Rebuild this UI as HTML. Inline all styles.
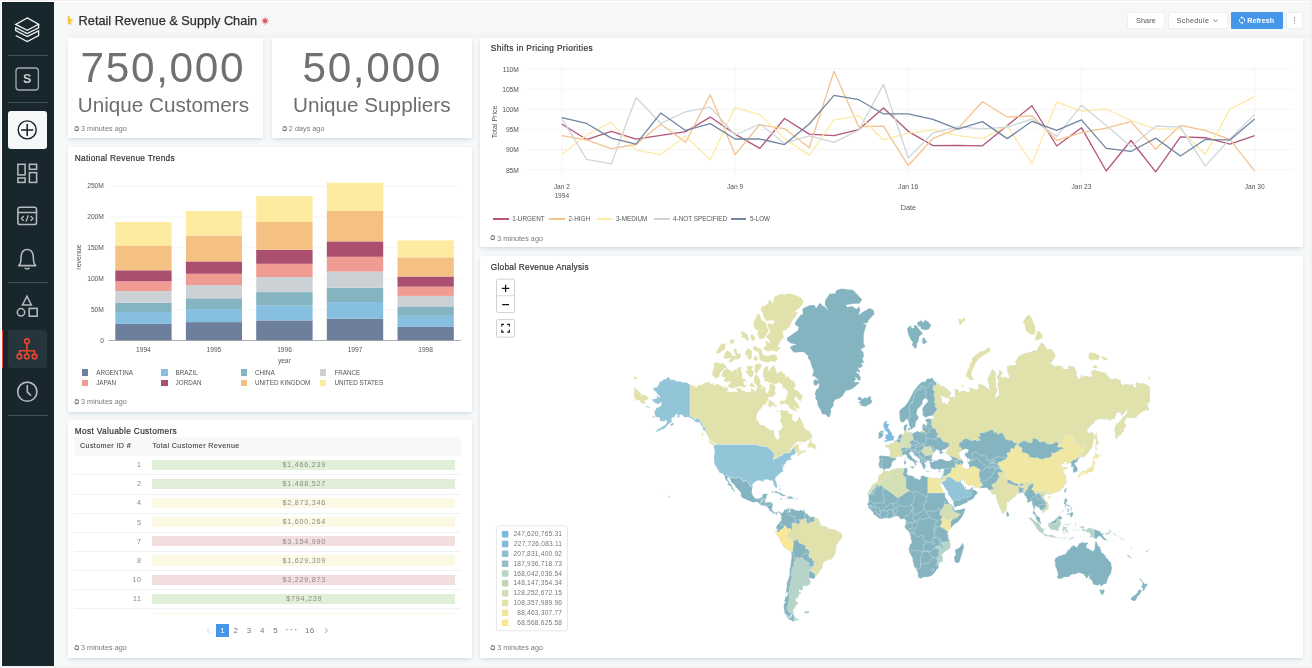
<!DOCTYPE html>
<html><head><meta charset="utf-8"><title>Retail Revenue &amp; Supply Chain</title>
<style>
html,body{margin:0;padding:0}
body{width:1312px;height:668px;overflow:hidden;background:#f2f2f2;font-family:"Liberation Sans",sans-serif;position:relative}
#lb{position:absolute;left:1px;top:1px;width:1309px;height:665px;background:#fff}
#app{position:absolute;left:2px;top:2px;width:1308px;height:664px;background:#f6f8f9;overflow:hidden}
#side{position:absolute;left:2px;top:2px;width:52px;height:664px;background:#18262e}
.t{position:absolute;line-height:20px;height:20px;white-space:nowrap;font-family:"Liberation Sans",sans-serif}
.card{position:absolute;background:#fff;border-radius:1.5px;box-shadow:0 2px 4px -1px rgba(102,136,153,.32),0 0 1px rgba(102,136,153,.05)}
.ri{display:block;width:100%;height:100%}
.div{position:absolute;left:8px;width:39.5px;height:1px;background:#46525a}
svg{position:absolute;left:0;top:0;overflow:visible}
.btn{position:absolute;background:#fff;border-radius:1.2px;box-shadow:0 0 0 .6px #e3e7ea}
.row{position:absolute;left:74.2px;width:386.6px;height:1px;background:#eff1f2}
.bar{position:absolute;left:152.2px;width:302.8px;height:10.2px}
#root{position:absolute;left:0;top:0;width:1312px;height:668px;overflow:hidden;will-change:transform}
</style></head><body><div id="root">
<div id="lb"></div><div id="app"></div><div id="side"></div>

<div class="div" style="top:54.6px"></div><div class="div" style="top:102.2px"></div>
<div class="div" style="top:282.2px"></div><div class="div" style="top:415.2px"></div>
<div style="position:absolute;left:8px;top:110.8px;width:38.8px;height:38.4px;background:#f5f7f8;border-radius:3px"></div>
<div style="position:absolute;left:8px;top:329.6px;width:38.8px;height:38.6px;background:#26343c;border-radius:3px"></div>
<div style="position:absolute;left:2px;top:329.6px;width:1.4px;height:38.6px;background:#e8472d"></div>
<svg width="60" height="668" viewBox="0 0 60 668" fill="none" stroke-linecap="round" stroke-linejoin="round">
 <!-- logo -->
 <g stroke="#f1f3f4" stroke-width="1.3" stroke-linejoin="miter" stroke-linecap="butt">
  <path d="M27.24 17.9 L38.6 24.2 L27.24 30.3 L15.7 24.4 Z"/>
  <path d="M38.6 24.2 V27.9 L27.24 33.6 L15.7 27.7 V30.7 L27.24 36.5 L38.6 30.9 V35.7 L27.24 41.6 L15.7 35.5"/>
 </g>
 <!-- S box -->
 <rect x="16" y="68" width="22.4" height="22" rx="3" stroke="#a3aaae" stroke-width="1.3"/>
 <!-- plus circle -->
 <circle cx="27.2" cy="129.9" r="9" stroke="#151c21" stroke-width="1.4"/>
 <path d="M27.2 124.4V135.4M21.7 129.9H32.7" stroke="#151c21" stroke-width="1.5"/>
 <!-- dashboard -->
 <g stroke="#b4babd" stroke-width="1.55" stroke-linejoin="miter">
  <rect x="17.9" y="164.3" width="7.2" height="10.6"/><rect x="29.4" y="164.3" width="7.2" height="5"/>
  <rect x="17.9" y="178" width="7.2" height="4.4"/><rect x="29.4" y="172.6" width="7.2" height="9.8"/>
 </g>
 <!-- code -->
 <g stroke="#b4babd" stroke-width="1.55">
  <rect x="17.9" y="207.2" width="18.6" height="17.4" rx="2.2"/><path d="M17.9 212.4H36.5"/>
  <path d="M23.4 216.4L21.4 218.4 23.4 220.4M31 216.4L33 218.4 31 220.4M28.2 215.8L26.2 221" stroke-width="1.35"/>
 </g>
 <!-- bell -->
 <g stroke="#b4babd" stroke-width="1.55">
  <path d="M18.6 265.6H35.8C33.9 264 33.4 262 33.4 258.4C33.4 252.6 31 249.4 27.2 249.4C23.4 249.4 21 252.6 21 258.4C21 262 20.5 264 18.6 265.6Z"/>
  <path d="M25.2 268.2C25.8 269.2 28.6 269.2 29.2 268.2"/>
 </g>
 <!-- shapes -->
 <g stroke="#b4babd" stroke-width="1.55" stroke-linejoin="miter">
  <path d="M26.9 296.2L31.3 305H22.5Z"/><circle cx="21" cy="312.3" r="3.7"/><rect x="29.2" y="308.4" width="8" height="7.8"/>
 </g>
 <!-- tree -->
 <g stroke="#e8472d" stroke-width="1.6">
  <circle cx="26.9" cy="341.2" r="2.3"/><path d="M26.9 343.6V354M19.4 354V350.8H34.5V354"/>
  <circle cx="19.4" cy="356.4" r="2.3"/><circle cx="26.9" cy="356.4" r="2.3"/><circle cx="34.5" cy="356.4" r="2.3"/>
 </g>
 <!-- clock -->
 <g stroke="#b4babd" stroke-width="1.6"><circle cx="27.3" cy="391.7" r="9.6"/><path d="M27.3 385.6V391.9L30.6 395.2"/></g>
</svg>

<div class="t" style="left:-272.8px;width:600px;text-align:center;top:69.20px;font-size:12.6px;color:#c9ced1;font-weight:700;letter-spacing:0px;">S</div>
<div style="position:absolute;left:68px;top:2px;width:1242px;height:34.8px;background:linear-gradient(#f6f7f8 0,#f6f7f8 88%,#eef1f3 100%)"></div>
<svg width="300" height="40" viewBox="0 0 300 40"><path d="M67.8 15.6L69.4 15.9 70.3 19 73.4 19.6 71 21.7 71.5 25 69 23.8 67.8 24.3Z" fill="#f6c445"/><g stroke="#e5727f" stroke-width="1"><path d="M265.1 17.2V24.6M261.4 20.9H268.8M262.5 18.3L267.7 23.5M267.7 18.3L262.5 23.5"/></g><circle cx="265.1" cy="20.9" r="2.1" fill="#e25a6a"/></svg>
<div class="t" style="left:78.6px;top:11.30px;font-size:12.75px;color:#2f2f2f;font-weight:400;letter-spacing:0.0px;-webkit-text-stroke:.25px #2f2f2f;">Retail Revenue &amp; Supply Chain</div>
<div class="btn" style="left:1127.6px;top:12.6px;width:36.6px;height:15.8px"></div>
<div class="btn" style="left:1168.6px;top:12.6px;width:58.6px;height:15.8px"></div>
<div class="btn" style="left:1231px;top:11.8px;width:51.9px;height:17.3px;background:#4596e8;box-shadow:none"></div>
<div class="btn" style="left:1286.8px;top:12.6px;width:15.4px;height:15.8px"></div>
<div class="t" style="left:845.9000000000001px;width:600px;text-align:center;top:10.50px;font-size:7.2px;color:#555;font-weight:400;letter-spacing:0.1px;">Share</div>
<div class="t" style="left:1176.6px;top:10.50px;font-size:7.2px;color:#555;font-weight:400;letter-spacing:0.33px;">Schedule</div>
<svg width="1312" height="40" viewBox="0 0 1312 40" fill="none"><path d="M1213.4 19.4L1215.6 21.8 1217.8 19.4" stroke="#666" stroke-width=".8"/><g fill="#7a7a7a"><circle cx="1294.5" cy="18" r=".65"/><circle cx="1294.5" cy="20.4" r=".65"/><circle cx="1294.5" cy="22.8" r=".65"/></g><g stroke="#fff" stroke-width=".95" fill="none"><path d="M1242 17.6A2.6 2.6 0 0 1 1244.3 21.4M1242 23A2.6 2.6 0 0 1 1239.7 19.2"/></g><path d="M1240.9 16.3L1242.6 17.6 1240.9 18.9zM1243.1 24.3L1241.4 23 1243.1 21.7z" fill="#fff"/></svg>
<div class="t" style="left:1247.2px;top:10.50px;font-size:7.2px;color:#fff;font-weight:700;letter-spacing:0.03px;">Refresh</div>
<div class="card" style="left:67.8px;top:37.6px;width:195.6px;height:100.8px"></div>
<div class="card" style="left:271.9px;top:37.6px;width:199.8px;height:100.8px"></div>
<div class="card" style="left:67.8px;top:146.9px;width:403.9px;height:264.9px"></div>
<div class="card" style="left:67.8px;top:420.4px;width:403.9px;height:237.2px"></div>
<div class="card" style="left:480px;top:37.6px;width:823px;height:209.4px"></div>
<div class="card" style="left:480px;top:255.6px;width:823px;height:402px"></div>
<div class="t" style="left:-137.1px;width:600px;text-align:center;top:58.40px;font-size:42.4px;color:#707070;font-weight:400;letter-spacing:1.65px;line-height:50px;height:50px;margin-top:-15px;">750,000</div>
<div class="t" style="left:-136.6px;width:600px;text-align:center;top:94.60px;font-size:20.7px;color:#6e6e6e;font-weight:400;letter-spacing:0px;">Unique Customers</div>
<div style="position:absolute;left:74.1px;top:126.0px;width:5.4px;height:5.4px"><svg class="ri" viewBox="0 0 10 10"><circle cx="5" cy="5" r="3.6" fill="none" stroke="#6a6a6a" stroke-width="1.9" stroke-dasharray="9.4 1.9" stroke-dashoffset="-1"/><path d="M3.2 0.1L5.9 1.5 3.6 3.1zM6.8 9.9L4.1 8.5 6.4 6.9z" fill="#6a6a6a"/></svg></div><div class="t" style="left:81.0px;top:119.10px;font-size:7.2px;color:#767676;font-weight:400;letter-spacing:0.05px;">3 minutes ago</div>
<div class="t" style="left:72.19999999999999px;width:600px;text-align:center;top:58.40px;font-size:42.4px;color:#707070;font-weight:400;letter-spacing:1.65px;line-height:50px;height:50px;margin-top:-15px;">50,000</div>
<div class="t" style="left:71.80000000000001px;width:600px;text-align:center;top:94.60px;font-size:20.7px;color:#6e6e6e;font-weight:400;letter-spacing:0px;">Unique Suppliers</div>
<div style="position:absolute;left:281.90000000000003px;top:126.0px;width:5.4px;height:5.4px"><svg class="ri" viewBox="0 0 10 10"><circle cx="5" cy="5" r="3.6" fill="none" stroke="#6a6a6a" stroke-width="1.9" stroke-dasharray="9.4 1.9" stroke-dashoffset="-1"/><path d="M3.2 0.1L5.9 1.5 3.6 3.1zM6.8 9.9L4.1 8.5 6.4 6.9z" fill="#6a6a6a"/></svg></div><div class="t" style="left:288.8px;top:119.10px;font-size:7.2px;color:#767676;font-weight:400;letter-spacing:0.05px;">2 days ago</div>
<div class="t" style="left:74.8px;top:147.60px;font-size:8.3px;color:#333;font-weight:400;letter-spacing:0.28px;-webkit-text-stroke:.2px #333;">National Revenue Trends</div>
<svg width="1312" height="668" viewBox="0 0 1312 668"><line x1="108.5" x2="461" y1="186.20" y2="186.20" stroke="#f0f1f1" stroke-width="0.7"/>
<line x1="108.5" x2="461" y1="217.04" y2="217.04" stroke="#f0f1f1" stroke-width="0.7"/>
<line x1="108.5" x2="461" y1="247.88" y2="247.88" stroke="#f0f1f1" stroke-width="0.7"/>
<line x1="108.5" x2="461" y1="278.72" y2="278.72" stroke="#f0f1f1" stroke-width="0.7"/>
<line x1="108.5" x2="461" y1="309.56" y2="309.56" stroke="#f0f1f1" stroke-width="0.7"/>
<rect x="115.30" y="323.90" width="56.30" height="16.50" fill="#6e7f9d"/>
<rect x="115.30" y="312.10" width="56.30" height="11.80" fill="#86bfe0"/>
<rect x="115.30" y="302.90" width="56.30" height="9.20" fill="#85b4c1"/>
<rect x="115.30" y="291.10" width="56.30" height="11.80" fill="#cbd1d5"/>
<rect x="115.30" y="281.30" width="56.30" height="9.80" fill="#f09c92"/>
<rect x="115.30" y="270.30" width="56.30" height="11.00" fill="#ab4f71"/>
<rect x="115.30" y="245.50" width="56.30" height="24.80" fill="#f5c182"/>
<rect x="115.30" y="222.00" width="56.30" height="23.50" fill="#fdeb9f"/>
<rect x="185.90" y="322.10" width="56.10" height="18.30" fill="#6e7f9d"/>
<rect x="185.90" y="309.10" width="56.10" height="13.00" fill="#86bfe0"/>
<rect x="185.90" y="298.30" width="56.10" height="10.80" fill="#85b4c1"/>
<rect x="185.90" y="285.10" width="56.10" height="13.20" fill="#cbd1d5"/>
<rect x="185.90" y="273.80" width="56.10" height="11.30" fill="#f09c92"/>
<rect x="185.90" y="261.40" width="56.10" height="12.40" fill="#ab4f71"/>
<rect x="185.90" y="235.50" width="56.10" height="25.90" fill="#f5c182"/>
<rect x="185.90" y="211.00" width="56.10" height="24.50" fill="#fdeb9f"/>
<rect x="256.20" y="320.40" width="56.40" height="20.00" fill="#6e7f9d"/>
<rect x="256.20" y="305.30" width="56.40" height="15.10" fill="#86bfe0"/>
<rect x="256.20" y="292.10" width="56.40" height="13.20" fill="#85b4c1"/>
<rect x="256.20" y="277.00" width="56.40" height="15.10" fill="#cbd1d5"/>
<rect x="256.20" y="263.80" width="56.40" height="13.20" fill="#f09c92"/>
<rect x="256.20" y="249.80" width="56.40" height="14.00" fill="#ab4f71"/>
<rect x="256.20" y="222.00" width="56.40" height="27.80" fill="#f5c182"/>
<rect x="256.20" y="196.20" width="56.40" height="25.80" fill="#fdeb9f"/>
<rect x="326.80" y="318.60" width="56.40" height="21.80" fill="#6e7f9d"/>
<rect x="326.80" y="302.10" width="56.40" height="16.50" fill="#86bfe0"/>
<rect x="326.80" y="287.80" width="56.40" height="14.30" fill="#85b4c1"/>
<rect x="326.80" y="271.60" width="56.40" height="16.20" fill="#cbd1d5"/>
<rect x="326.80" y="256.80" width="56.40" height="14.80" fill="#f09c92"/>
<rect x="326.80" y="241.40" width="56.40" height="15.40" fill="#ab4f71"/>
<rect x="326.80" y="211.00" width="56.40" height="30.40" fill="#f5c182"/>
<rect x="326.80" y="182.70" width="56.40" height="28.30" fill="#fdeb9f"/>
<rect x="397.50" y="326.90" width="56.30" height="13.50" fill="#6e7f9d"/>
<rect x="397.50" y="315.90" width="56.30" height="11.00" fill="#86bfe0"/>
<rect x="397.50" y="306.40" width="56.30" height="9.50" fill="#85b4c1"/>
<rect x="397.50" y="295.90" width="56.30" height="10.50" fill="#cbd1d5"/>
<rect x="397.50" y="286.70" width="56.30" height="9.20" fill="#f09c92"/>
<rect x="397.50" y="276.50" width="56.30" height="10.20" fill="#ab4f71"/>
<rect x="397.50" y="257.40" width="56.30" height="19.10" fill="#f5c182"/>
<rect x="397.50" y="240.40" width="56.30" height="17.00" fill="#fdeb9f"/>
<line x1="108.5" x2="461" y1="340.5" y2="340.5" stroke="#8a8f94" stroke-width="0.7"/></svg>
<div class="t" style="right:1208.1px;top:176.30px;font-size:6.7px;color:#555;font-weight:400;letter-spacing:0px;">250M</div>
<div class="t" style="right:1208.1px;top:207.14px;font-size:6.7px;color:#555;font-weight:400;letter-spacing:0px;">200M</div>
<div class="t" style="right:1208.1px;top:237.98px;font-size:6.7px;color:#555;font-weight:400;letter-spacing:0px;">150M</div>
<div class="t" style="right:1208.1px;top:268.82px;font-size:6.7px;color:#555;font-weight:400;letter-spacing:0px;">100M</div>
<div class="t" style="right:1208.1px;top:299.66px;font-size:6.7px;color:#555;font-weight:400;letter-spacing:0px;">50M</div>
<div class="t" style="right:1208.1px;top:330.50px;font-size:6.7px;color:#555;font-weight:400;letter-spacing:0px;">0</div>
<div class="t" style="left:-156.6px;width:600px;text-align:center;top:340.00px;font-size:6.6px;color:#555;font-weight:400;letter-spacing:0px;">1994</div>
<div class="t" style="left:-86.05000000000001px;width:600px;text-align:center;top:340.00px;font-size:6.6px;color:#555;font-weight:400;letter-spacing:0px;">1995</div>
<div class="t" style="left:-15.5px;width:600px;text-align:center;top:340.00px;font-size:6.6px;color:#555;font-weight:400;letter-spacing:0px;">1996</div>
<div class="t" style="left:55.049999999999955px;width:600px;text-align:center;top:340.00px;font-size:6.6px;color:#555;font-weight:400;letter-spacing:0px;">1997</div>
<div class="t" style="left:125.60000000000002px;width:600px;text-align:center;top:340.00px;font-size:6.6px;color:#555;font-weight:400;letter-spacing:0px;">1998</div>
<div class="t" style="left:-15.699999999999989px;width:600px;text-align:center;top:350.60px;font-size:6.6px;color:#555;font-weight:400;letter-spacing:0px;">year</div>
<div class="t" style="left:-220.6px;width:600px;text-align:center;top:247.20px;font-size:7.0px;color:#555;font-weight:400;letter-spacing:0px;transform:rotate(-90deg);">revenue</div>
<div style="position:absolute;left:81.9px;top:369.2px;width:6.4px;height:6.4px;background:#6e7f9d"></div>
<div class="t" style="left:96.2px;top:362.50px;font-size:6.3px;color:#555;font-weight:400;letter-spacing:0px;">ARGENTINA</div>
<div style="position:absolute;left:161.3px;top:369.2px;width:6.4px;height:6.4px;background:#86bfe0"></div>
<div class="t" style="left:175.60000000000002px;top:362.50px;font-size:6.3px;color:#555;font-weight:400;letter-spacing:0px;">BRAZIL</div>
<div style="position:absolute;left:240.7px;top:369.2px;width:6.4px;height:6.4px;background:#85b4c1"></div>
<div class="t" style="left:255.00000000000003px;top:362.50px;font-size:6.3px;color:#555;font-weight:400;letter-spacing:0px;">CHINA</div>
<div style="position:absolute;left:320.1px;top:369.2px;width:6.4px;height:6.4px;background:#cbd1d5"></div>
<div class="t" style="left:334.40000000000003px;top:362.50px;font-size:6.3px;color:#555;font-weight:400;letter-spacing:0px;">FRANCE</div>
<div style="position:absolute;left:81.9px;top:379.8px;width:6.4px;height:6.4px;background:#f09c92"></div>
<div class="t" style="left:96.2px;top:373.10px;font-size:6.3px;color:#555;font-weight:400;letter-spacing:0px;">JAPAN</div>
<div style="position:absolute;left:161.3px;top:379.8px;width:6.4px;height:6.4px;background:#ab4f71"></div>
<div class="t" style="left:175.60000000000002px;top:373.10px;font-size:6.3px;color:#555;font-weight:400;letter-spacing:0px;">JORDAN</div>
<div style="position:absolute;left:240.7px;top:379.8px;width:6.4px;height:6.4px;background:#f5c182"></div>
<div class="t" style="left:255.00000000000003px;top:373.10px;font-size:6.3px;color:#555;font-weight:400;letter-spacing:0px;">UNITED KINGDOM</div>
<div style="position:absolute;left:320.1px;top:379.8px;width:6.4px;height:6.4px;background:#fdeb9f"></div>
<div class="t" style="left:334.40000000000003px;top:373.10px;font-size:6.3px;color:#555;font-weight:400;letter-spacing:0px;">UNITED STATES</div>
<div style="position:absolute;left:74.1px;top:399.20000000000005px;width:5.4px;height:5.4px"><svg class="ri" viewBox="0 0 10 10"><circle cx="5" cy="5" r="3.6" fill="none" stroke="#6a6a6a" stroke-width="1.9" stroke-dasharray="9.4 1.9" stroke-dashoffset="-1"/><path d="M3.2 0.1L5.9 1.5 3.6 3.1zM6.8 9.9L4.1 8.5 6.4 6.9z" fill="#6a6a6a"/></svg></div><div class="t" style="left:81.0px;top:392.30px;font-size:7.2px;color:#767676;font-weight:400;letter-spacing:0.05px;">3 minutes ago</div>
<div class="t" style="left:490.8px;top:38.20px;font-size:8.3px;color:#333;font-weight:400;letter-spacing:0.37px;-webkit-text-stroke:.2px #333;">Shifts in Pricing Priorities</div>
<svg width="1312" height="668" viewBox="0 0 1312 668"><line x1="524" x2="1293" y1="69.00" y2="69.00" stroke="#f0f1f1" stroke-width="0.7"/>
<line x1="524" x2="1293" y1="89.13" y2="89.13" stroke="#f0f1f1" stroke-width="0.7"/>
<line x1="524" x2="1293" y1="109.26" y2="109.26" stroke="#f0f1f1" stroke-width="0.7"/>
<line x1="524" x2="1293" y1="129.39" y2="129.39" stroke="#f0f1f1" stroke-width="0.7"/>
<line x1="524" x2="1293" y1="149.52" y2="149.52" stroke="#f0f1f1" stroke-width="0.7"/>
<line x1="524" x2="1293" y1="169.65" y2="169.65" stroke="#f0f1f1" stroke-width="0.7"/>
<line x1="561.80" x2="561.80" y1="66" y2="178" stroke="#f0f1f1" stroke-width="0.7"/>
<line x1="735.02" x2="735.02" y1="66" y2="178" stroke="#f0f1f1" stroke-width="0.7"/>
<line x1="908.24" x2="908.24" y1="66" y2="178" stroke="#f0f1f1" stroke-width="0.7"/>
<line x1="1081.47" x2="1081.47" y1="66" y2="178" stroke="#f0f1f1" stroke-width="0.7"/>
<line x1="1254.69" x2="1254.69" y1="66" y2="178" stroke="#f0f1f1" stroke-width="0.7"/>
<polyline points="561.80,124.02 586.55,139.57 611.29,131.34 636.04,139.20 660.78,135.36 685.53,131.70 710.28,117.07 735.02,134.08 759.77,148.35 784.51,118.53 809.26,134.08 834.01,135.54 858.75,129.51 883.50,107.92 908.24,131.34 932.99,145.60 957.74,145.42 982.48,145.79 1007.23,125.48 1031.97,105.73 1056.72,145.97 1081.47,127.68 1106.21,171.03 1130.96,140.48 1155.70,171.94 1180.45,136.82 1205.20,137.74 1229.94,144.14 1254.69,135.54" fill="none" stroke="#b3557a" stroke-width="1.3" stroke-linejoin="round"/>
<polyline points="561.80,135.54 586.55,139.93 611.29,148.71 636.04,144.51 660.78,124.02 685.53,142.31 710.28,94.75 735.02,154.57 759.77,124.75 784.51,128.59 809.26,147.80 834.01,71.34 858.75,126.76 883.50,126.22 908.24,165.54 932.99,138.47 957.74,128.59 982.48,101.70 1007.23,117.07 1031.97,115.79 1056.72,140.48 1081.47,132.62 1106.21,128.04 1130.96,121.64 1155.70,149.08 1180.45,125.48 1205.20,130.42 1229.94,139.57 1254.69,171.03" fill="none" stroke="#f5c28f" stroke-width="1.3" stroke-linejoin="round"/>
<polyline points="561.80,154.20 586.55,135.00 611.29,122.19 636.04,150.18 660.78,154.57 685.53,135.91 710.28,159.69 735.02,107.56 759.77,114.51 784.51,138.65 809.26,155.12 834.01,119.81 858.75,115.79 883.50,139.93 908.24,133.17 932.99,129.87 957.74,135.54 982.48,138.65 1007.23,125.85 1031.97,163.71 1056.72,102.07 1081.47,111.22 1106.21,109.02 1130.96,120.36 1155.70,129.14 1180.45,129.14 1205.20,154.57 1229.94,109.39 1254.69,96.58" fill="none" stroke="#fdeaa6" stroke-width="1.3" stroke-linejoin="round"/>
<polyline points="561.80,118.17 586.55,159.32 611.29,163.90 636.04,97.50 660.78,123.29 685.53,111.77 710.28,107.19 735.02,135.00 759.77,124.02 784.51,143.23 809.26,135.91 834.01,142.31 858.75,130.06 883.50,84.33 908.24,158.04 932.99,132.80 957.74,126.76 982.48,128.78 1007.23,127.13 1031.97,119.08 1056.72,136.46 1081.47,105.18 1106.21,125.48 1130.96,146.52 1155.70,126.22 1180.45,127.13 1205.20,166.09 1229.94,139.02 1254.69,114.51" fill="none" stroke="#cfd6da" stroke-width="1.3" stroke-linejoin="round"/>
<polyline points="561.80,117.62 586.55,123.47 611.29,138.10 636.04,144.14 660.78,113.05 685.53,130.42 710.28,123.65 735.02,139.02 759.77,139.02 784.51,144.51 809.26,124.02 834.01,95.30 858.75,99.69 883.50,113.96 908.24,113.96 932.99,119.45 957.74,129.14 982.48,121.64 1007.23,138.65 1031.97,121.28 1056.72,130.42 1081.47,119.81 1106.21,148.35 1130.96,151.46 1155.70,138.10 1180.45,156.03 1205.20,139.57 1229.94,139.93 1254.69,118.90" fill="none" stroke="#7286a2" stroke-width="1.3" stroke-linejoin="round"/></svg>
<div class="t" style="right:793.1px;top:59.90px;font-size:6.7px;color:#555;font-weight:400;letter-spacing:0px;">110M</div>
<div class="t" style="right:793.1px;top:80.03px;font-size:6.7px;color:#555;font-weight:400;letter-spacing:0px;">105M</div>
<div class="t" style="right:793.1px;top:100.16px;font-size:6.7px;color:#555;font-weight:400;letter-spacing:0px;">100M</div>
<div class="t" style="right:793.1px;top:120.29px;font-size:6.7px;color:#555;font-weight:400;letter-spacing:0px;">95M</div>
<div class="t" style="right:793.1px;top:140.42px;font-size:6.7px;color:#555;font-weight:400;letter-spacing:0px;">90M</div>
<div class="t" style="right:793.1px;top:160.55px;font-size:6.7px;color:#555;font-weight:400;letter-spacing:0px;">85M</div>
<div class="t" style="left:261.79999999999995px;width:600px;text-align:center;top:177.00px;font-size:6.6px;color:#555;font-weight:400;letter-spacing:0px;">Jan 2</div>
<div class="t" style="left:435.02px;width:600px;text-align:center;top:177.00px;font-size:6.6px;color:#555;font-weight:400;letter-spacing:0px;">Jan 9</div>
<div class="t" style="left:608.24px;width:600px;text-align:center;top:177.00px;font-size:6.6px;color:#555;font-weight:400;letter-spacing:0px;">Jan 16</div>
<div class="t" style="left:781.46px;width:600px;text-align:center;top:177.00px;font-size:6.6px;color:#555;font-weight:400;letter-spacing:0px;">Jan 23</div>
<div class="t" style="left:954.6799999999998px;width:600px;text-align:center;top:177.00px;font-size:6.6px;color:#555;font-weight:400;letter-spacing:0px;">Jan 30</div>
<div class="t" style="left:261.79999999999995px;width:600px;text-align:center;top:185.80px;font-size:6.6px;color:#555;font-weight:400;letter-spacing:0px;">1994</div>
<div class="t" style="left:608.4px;width:600px;text-align:center;top:197.90px;font-size:7.2px;color:#555;font-weight:400;letter-spacing:0px;">Date</div>
<div class="t" style="left:195.39999999999998px;width:600px;text-align:center;top:111.60px;font-size:6.9px;color:#555;font-weight:400;letter-spacing:0.05px;transform:rotate(-90deg);">Total Price</div>
<div style="position:absolute;left:493.1px;top:218.2px;width:15.9px;height:1.4px;background:#b3557a"></div>
<div class="t" style="left:512.2px;top:208.90px;font-size:6.35px;color:#555;font-weight:400;letter-spacing:0px;">1-URGENT</div>
<div style="position:absolute;left:549.1px;top:218.2px;width:15.9px;height:1.4px;background:#f5c28f"></div>
<div class="t" style="left:568.6px;top:208.90px;font-size:6.35px;color:#555;font-weight:400;letter-spacing:0px;">2-HIGH</div>
<div style="position:absolute;left:596.6px;top:218.2px;width:15.9px;height:1.4px;background:#fdeaa6"></div>
<div class="t" style="left:616px;top:208.90px;font-size:6.35px;color:#555;font-weight:400;letter-spacing:0px;">3-MEDIUM</div>
<div style="position:absolute;left:653.9px;top:218.2px;width:15.9px;height:1.4px;background:#cfd6da"></div>
<div class="t" style="left:673px;top:208.90px;font-size:6.35px;color:#555;font-weight:400;letter-spacing:0px;">4-NOT SPECIFIED</div>
<div style="position:absolute;left:730.6px;top:218.2px;width:15.9px;height:1.4px;background:#7286a2"></div>
<div class="t" style="left:750px;top:208.90px;font-size:6.35px;color:#555;font-weight:400;letter-spacing:0px;">5-LOW</div>
<div style="position:absolute;left:490.3px;top:235.4px;width:5.4px;height:5.4px"><svg class="ri" viewBox="0 0 10 10"><circle cx="5" cy="5" r="3.6" fill="none" stroke="#6a6a6a" stroke-width="1.9" stroke-dasharray="9.4 1.9" stroke-dashoffset="-1"/><path d="M3.2 0.1L5.9 1.5 3.6 3.1zM6.8 9.9L4.1 8.5 6.4 6.9z" fill="#6a6a6a"/></svg></div><div class="t" style="left:497.2px;top:228.50px;font-size:7.2px;color:#767676;font-weight:400;letter-spacing:0.05px;">3 minutes ago</div>
<div class="t" style="left:74.8px;top:420.80px;font-size:8.3px;color:#333;font-weight:400;letter-spacing:0.34px;-webkit-text-stroke:.2px #333;">Most Valuable Customers</div>
<div style="position:absolute;left:74.2px;top:437.2px;width:386.6px;height:18.4px;background:#f7f8f9"></div>
<div class="t" style="left:80px;top:436.10px;font-size:7.2px;color:#3c3c3c;font-weight:400;letter-spacing:0.36px;-webkit-text-stroke:.1px #3c3c3c;">Customer ID #</div>
<div class="t" style="left:152.4px;top:436.10px;font-size:7.2px;color:#3c3c3c;font-weight:400;letter-spacing:0.37px;-webkit-text-stroke:.1px #3c3c3c;">Total Customer Revenue</div>
<div class="row" style="top:474.4px"></div>
<div class="bar" style="top:459.9px;background:#e1eed8"></div>
<div class="t" style="right:1170.6px;top:455.20px;font-size:7.2px;color:#8a8a8a;font-weight:400;letter-spacing:0.5px;">1</div>
<div class="t" style="left:4.300000000000011px;width:600px;text-align:center;top:455.10px;font-size:7.2px;color:#8a8a8a;font-weight:400;letter-spacing:0.75px;">$1,466,239</div>
<div class="row" style="top:493.5px"></div>
<div class="bar" style="top:479.0px;background:#e1eed8"></div>
<div class="t" style="right:1170.6px;top:474.30px;font-size:7.2px;color:#8a8a8a;font-weight:400;letter-spacing:0.5px;">2</div>
<div class="t" style="left:4.300000000000011px;width:600px;text-align:center;top:474.20px;font-size:7.2px;color:#8a8a8a;font-weight:400;letter-spacing:0.75px;">$1,488,527</div>
<div class="row" style="top:512.6px"></div>
<div class="bar" style="top:498.1px;background:#fbf8e3"></div>
<div class="t" style="right:1170.6px;top:493.40px;font-size:7.2px;color:#8a8a8a;font-weight:400;letter-spacing:0.5px;">4</div>
<div class="t" style="left:4.300000000000011px;width:600px;text-align:center;top:493.30px;font-size:7.2px;color:#8a8a8a;font-weight:400;letter-spacing:0.75px;">$2,873,346</div>
<div class="row" style="top:531.7px"></div>
<div class="bar" style="top:517.2px;background:#fbf8e3"></div>
<div class="t" style="right:1170.6px;top:512.50px;font-size:7.2px;color:#8a8a8a;font-weight:400;letter-spacing:0.5px;">5</div>
<div class="t" style="left:4.300000000000011px;width:600px;text-align:center;top:512.40px;font-size:7.2px;color:#8a8a8a;font-weight:400;letter-spacing:0.75px;">$1,600,264</div>
<div class="row" style="top:550.8px"></div>
<div class="bar" style="top:536.3px;background:#f2dede"></div>
<div class="t" style="right:1170.6px;top:531.60px;font-size:7.2px;color:#8a8a8a;font-weight:400;letter-spacing:0.5px;">7</div>
<div class="t" style="left:4.300000000000011px;width:600px;text-align:center;top:531.50px;font-size:7.2px;color:#8a8a8a;font-weight:400;letter-spacing:0.75px;">$3,154,990</div>
<div class="row" style="top:569.9px"></div>
<div class="bar" style="top:555.4px;background:#fbf8e3"></div>
<div class="t" style="right:1170.6px;top:550.70px;font-size:7.2px;color:#8a8a8a;font-weight:400;letter-spacing:0.5px;">8</div>
<div class="t" style="left:4.300000000000011px;width:600px;text-align:center;top:550.60px;font-size:7.2px;color:#8a8a8a;font-weight:400;letter-spacing:0.75px;">$1,629,309</div>
<div class="row" style="top:589.0px"></div>
<div class="bar" style="top:574.5px;background:#f2dede"></div>
<div class="t" style="right:1170.6px;top:569.80px;font-size:7.2px;color:#8a8a8a;font-weight:400;letter-spacing:0.5px;">10</div>
<div class="t" style="left:4.300000000000011px;width:600px;text-align:center;top:569.70px;font-size:7.2px;color:#8a8a8a;font-weight:400;letter-spacing:0.75px;">$3,229,873</div>
<div class="row" style="top:608.1px"></div>
<div class="bar" style="top:593.6px;background:#e1eed8"></div>
<div class="t" style="right:1170.6px;top:588.90px;font-size:7.2px;color:#8a8a8a;font-weight:400;letter-spacing:0.5px;">11</div>
<div class="t" style="left:4.300000000000011px;width:600px;text-align:center;top:588.80px;font-size:7.2px;color:#8a8a8a;font-weight:400;letter-spacing:0.75px;">$794,239</div>
<div class="bar" style="top:613.3px;height:1px;background:#fbf5dc"></div>
<div style="position:absolute;left:216px;top:623.6px;width:12.8px;height:13px;background:#4596e8"></div>
<div class="t" style="left:-77.6px;width:600px;text-align:center;top:620.60px;font-size:8px;color:#fff;font-weight:400;letter-spacing:0px;">1</div>
<div class="t" style="left:-64.19999999999999px;width:600px;text-align:center;top:620.60px;font-size:8px;color:#777;font-weight:400;letter-spacing:0.3px;">2</div>
<div class="t" style="left:-51px;width:600px;text-align:center;top:620.60px;font-size:8px;color:#777;font-weight:400;letter-spacing:0.3px;">3</div>
<div class="t" style="left:-37.60000000000002px;width:600px;text-align:center;top:620.60px;font-size:8px;color:#777;font-weight:400;letter-spacing:0.3px;">4</div>
<div class="t" style="left:-24.30000000000001px;width:600px;text-align:center;top:620.60px;font-size:8px;color:#777;font-weight:400;letter-spacing:0.3px;">5</div>
<div class="t" style="left:9.800000000000011px;width:600px;text-align:center;top:620.60px;font-size:8px;color:#777;font-weight:400;letter-spacing:0.3px;">16</div>
<div class="t" style="left:-7.800000000000011px;width:600px;text-align:center;top:619.90px;font-size:9px;color:#999;font-weight:700;letter-spacing:1.5px;">&middot;&middot;&middot;</div>
<svg width="400" height="668" viewBox="0 0 400 668" fill="none"><path d="M209.8 628.2L207.2 630.6 209.8 633" stroke="#c8c8c8" stroke-width=".8"/><path d="M324.9 628.2L327.5 630.6 324.9 633" stroke="#888" stroke-width=".8"/></svg>
<div style="position:absolute;left:74.1px;top:645.2px;width:5.4px;height:5.4px"><svg class="ri" viewBox="0 0 10 10"><circle cx="5" cy="5" r="3.6" fill="none" stroke="#6a6a6a" stroke-width="1.9" stroke-dasharray="9.4 1.9" stroke-dashoffset="-1"/><path d="M3.2 0.1L5.9 1.5 3.6 3.1zM6.8 9.9L4.1 8.5 6.4 6.9z" fill="#6a6a6a"/></svg></div><div class="t" style="left:81.0px;top:638.30px;font-size:7.2px;color:#767676;font-weight:400;letter-spacing:0.05px;">3 minutes ago</div>
<div class="t" style="left:490.8px;top:256.60px;font-size:8.3px;color:#333;font-weight:400;letter-spacing:0.25px;-webkit-text-stroke:.2px #333;">Global Revenue Analysis</div>
<svg width="1312" height="668" viewBox="0 0 1312 668"><defs><clipPath id="mc"><rect x="633.5" y="286" width="520" height="366"/></clipPath></defs><g clip-path="url(#mc)" stroke="#ffffff" stroke-opacity=".5" stroke-width=".5" stroke-linejoin="round">
<path d="M690.0 384.6L692.9 385.0L696.4 387.4L699.5 384.6L701.6 385.0L706.0 382.1L708.1 382.9L708.5 380.8L711.8 385.0L713.8 382.1L713.9 385.4L715.6 384.6L717.9 383.7L720.2 385.4L723.5 387.0L725.5 387.8L727.0 387.4L728.8 389.4L726.8 391.3L729.4 392.0L733.3 391.7L734.6 390.9L736.0 393.2L737.6 391.3L736.1 389.8L737.0 388.2L738.9 388.2L739.9 387.8L741.1 388.6L742.6 390.9L744.2 390.5L746.6 392.4L748.9 391.7L751.0 391.7L750.7 389.4L752.0 388.6L754.3 390.1L754.3 393.5L755.2 390.5L756.3 390.5L757.0 386.6L755.5 384.2L753.8 382.5L753.9 377.7L755.6 374.6L757.5 375.0L758.9 377.3L760.9 382.1L759.6 384.2L762.3 385.0L762.2 389.0L764.2 385.8L765.9 388.6L765.5 391.3L766.8 393.9L768.4 391.3L769.4 387.8L769.5 383.3L771.5 383.7L773.7 384.2L775.5 386.2L775.7 388.2L774.5 390.5L775.5 392.4L775.4 394.3L772.7 396.8L770.7 397.2L769.1 396.1L768.6 397.9L767.4 401.0L766.9 402.4L765.2 404.7L763.2 405.0L762.1 406.3L761.9 408.2L760.3 408.9L758.5 411.3L757.0 414.6L756.5 417.0L756.3 420.4L758.5 420.6L759.1 423.4L759.8 425.2L761.8 424.7L764.5 425.7L765.9 426.8L766.9 428.1L768.6 428.8L770.2 429.9L772.5 430.1L774.1 430.4L774.0 432.3L774.4 434.8L775.4 437.4L777.5 439.7L778.7 439.0L779.4 436.4L778.7 432.8L777.7 431.4L780.0 430.4L781.5 428.6L782.4 426.8L782.3 425.0L781.3 422.5L779.5 420.6L781.3 417.5L780.5 414.9L780.1 410.4L781.1 409.5L783.5 410.4L785.0 410.7L786.3 410.1L787.6 411.0L789.3 412.9L789.7 414.0L792.3 414.0L792.3 416.7L792.7 420.1L794.0 420.6L795.2 422.3L797.2 420.6L798.6 417.5L799.5 416.4L800.6 419.0L802.5 422.3L804.0 425.5L803.5 427.3L805.3 428.6L806.6 430.1L808.9 430.9L809.9 431.6L810.5 433.6L811.5 434.0L812.1 434.8L812.2 437.6L810.2 439.2L807.8 439.9L806.0 441.9L803.6 442.2L800.5 441.7L798.3 441.7L796.9 441.9L795.7 443.5L793.9 444.4L791.7 447.4L790.1 449.3L791.3 448.9L793.6 446.1L796.6 444.4L798.7 444.2L800.0 445.3L798.7 446.5L799.2 448.9L799.6 450.6L801.5 451.6L803.9 451.2L805.3 448.9L805.5 450.3L806.3 451.2L804.6 452.4L801.3 453.6L800.0 454.4L798.3 456.0L797.3 455.8L797.2 454.0L799.7 452.4L797.4 452.4L795.9 452.8L794.9 451.6L794.9 448.7L794.3 448.0L793.3 448.5L792.9 448.0L791.7 449.5L791.3 451.2L790.7 452.0L790.1 452.4L789.7 453.0L787.0 453.0L784.7 453.0L782.5 454.8L782.0 455.8L778.5 456.0L778.8 456.4L779.0 457.2L777.1 458.2L775.5 458.5L774.0 459.5L773.1 459.3L772.9 458.7L774.0 457.0L774.4 455.8L773.7 452.4L772.2 451.4L772.4 451.0L771.5 450.3L771.5 449.9L770.5 449.7L768.1 447.6L765.4 446.1L764.1 446.8L761.9 446.1L760.8 446.5L759.3 445.7L757.9 445.5L756.9 445.3L756.5 445.0L756.2 443.7L755.6 443.7L755.6 444.6L734.4 444.6L716.1 444.6L715.5 443.9L713.1 442.4L712.1 441.5L709.5 440.6L708.6 438.5L708.8 437.1L707.0 436.0L706.8 434.0L705.0 432.3L705.0 431.1L705.8 429.9L705.8 428.3L703.3 426.5L701.9 423.6L700.9 421.7L699.6 420.4L698.7 419.2L697.9 417.8L696.4 418.7L695.0 420.4L693.9 418.4L692.9 417.3L691.4 416.4L690.0 416.4Z" fill="#e0e1ab"/>
<path d="M715.1 445.7L714.4 445.9L711.9 445.0L710.2 443.5L708.8 442.4L708.1 440.6L709.6 441.0L711.5 441.7L712.3 442.4L713.1 443.5L714.5 444.4ZM703.2 437.4L701.9 435.5L701.3 433.1L703.3 432.8L702.9 435.5ZM812.3 439.5L811.6 440.8L810.6 442.8L811.6 441.9L812.5 442.6L812.1 443.3L813.3 443.9L813.9 443.3L815.4 444.2L814.9 445.7L815.9 445.3L816.1 446.3L816.6 447.8L815.9 449.5L815.4 449.7L814.3 449.3L814.7 447.6L814.3 447.2L812.6 449.1L811.8 449.1L812.8 448.0L811.3 447.6L809.9 447.6L807.0 447.6L806.9 447.0L807.8 446.1L807.2 445.7L808.3 444.4L809.8 440.8L810.8 439.5L811.9 438.8ZM800.3 449.5L801.7 450.1L803.2 450.1L802.5 451.0L800.7 450.6L799.7 449.5ZM799.6 442.6L801.7 443.1L803.5 444.4L800.9 443.7ZM803.3 395.0L800.5 401.7L798.7 400.3L796.4 396.8L794.6 397.2L794.4 399.3L795.9 401.4L797.9 403.0L798.4 403.7L799.3 407.0L798.9 409.2L797.0 408.6L793.4 406.0L795.4 408.6L797.0 410.4L797.2 411.6L793.3 410.4L790.3 408.6L788.6 407.0L789.0 406.0L786.8 404.4L784.8 402.7L784.8 403.7L780.7 404.4L779.4 403.0L780.4 400.7L783.1 400.7L786.0 400.0L785.6 398.9L786.1 397.2L787.8 393.5L787.6 392.0L787.0 390.5L784.8 388.6L781.8 387.4L782.8 386.6L781.3 383.7L780.0 383.7L778.8 382.1L778.1 383.3L775.5 384.2L770.4 382.9L767.2 381.6L764.9 381.2L763.8 379.5L765.2 377.7L763.2 377.7L762.8 373.2L763.9 368.8L765.4 366.8L769.1 365.3L767.9 368.3L769.1 371.7L770.4 367.9L774.1 365.3L776.5 370.8L776.4 373.6L779.1 372.2L780.5 370.8L783.7 373.2L785.7 375.0L785.8 377.3L788.6 375.9L790.0 379.1L793.4 380.8L794.7 382.5L796.0 386.2L793.4 388.2L796.9 390.5L799.0 391.7L801.2 395.0L803.3 395.0ZM769.9 399.3L770.3 401.0L770.9 400.3L771.8 401.4L773.4 402.4L775.1 403.4L775.1 405.1L776.2 404.7L777.2 406.0L776.0 407.0L773.8 406.0L772.9 404.7L771.5 406.3L769.5 407.9L768.9 406.3L767.1 406.6L768.2 405.0L768.5 402.4L768.9 399.3ZM773.1 410.7L774.7 408.6L774.7 409.2L772.9 410.7L771.9 410.7ZM777.7 410.1L778.4 410.7L777.8 412.6L776.8 411.3ZM740.9 369.3L742.3 367.4L738.9 366.8L736.8 368.8L737.6 375.5L736.7 368.8L733.6 370.3L731.7 371.7L727.0 367.9L723.1 370.8L721.2 375.9L723.4 377.3L725.7 377.3L723.4 380.8L727.0 382.1L731.0 381.2L728.1 385.8L725.7 386.2L724.0 383.1L724.8 386.2L727.0 385.8L728.8 387.0L732.3 388.6L733.3 388.6L734.6 387.2L735.8 387.8L738.6 386.6L740.1 386.2L742.0 387.0L745.3 387.8L747.2 384.6L744.9 385.0L745.7 386.6L743.1 382.5L744.6 380.8L747.3 382.9L747.2 384.6L747.3 382.9L745.9 379.5L742.3 378.6L742.3 374.1L741.0 370.8ZM727.0 367.9L724.7 368.3L721.2 371.7L719.4 375.0L719.4 376.8L715.6 379.1L714.9 377.3L711.6 374.6L712.2 372.7L713.2 369.3L714.5 365.8L713.1 362.7L717.9 362.2L719.9 363.2L723.5 363.2L725.0 364.8L726.5 366.8ZM748.2 365.3L749.9 366.3L752.5 365.3L752.9 366.8L751.5 369.3L753.8 371.3L753.5 375.5L751.0 377.3L749.7 376.8L748.7 375.5L745.2 371.7L745.2 370.3L748.2 370.8L746.6 367.4L748.2 365.3ZM758.5 370.3L756.9 374.1L755.3 373.6L754.5 369.8L754.5 367.4L755.2 364.3L756.6 363.8L759.6 363.8L762.3 364.8L760.2 369.3L758.5 370.3ZM752.5 386.6L751.0 387.0L749.0 385.4L750.3 384.2L751.3 382.5L752.7 383.3L753.6 384.2L754.0 385.0L755.0 386.6L754.0 387.8L752.2 386.6ZM741.1 356.1L739.7 358.9L734.8 359.5L731.3 362.2L729.1 362.2L728.8 360.6L731.8 357.8L725.4 358.9L723.4 357.8L725.4 352.0L726.7 350.2L730.7 352.6L733.3 356.1L735.7 356.1L733.7 350.8L735.0 348.3L736.6 349.0L737.0 352.0L737.6 354.4L738.9 353.2L740.3 353.4ZM752.0 351.4L752.0 355.0L751.3 358.9L749.0 359.5L747.4 358.4L747.4 355.5L745.2 355.5L745.0 351.4L748.5 348.3L750.2 349.6L752.0 351.4ZM756.3 346.4L757.9 348.3L760.8 348.3L762.1 350.8L761.6 352.6L763.3 354.4L764.2 355.5L766.2 355.5L768.2 356.1L770.5 355.0L773.4 354.4L775.8 355.0L777.2 357.2L777.7 359.5L776.7 360.6L774.7 362.2L772.8 361.1L768.6 362.2L765.6 362.2L763.3 361.6L759.6 360.0L759.1 356.7L758.9 353.8L757.5 351.4L754.5 350.8L752.9 348.3L753.5 345.8ZM757.9 358.9L757.0 361.1L755.0 360.6L753.3 359.5L754.0 356.7L756.0 355.5L757.4 357.2ZM725.5 343.2L725.4 347.7L724.2 350.2L722.9 350.2L720.2 352.6L717.9 353.8L715.9 352.6L718.4 347.7L721.4 343.8L723.5 343.8ZM734.1 342.5L731.4 344.5L729.4 342.5L730.5 339.7L732.5 339.0L734.6 340.4ZM748.6 338.3L749.2 341.1L746.9 340.4L744.6 338.3L741.3 337.6L742.7 335.5L741.0 334.0L740.9 331.0L743.7 331.7L747.6 334.7ZM754.8 339.7L752.6 341.1L751.5 339.7L750.7 336.9L750.7 334.0L752.6 334.7L753.3 334.7L755.0 337.6ZM767.4 327.8L769.1 331.0L767.1 333.2L764.5 338.3L761.9 339.0L758.9 338.3L757.4 334.7L757.5 332.5L758.6 330.2L755.9 330.2L754.3 327.8L753.5 323.7L754.5 320.3L755.5 317.6L756.9 316.7L756.3 314.8L759.6 313.9L761.5 319.4L763.8 321.2L766.2 322.9L767.4 327.8ZM793.9 294.8L797.7 296.0L800.7 297.2L803.3 300.6L803.3 302.8L799.9 308.0L796.3 310.0L795.0 312.0L798.2 312.0L794.9 317.6L792.4 320.3L790.0 327.0L787.1 328.6L786.1 330.2L781.8 331.0L783.8 331.7L782.8 333.2L784.0 336.9L782.7 339.0L780.4 341.1L779.7 343.8L777.7 345.8L778.0 347.1L780.4 347.1L780.4 348.3L776.5 352.0L772.8 350.2L768.6 351.4L766.5 350.8L763.8 350.2L763.6 347.1L766.2 345.8L765.5 341.1L766.4 340.4L770.2 343.8L768.4 339.0L765.9 337.6L767.1 334.7L769.7 333.2L770.1 331.0L768.1 327.8L767.5 322.9L771.4 323.7L772.5 324.6L774.8 321.2L771.5 320.3L766.5 321.2L763.9 317.6L762.8 313.9L761.1 311.0L760.8 308.0L762.9 306.0L764.6 306.0L767.4 303.8L769.5 299.5L771.2 300.6L772.8 303.8L774.0 297.2L775.8 296.0L778.4 294.8L782.7 293.6L783.5 294.8L787.7 293.6L790.7 293.6L793.9 294.8Z" fill="#e0e1ab"/>
<path d="M690.0 384.6L686.3 382.3L683.3 382.5L680.0 381.2L676.1 381.2L674.0 379.5L670.9 379.9L669.8 378.2L667.7 376.8L665.5 379.5L664.2 379.1L661.5 381.2L659.9 381.6L658.2 385.4L656.5 387.4L653.9 387.4L653.0 389.4L655.0 390.9L656.5 392.4L657.5 394.3L659.2 395.7L660.3 397.9L657.5 396.1L656.3 396.1L657.3 397.9L653.6 399.3L651.2 399.3L653.2 401.4L656.3 403.7L658.8 404.0L660.8 402.4L661.6 402.4L661.3 404.4L660.6 406.6L659.5 406.6L657.8 407.6L656.2 407.9L655.8 409.5L654.6 411.0L654.0 412.9L655.2 414.0L654.8 416.4L656.0 416.4L657.3 417.8L659.2 417.3L659.9 418.4L659.8 421.2L662.2 420.9L664.2 421.7L664.9 420.6L667.1 420.4L666.1 423.9L664.9 425.0L662.6 426.5L660.8 427.6L658.8 428.6L657.1 430.1L655.7 431.0L655.9 432.1L657.6 431.6L659.1 430.7L660.5 429.9L661.9 429.4L663.1 429.2L665.1 428.1L668.1 424.4L669.5 423.6L671.1 422.5L672.4 420.4L671.1 419.8L671.7 418.4L673.4 417.0L674.7 419.5L674.4 418.1L675.1 415.2L676.7 414.3L676.2 413.5L677.5 414.3L677.1 417.5L680.0 417.3L679.1 415.5L681.3 414.6L682.8 415.2L683.0 415.9L684.4 417.3L685.8 417.3L687.7 417.0L688.7 417.3L690.3 418.1L691.6 418.7L692.9 419.2L694.6 421.5L696.3 422.3L698.6 422.3L699.9 422.5L700.7 425.0L702.5 427.1L702.9 429.4L705.0 431.1L705.8 429.9L705.8 428.3L703.3 426.5L701.9 423.6L700.9 421.7L699.6 420.4L698.7 419.2L697.9 417.8L696.4 418.7L695.0 420.4L693.9 418.4L692.9 417.3L691.4 416.4L690.0 416.4ZM672.8 425.2L671.4 426.3L670.7 425.5L670.4 424.2L671.7 423.4L672.5 422.9L673.4 423.1L674.1 423.9ZM646.0 405.7L646.9 406.3L647.7 406.0L648.9 407.0L650.3 407.3L650.2 407.6L649.2 408.2L648.0 407.6L647.5 407.0L646.2 407.3L645.9 407.0ZM654.8 417.3L653.5 417.7L652.0 416.7L653.5 416.1L654.6 416.4Z" fill="#93c5d9"/>
<path d="M669.2 497.5L668.7 497.5L668.4 496.6L668.7 495.8L669.7 496.1L670.2 496.9ZM668.4 495.2L667.7 494.9L667.5 494.7L668.1 494.7ZM666.1 494.1L665.5 494.1L665.2 493.6L665.8 493.5ZM663.6 493.2L663.1 492.9L663.4 492.7L663.8 492.9Z" fill="#93c5d9"/>
<path d="M716.1 444.6L713.4 446.1L714.2 449.1L714.4 450.6L714.5 452.0L714.2 455.6L713.8 457.4L714.1 458.9L714.1 460.7L713.8 462.2L714.5 463.1L714.8 464.7L715.8 466.2L716.5 466.8L716.5 467.2L717.4 468.9L717.6 469.7L719.1 471.4L719.2 472.5L719.5 472.7L721.4 473.3L722.2 473.5L723.1 474.2L724.0 475.2L724.2 476.1L727.7 475.7L727.5 476.1L733.0 478.1L737.0 478.1L737.0 477.3L739.4 477.3L740.0 477.9L741.6 479.3L742.3 480.9L744.3 481.9L745.2 480.6L746.3 480.6L747.4 481.3L748.6 483.4L749.5 484.4L749.7 485.5L750.2 486.1L752.3 487.1L752.9 486.9L752.5 484.5L753.0 483.5L753.6 483.1L755.5 481.9L756.3 481.1L757.6 480.8L758.5 480.6L760.8 480.8L762.8 481.7L763.9 481.6L763.9 481.1L763.6 479.9L765.4 479.6L766.6 479.8L768.2 479.6L769.1 479.9L770.1 480.9L771.5 480.1L772.1 480.4L773.2 481.7L773.5 483.5L773.2 483.7L774.2 485.6L775.0 486.9L775.7 488.0L776.8 488.0L777.2 486.4L777.2 485.3L776.7 483.5L776.7 482.7L775.5 480.3L775.2 479.1L775.5 477.9L777.0 476.1L778.5 474.9L779.4 473.7L781.1 472.6L782.5 472.1L783.5 470.7L782.5 470.0L783.1 468.4L783.3 467.9L782.7 466.2L782.7 464.4L783.2 466.6L784.3 466.4L784.4 465.0L784.1 463.7L784.7 464.2L785.7 463.3L786.0 462.0L786.1 461.6L788.6 460.7L789.0 461.0L787.0 461.0L787.6 460.5L790.1 459.9L790.9 459.9L791.6 459.3L791.4 458.7L790.6 458.4L790.6 457.2L791.6 455.6L793.0 455.1L794.6 454.4L795.9 452.8L794.9 451.6L794.9 448.7L794.3 448.0L793.3 448.5L792.9 448.0L791.7 449.5L791.3 451.2L790.7 452.0L790.1 452.4L789.7 453.0L787.0 453.0L784.7 453.0L782.5 454.8L782.0 455.8L778.5 456.0L778.8 456.4L779.0 457.2L777.1 458.2L775.5 458.5L774.0 459.5L773.1 459.3L772.9 458.7L774.0 457.0L774.4 455.8L773.7 452.4L772.2 451.4L772.4 451.0L771.5 450.3L771.5 449.9L770.5 449.7L768.1 447.6L765.4 446.1L764.1 446.8L761.9 446.1L760.8 446.5L759.3 445.7L757.9 445.5L756.9 445.3L756.5 445.0L756.2 443.7L755.6 443.7L755.6 444.6L734.4 444.6Z" fill="#93c5d9"/>
<path d="M724.2 476.1L727.7 475.7L727.5 476.1L733.0 478.1L737.0 478.1L737.0 477.3L739.4 477.3L740.0 477.9L741.6 479.3L742.3 480.9L744.3 481.9L745.2 480.6L746.3 480.6L747.4 481.3L748.6 483.4L749.5 484.4L749.7 485.5L750.2 486.1L752.3 487.1L752.9 486.9L752.3 488.3L752.0 489.4L751.9 491.6L751.7 492.4L752.0 493.2L752.5 494.0L752.7 495.2L753.8 496.3L754.0 497.2L754.6 497.9L756.2 498.2L756.8 499.0L758.0 498.5L759.1 498.4L760.2 498.1L761.1 497.8L761.9 497.2L762.3 496.3L762.3 495.0L762.6 494.6L763.6 494.1L765.2 493.8L766.4 493.8L767.2 493.8L767.6 494.1L767.6 494.9L766.8 495.6L766.5 496.7L766.8 496.9L766.2 498.7L765.8 498.4L765.5 498.4L765.2 498.4L764.8 499.3L764.5 499.1L764.2 499.4L761.6 499.4L761.6 500.2L761.1 500.2L761.5 500.8L762.1 501.1L762.5 501.5L762.5 502.0L760.6 502.0L759.9 503.2L760.1 503.5L759.9 503.9L759.9 504.4L758.2 502.7L757.5 502.3L756.3 501.8L755.5 502.0L754.3 502.4L753.6 502.6L752.6 502.3L751.6 502.0L750.3 501.2L749.2 501.1L747.6 500.3L746.3 499.7L746.0 499.3L745.2 499.1L743.7 498.7L743.1 498.1L741.6 497.2L740.9 496.3L740.6 495.5L741.0 495.3L740.9 494.9L741.1 494.4L741.1 494.0L740.7 493.2L740.6 492.6L740.1 491.8L738.9 490.2L737.4 489.1L736.7 488.0L735.4 487.4L735.3 487.1L735.4 486.1L734.7 485.6L733.8 484.8L733.6 483.7L732.7 483.7L731.8 482.7L731.3 481.9L731.1 481.4L730.4 480.3L729.8 478.9L730.0 478.3L728.8 477.6L728.4 477.8L727.5 477.3L727.4 477.9L727.5 478.8L727.7 479.9L728.3 480.6L729.3 481.7L729.5 482.2L729.7 482.2L730.0 482.9L730.1 482.9L730.4 483.9L730.8 484.4L731.3 484.8L732.1 485.6L732.5 487.2L733.0 487.9L733.4 488.7L733.4 489.4L734.1 489.4L734.7 490.2L735.3 490.9L735.3 491.2L734.6 491.8L734.4 491.8L734.0 490.9L733.0 489.9L731.3 488.8L731.4 487.6L731.1 486.8L730.4 486.3L729.4 485.5L729.3 485.8L729.0 485.3L728.0 485.0L727.1 484.0L727.2 483.9L727.8 484.0L728.4 483.4L728.4 482.6L727.4 481.4L726.5 480.9L726.0 479.9L725.4 478.9L724.8 477.6L724.2 476.1Z" fill="#85b4c1"/>
<path d="M759.9 504.4L759.9 503.9L760.1 503.5L759.9 503.2L760.6 502.0L762.5 502.0L762.5 501.5L762.1 501.1L761.5 500.8L761.1 500.2L761.6 500.2L761.6 499.4L764.2 499.4L764.5 499.1L764.8 499.3L765.2 498.4L765.5 498.4L765.8 498.7L765.8 499.7L765.5 500.5L765.6 501.4L764.6 502.3L765.1 502.6L765.6 502.6L766.1 502.3L767.5 502.4L768.8 502.1L769.7 502.3L770.3 502.1L771.1 502.4L771.9 503.0L772.5 503.2L772.9 503.6L772.8 504.7L772.4 505.7L772.4 506.7L772.4 507.4L772.1 508.2L772.1 508.6L771.8 508.9L772.1 509.6L772.5 510.4L773.8 511.5L774.2 512.1L775.0 512.4L775.4 512.7L776.1 512.6L776.7 512.3L777.5 512.0L778.0 511.5L778.8 511.5L779.5 511.8L780.3 512.1L781.1 512.8L781.4 514.0L781.1 514.4L780.7 514.3L780.4 515.0L780.0 514.6L779.7 513.7L780.0 513.4L779.7 513.3L779.4 512.8L778.7 512.4L778.0 512.6L777.7 513.0L777.1 513.4L776.8 513.4L776.7 513.7L777.4 514.6L777.0 514.7L776.1 515.0L775.8 514.1L775.0 513.7L774.4 513.6L774.0 513.4L773.4 513.4L773.2 513.7L773.1 513.6L772.4 513.3L772.1 512.8L772.2 512.7L772.2 512.3L771.2 511.7L770.7 511.5L770.7 511.1L770.2 510.8L770.4 511.2L770.1 511.5L769.8 511.2L769.2 511.1L769.1 510.8L769.1 510.4L769.2 509.8L768.9 509.6L769.2 509.4L768.1 508.3L767.8 507.9L767.1 507.3L766.4 506.7L766.5 506.4L766.8 506.7L766.9 506.6L766.6 506.1L766.2 506.0L766.1 506.4L765.2 506.3L764.8 506.1L764.1 505.8L763.3 505.8L762.9 505.5L762.2 505.2L761.3 505.2L760.6 504.9L759.9 504.4Z" fill="#85b4c1"/>
<path d="M774.1 491.2L775.4 491.3L776.5 491.3L777.8 491.8L778.4 492.4L779.8 492.3L780.3 492.6L781.5 493.5L782.4 494.3L782.8 494.3L783.7 494.6L783.5 495.0L784.7 495.0L785.7 495.6L785.6 495.9L784.6 496.3L783.7 496.3L782.7 496.1L780.5 496.3L781.5 495.5L781.0 495.0L780.1 495.0L779.5 494.6L779.3 493.6L778.4 493.6L777.1 493.3L776.7 493.0L774.8 492.7L774.2 492.4L774.8 492.1L773.4 491.9L772.4 492.7L771.8 492.7L771.5 493.2L770.9 493.3L770.3 493.2L771.1 492.7L771.4 492.1L771.9 491.8L772.7 491.5L773.8 491.3L774.1 491.2ZM787.1 496.3L788.0 496.3L789.3 496.6L789.4 496.3L790.6 496.3L791.4 496.7L791.8 496.6L792.0 497.2L792.9 497.2L792.8 497.6L793.4 497.6L794.2 498.2L793.6 498.8L792.9 498.5L792.3 498.5L791.8 498.5L791.6 498.8L791.0 498.8L790.7 498.5L790.3 498.7L789.7 499.7L789.3 499.4L789.3 499.1L788.3 498.8L787.7 499.0L786.7 498.8L786.1 499.1L785.3 498.7L785.4 498.1L786.8 498.4L787.8 498.5L788.4 498.1L787.7 497.5L787.7 496.9L786.8 496.7L787.1 496.3ZM780.8 498.4L781.8 498.5L782.5 498.8L782.8 499.3L781.8 499.3L781.4 499.6L780.5 499.3L779.8 498.8L780.0 498.4L780.5 498.4ZM797.0 498.4L797.7 498.5L798.0 498.8L797.7 499.2L796.6 499.2L795.7 499.2L795.7 498.5L795.9 498.4ZM781.0 490.2L780.5 490.4L780.3 489.4L779.7 489.0L780.0 488.0L780.4 488.0L781.0 489.4ZM780.5 485.8L779.0 486.1L778.8 485.5L779.5 485.3L780.5 485.5ZM781.7 485.8L781.4 486.9L781.1 486.8L781.3 486.0L780.5 485.3L780.5 485.2L781.7 485.8ZM803.6 509.8L804.5 509.6L804.8 509.6L804.8 510.8L803.5 511.0L803.2 510.8L803.6 510.4Z" fill="#85b4c1"/>
<path d="M825.0 300.6L829.8 293.6L834.8 293.6L836.7 289.9L841.7 288.6L853.2 289.9L862.2 299.5L859.5 303.8L854.0 303.8L846.3 304.9L847.0 307.0L852.0 306.0L856.5 309.0L859.2 306.0L860.3 310.0L858.8 314.8L862.5 312.0L869.4 308.0L873.7 310.0L874.5 313.9L868.6 320.3L867.8 322.9L863.3 323.7L866.6 324.6L864.9 330.2L863.8 334.7L863.8 343.2L865.5 347.1L863.3 347.7L860.9 349.6L863.6 352.6L863.9 357.8L862.3 357.8L864.2 362.7L861.1 363.2L862.8 365.3L862.2 366.8L860.2 367.9L858.2 367.9L860.0 371.3L860.0 373.2L857.2 371.3L856.5 372.7L858.5 373.6L860.3 376.4L860.8 379.9L858.3 380.8L857.2 379.1L855.5 376.8L855.9 379.5L854.2 382.1L858.0 382.1L860.0 382.5L856.2 385.8L852.3 389.0L848.0 390.5L846.4 390.5L845.0 392.0L843.0 395.7L839.8 398.3L839.0 398.6L837.0 399.3L835.0 400.0L833.7 402.4L833.7 404.7L833.0 406.6L830.7 409.2L831.3 411.6L830.5 414.0L829.8 417.0L827.8 417.3L825.7 414.6L822.8 414.6L821.5 413.2L820.5 410.1L818.1 406.3L817.4 404.0L817.1 401.0L815.1 397.9L815.6 395.4L814.7 393.9L816.1 389.4L818.2 388.2L818.8 386.6L819.1 383.3L817.5 384.6L816.6 385.4L815.4 385.8L813.6 384.6L813.5 381.6L814.1 379.5L815.5 379.5L818.4 380.4L815.9 377.7L814.6 376.4L813.2 376.8L812.1 375.5L813.6 371.3L812.8 369.3L811.6 366.3L809.9 360.6L808.0 358.4L808.0 356.1L804.2 352.6L801.2 352.0L797.3 352.6L793.9 352.6L792.1 350.8L789.7 347.1L793.4 345.1L796.3 344.5L790.3 343.2L787.0 340.4L787.1 337.6L792.6 334.0L797.9 330.2L798.4 327.0L794.6 324.6L795.7 321.2L800.7 314.8L802.9 313.9L802.2 309.0L805.6 307.0L810.1 304.9L814.5 304.9L816.1 308.0L819.8 302.8L823.2 306.0L825.2 307.0L828.2 310.0L824.8 304.9L825.0 300.6Z" fill="#85b4c1"/>
<path d="M871.2 396.5L870.9 398.9L872.5 401.4L870.7 403.7L866.5 406.0L865.2 406.6L863.3 406.3L859.3 405.0L860.8 403.7L857.6 402.0L860.2 401.4L860.2 400.3L857.2 399.6L858.0 397.2L860.3 396.8L862.5 399.3L864.6 397.2L866.5 398.2L868.8 396.5L871.2 396.5Z" fill="#85b4c1"/>
<path d="M781.1 512.8L782.0 513.0L783.0 512.0L783.5 511.8L783.8 510.1L784.7 509.4L785.6 509.4L786.8 509.2L788.0 508.5L788.6 508.0L789.1 507.4L789.7 507.4L790.1 507.9L789.9 508.3L789.7 508.8L789.0 508.9L789.4 509.5L789.4 510.4L788.7 511.1L789.3 512.3L789.9 512.3L790.3 511.1L789.7 510.7L789.7 509.5L791.4 508.9L791.3 508.3L791.9 507.7L792.3 508.8L793.3 508.9L794.3 509.6L794.3 510.1L795.6 510.2L797.2 510.1L797.9 510.7L799.0 510.8L799.9 510.4L799.9 510.1L803.3 509.9L802.2 510.4L802.6 511.1L803.7 511.1L804.9 511.8L805.0 513.0L805.8 513.0L806.3 513.3L807.3 513.9L808.2 514.9L808.2 515.6L808.8 515.6L809.6 516.3L810.2 516.8L811.9 517.0L813.2 516.7L814.7 517.0L816.2 517.6L817.8 518.8L817.9 519.3L818.5 519.3L818.8 520.0L819.7 522.6L820.4 522.9L820.4 523.8L819.4 525.1L819.8 525.5L822.4 525.6L822.4 527.1L823.5 526.2L825.2 526.6L827.7 527.6L828.4 528.4L828.1 529.2L829.8 528.8L832.5 529.5L834.7 529.5L836.8 530.7L838.7 532.2L839.7 532.7L841.0 532.7L841.6 533.2L842.0 535.0L842.3 535.8L841.7 538.3L841.0 539.2L839.0 541.2L838.0 543.0L837.0 544.1L836.6 544.3L836.2 545.3L836.3 548.1L835.8 550.4L835.3 552.0L835.0 554.0L833.5 556.0L833.4 557.5L832.1 558.3L831.8 559.2L830.3 559.2L828.1 559.8L827.0 560.5L825.4 560.9L823.8 562.2L822.5 563.8L822.4 564.9L822.5 565.9L822.2 567.5L821.9 568.3L820.9 569.1L819.4 572.1L818.1 573.4L817.1 574.1L816.5 575.8L815.5 576.9L814.9 577.9L813.3 578.9L812.2 578.6L811.5 578.8L810.2 577.9L809.2 578.1L808.3 577.0L808.2 577.9L810.1 579.5L809.8 580.7L810.8 581.4L810.6 582.3L809.3 584.7L807.2 585.6L804.3 585.9L802.7 585.8L803.0 586.9L802.7 588.3L803.0 589.3L802.2 589.9L800.6 590.2L799.3 589.5L798.7 590.0L798.9 592.0L799.9 592.5L800.6 591.8L801.0 592.9L799.7 593.5L798.6 594.7L798.4 596.7L798.0 597.7L796.7 597.7L795.6 598.9L795.2 600.4L796.6 601.8L798.0 602.2L797.5 604.2L795.7 605.5L794.9 608.1L793.6 609.0L793.0 609.9L793.4 612.4L794.4 613.6L793.7 613.6L792.4 613.6L791.9 614.0L790.6 615.0L790.3 617.1L789.7 617.4L788.0 616.4L786.4 614.7L784.7 613.6L784.1 611.9L784.6 610.6L783.8 609.2L783.7 605.5L784.3 603.3L785.8 601.6L783.7 601.0L785.0 599.3L785.4 595.9L787.1 596.7L787.8 592.5L786.8 592.0L786.4 594.5L785.6 594.1L786.0 591.4L786.4 587.8L787.1 586.7L786.7 584.8L786.6 582.8L787.1 582.7L788.0 579.8L789.0 577.0L789.7 574.5L789.3 571.9L789.7 570.6L789.6 568.6L790.4 566.5L790.7 563.5L791.1 560.2L791.6 556.8L791.4 554.3L791.1 552.0L789.7 551.3L789.6 550.7L786.8 549.2L784.3 547.5L783.1 546.5L782.5 545.3L782.7 544.9L781.5 543.0L780.1 540.3L778.8 537.4L778.2 536.7L777.7 535.7L776.7 534.7L775.7 534.1L776.1 533.5L775.4 532.1L775.8 531.1L777.0 530.2L777.7 529.2L777.4 528.5L776.8 529.2L776.0 528.5L776.2 528.2L776.1 526.9L776.5 526.6L776.8 525.8L777.4 524.8L777.2 524.2L778.1 523.9L779.0 523.3L778.8 522.9L779.4 522.8L779.3 522.1L779.7 521.6L780.4 521.5L781.0 520.6L781.5 519.9L781.0 519.5L781.3 518.6L781.0 517.3L781.3 517.0L781.0 515.7L780.4 515.0L780.7 514.3L781.1 514.4L781.4 514.0L781.1 512.8ZM793.7 614.3L792.4 614.0L791.3 615.0L790.9 616.7L791.3 617.9L790.3 617.9L788.3 616.9L787.0 617.5L785.0 614.7L786.3 615.3L788.3 616.9L790.1 617.8L790.9 616.7L791.3 615.0L792.7 614.0ZM793.7 614.3L794.2 615.5L794.9 617.3L796.7 618.7L798.7 619.3L798.2 620.6L796.7 620.7L796.1 619.8L795.2 619.8L794.4 621.6L793.7 621.6L792.9 621.4L791.8 620.6L790.3 620.2L788.4 618.9L787.0 617.5L785.0 614.7L786.3 615.3L788.3 616.9L790.1 617.8L790.9 616.7L791.3 615.0L792.7 614.0ZM804.3 612.5L806.0 611.1L807.3 611.7L808.1 610.8L809.3 611.8L808.8 612.6L806.9 613.3L806.3 612.5L805.0 613.6L804.3 612.5ZM786.1 591.6L786.7 592.2L786.6 594.3L785.4 594.3L785.7 592.7Z" fill="#85b4c1"/>
<path d="M817.9 519.3L818.5 519.3L818.8 520.0L819.7 522.6L820.4 522.9L820.4 523.8L819.4 525.1L819.8 525.5L822.4 525.6L822.4 527.1L823.5 526.2L825.2 526.6L827.7 527.6L828.4 528.4L828.1 529.2L829.8 528.8L832.5 529.5L834.7 529.5L836.8 530.7L838.7 532.2L839.7 532.7L841.0 532.7L841.6 533.2L842.0 535.0L842.3 535.8L841.7 538.3L841.0 539.2L839.0 541.2L838.0 543.0L837.0 544.1L836.6 544.3L836.2 545.3L836.3 548.1L835.8 550.4L835.3 552.0L835.0 554.0L833.5 556.0L833.4 557.5L832.1 558.3L831.8 559.2L830.3 559.2L828.1 559.8L827.0 560.5L825.4 560.9L823.8 562.2L822.5 563.8L822.4 564.9L822.5 565.9L822.2 567.5L821.9 568.3L820.9 569.1L819.4 572.1L818.1 573.4L817.1 574.1L816.5 575.8L815.5 576.9L815.1 575.8L815.8 575.0L814.9 573.8L813.8 572.9L812.3 571.9L811.8 571.9L810.4 570.6L809.5 570.8L811.3 568.6L812.9 567.0L813.9 566.4L815.2 565.4L815.2 564.1L814.5 563.2L813.8 563.5L814.1 562.7L814.2 561.7L814.2 560.8L813.6 560.5L813.2 560.8L812.6 560.7L812.5 560.2L812.3 558.8L812.1 558.3L811.1 557.8L810.5 558.1L809.0 557.8L809.0 555.7L808.6 554.9L809.0 554.6L809.3 553.0L809.6 551.9L809.3 551.0L808.5 550.5L808.3 549.9L808.6 549.0L805.8 549.0L805.3 547.2L805.6 547.2L805.6 546.5L805.3 546.2L805.3 545.3L804.5 544.9L803.6 544.9L803.0 544.4L802.0 544.1L801.5 543.6L799.9 543.4L798.3 542.1L798.4 541.1L798.3 540.5L798.4 539.5L796.6 539.6L795.7 540.2L794.6 540.8L794.2 541.2L793.4 541.2L792.4 541.1L791.6 541.4L791.0 541.2L791.0 539.0L789.9 539.9L788.6 539.9L788.0 539.0L787.1 539.0L787.4 538.3L786.6 537.4L786.0 536.1L786.4 535.8L786.4 535.3L787.3 534.8L787.1 534.1L787.5 533.5L787.6 533.0L789.3 532.0L790.3 531.7L790.6 531.4L791.9 531.5L792.6 527.6L792.6 526.9L792.3 526.1L791.7 525.6L791.7 524.6L792.4 524.4L792.7 524.5L792.9 523.9L792.0 523.8L792.0 522.9L794.7 522.9L795.3 522.5L795.6 522.9L795.9 523.8L796.2 523.5L797.0 524.4L798.2 524.2L798.3 523.8L799.5 523.5L800.0 523.2L800.2 522.6L801.2 522.2L801.2 521.9L799.9 521.8L799.7 520.9L799.7 519.9L799.2 519.5L799.5 519.5L800.5 519.6L801.6 519.9L802.0 519.6L803.0 519.3L804.7 518.9L805.2 518.3L805.0 517.9L805.8 517.9L806.1 518.2L805.9 518.8L806.3 519.0L806.8 519.7L806.3 520.2L806.1 521.3L806.5 522.2L806.6 522.8L807.5 523.5L808.2 523.5L808.3 523.2L808.8 523.2L809.3 522.9L809.9 522.6L810.6 522.6L811.1 522.6L811.8 522.8L811.9 522.5L811.6 522.2L811.8 521.8L812.3 521.9L813.1 521.8L813.9 522.1L814.5 522.3L814.9 521.9L815.2 522.1L816.2 522.3L816.6 521.8L817.2 520.8L817.9 519.3Z" fill="#e0e1ab"/>
<path d="M791.1 552.0L789.7 551.3L789.6 550.7L786.8 549.2L784.3 547.5L783.1 546.5L782.5 545.3L782.7 544.9L781.5 543.0L780.1 540.3L778.8 537.4L778.2 536.7L777.7 535.7L776.7 534.7L775.7 534.1L776.1 533.5L775.4 532.1L775.8 531.1L777.0 530.2L777.1 530.8L776.7 531.2L776.8 531.7L777.4 531.5L778.0 531.8L778.5 532.5L779.4 531.8L779.5 530.9L780.5 529.7L782.3 529.1L783.8 527.6L784.3 526.6L784.0 525.6L784.4 525.5L785.4 526.1L785.8 526.8L786.4 527.2L787.3 528.6L788.4 528.8L789.1 528.5L789.7 528.6L790.6 528.6L791.7 529.2L790.7 530.7L791.1 530.8L791.9 531.5L790.6 531.4L790.3 531.7L789.3 532.0L787.6 533.0L787.5 533.5L787.1 534.1L787.3 534.8L786.4 535.3L786.4 535.8L786.0 536.1L786.6 537.4L787.4 538.3L787.1 539.0L788.0 539.0L788.6 539.9L789.9 539.9L791.0 539.0L791.0 541.2L791.6 541.4L792.4 541.1L793.6 543.6L793.3 544.0L793.3 545.0L793.2 546.4L792.7 547.0L792.9 547.5L792.6 548.1L793.2 549.3L792.3 551.0L791.9 551.7L791.1 552.0Z" fill="#fbe896"/>
<path d="M808.3 577.0L808.2 577.9L810.1 579.5L809.8 580.7L810.8 581.4L810.6 582.3L809.3 584.7L807.2 585.6L804.3 585.9L802.7 585.8L803.0 586.9L802.7 588.3L803.0 589.3L802.2 589.9L800.6 590.2L799.3 589.5L798.7 590.0L798.9 592.0L799.9 592.5L800.6 591.8L801.0 592.9L799.7 593.5L798.6 594.7L798.4 596.7L798.0 597.7L796.7 597.7L795.6 598.9L795.2 600.4L796.6 601.8L798.0 602.2L797.5 604.2L795.7 605.5L794.9 608.1L793.6 609.0L793.0 609.9L793.4 612.4L794.4 613.6L793.7 613.6L792.4 613.1L789.0 612.9L788.4 611.5L788.4 609.9L787.4 609.9L787.0 609.2L786.8 606.8L788.0 605.9L788.4 604.4L788.3 603.3L789.0 601.6L789.4 598.9L789.3 597.6L790.0 597.3L789.9 596.5L789.1 596.1L789.6 595.3L789.0 594.5L788.7 592.4L789.3 592.0L789.0 589.5L789.3 587.6L789.7 585.9L790.6 585.4L790.1 583.6L790.1 581.9L791.1 580.7L791.1 579.3L792.0 577.5L792.0 576.0L791.6 575.7L791.0 572.8L791.9 570.9L791.7 569.5L792.1 568.0L793.1 566.4L794.2 565.4L793.7 564.7L794.0 564.3L794.0 561.6L795.6 560.8L795.9 559.2L794.9 559.1L795.9 558.8L797.0 557.4L798.9 557.8L799.7 558.9L800.3 557.7L802.0 557.7L802.2 558.0L804.9 560.6L806.0 560.8L807.8 562.0L809.2 562.7L809.5 563.3L808.0 565.7L809.5 566.2L811.1 566.4L812.2 566.2L813.5 564.9L813.8 563.5L814.5 563.2L815.2 564.1L815.2 565.4L813.9 566.4L812.9 567.0L811.3 568.6L809.5 570.8L809.0 572.1L808.8 573.8L808.8 575.5L808.5 576.0L808.3 577.0ZM793.7 614.3L794.2 615.5L794.9 617.3L796.7 618.7L798.7 619.3L798.2 620.6L796.7 620.7L796.1 619.8L795.2 619.8L793.7 619.8Z" fill="#b5d3c6"/>
<path d="M814.7 517.0L816.2 517.6L817.8 518.8L817.9 519.3L817.2 520.8L816.6 521.8L816.2 522.3L815.2 522.1L814.9 521.9L814.5 522.3L813.9 522.1L814.2 521.5L814.3 520.8L814.6 520.2L814.1 519.3L813.9 518.3L814.7 517.0Z" fill="#e0e1ab"/>
<path d="M789.9 508.3L788.8 508.6L788.6 509.4L788.0 509.8L787.6 510.2L787.4 511.4L787.0 512.1L787.7 512.3L787.8 513.0L788.3 513.3L788.3 513.9L788.1 514.4L788.3 514.7L788.6 514.9L788.9 515.3L790.7 515.2L791.6 515.4L792.6 516.6L793.2 516.5L794.2 516.5L795.0 516.3L795.6 516.6L795.3 517.3L795.0 517.9L794.9 518.9L795.2 519.9L795.6 520.3L795.6 520.6L794.9 521.3L795.4 521.6L795.7 522.1L796.2 523.5" fill="none" stroke="#ffffff" stroke-opacity=".5" stroke-width=".55"/>
<path d="M805.0 517.9L804.0 516.8L804.5 516.5L804.3 515.7L805.3 515.4L805.6 515.3L805.2 514.7L805.2 514.1L806.3 513.3" fill="none" stroke="#ffffff" stroke-opacity=".5" stroke-width=".55"/>
<path d="M811.1 522.6L810.3 521.8L810.1 521.3L809.9 520.6L809.5 520.6L808.9 519.5L809.0 518.8L809.0 518.5L809.9 518.0L810.2 516.8" fill="none" stroke="#ffffff" stroke-opacity=".5" stroke-width=".55"/>
<path d="M784.0 525.6L783.4 525.2L782.7 524.8L782.3 524.9L781.1 524.8L780.7 524.2L780.4 524.2L779.0 523.3" fill="none" stroke="#ffffff" stroke-opacity=".5" stroke-width=".55"/>
<path d="M794.9 559.1L794.3 556.9L793.4 555.2L794.0 553.7L793.2 553.1L793.0 552.0L792.3 551.0" fill="none" stroke="#ffffff" stroke-opacity=".5" stroke-width=".55"/>
<path d="M808.6 554.9L808.6 554.5L807.3 553.7L806.0 553.5L803.5 554.0L802.7 555.4L802.7 556.3L802.2 558.0" fill="none" stroke="#ffffff" stroke-opacity=".5" stroke-width=".55"/>
<path d="M792.3 551.0L791.9 551.7L791.1 552.0" fill="none" stroke="#ffffff" stroke-opacity=".5" stroke-width=".55"/>
<path d="M809.5 570.8L810.4 570.6L811.8 571.9L812.3 571.9L813.8 572.9L814.9 573.8L815.8 575.0L815.1 575.8L815.5 576.9" fill="none" stroke="#ffffff" stroke-opacity=".5" stroke-width=".55"/>
<path d="M936.3 384.6L936.6 381.6L935.0 382.1L932.4 377.7L929.8 378.7L927.1 378.6L924.9 382.1L922.7 381.6L919.5 383.7L915.5 388.6L913.2 391.7L909.8 398.6L907.0 403.4L904.2 406.6L900.4 409.5L899.2 411.4L899.6 418.1L900.2 421.2L902.0 422.5L904.0 422.0L906.9 418.7L907.8 420.4L908.5 421.7L908.9 424.4L910.0 427.3L910.5 429.6L912.2 429.6L913.1 427.6L914.8 427.8L915.5 425.5L916.1 420.9L917.6 420.2L918.9 417.0L917.5 415.5L916.5 413.5L917.5 409.2L920.4 406.3L922.7 403.7L922.4 401.7L923.8 399.3L926.2 398.2L928.2 401.4L927.4 402.0L924.1 405.7L922.8 407.6L922.2 409.5L922.8 412.3L922.5 415.2L923.9 416.1L924.8 417.8L929.7 416.1L932.3 415.8L933.7 417.3L935.0 417.5L932.1 418.7L930.5 419.0L929.1 418.4L927.2 418.7L925.4 419.5L925.5 421.2L926.5 422.0L927.0 421.7L926.8 423.4L926.5 425.5L925.4 425.5L924.2 423.4L922.9 424.4L922.2 426.0L922.2 428.1L922.5 430.1L920.5 430.9L920.2 432.1L918.8 432.1L918.6 431.4L917.2 430.9L915.5 431.9L913.2 433.0L912.2 433.6L911.5 432.8L909.9 431.9L909.1 432.6L907.6 433.1L907.6 432.1L906.2 430.7L906.3 429.4L906.9 426.5L907.6 426.8L907.3 425.0L907.2 423.6L906.0 424.4L904.2 425.2L903.6 426.8L903.9 428.6L903.6 429.4L904.2 430.7L904.3 432.1L904.6 433.1L903.6 434.3L902.2 433.8L901.9 434.3L900.7 434.3L898.7 435.2L897.7 439.5L896.7 439.5L895.6 439.9L894.3 440.4L893.9 442.2L890.6 443.9L889.3 442.8L889.7 445.5L887.3 444.8L885.4 445.3L885.5 446.9L887.8 447.6L888.8 448.7L890.3 451.0L890.0 455.0L889.3 456.2L887.0 456.0L885.8 456.2L884.3 455.8L880.6 455.6L878.5 457.0L879.4 459.1L879.4 460.5L879.1 462.4L878.5 463.8L878.4 465.1L878.7 465.7L879.4 465.9L879.2 468.2L880.7 468.6L881.3 468.0L882.7 468.4L883.1 469.3L883.5 470.0L884.3 470.2L885.7 468.8L889.0 468.8L890.0 467.5L891.0 467.1L891.3 465.9L892.1 465.1L891.6 464.0L892.1 462.5L893.0 461.4L893.1 460.8L895.0 460.5L896.3 459.1L896.4 456.8L898.6 456.2L901.3 456.8L902.6 455.6L903.2 455.4L904.7 454.2L906.6 455.2L907.0 457.2L909.3 459.5L910.5 460.4L911.5 460.5L912.2 461.2L913.1 461.6L914.1 462.6L914.5 463.7L915.1 464.7L914.5 466.1L914.8 466.6L915.1 466.4L915.8 465.0L916.4 464.8L916.6 463.8L915.5 463.1L916.2 462.0L917.4 462.2L918.4 463.1L918.5 462.4L917.1 461.0L916.1 460.5L914.8 459.9L915.2 459.5L913.6 459.0L912.1 457.4L911.3 455.8L910.0 454.8L909.6 453.8L909.8 452.2L910.8 451.6L911.9 451.8L911.6 452.8L911.9 453.4L912.5 452.6L913.3 452.8L913.8 454.6L914.9 456.0L916.2 456.6L917.1 457.3L918.5 458.2L919.5 459.0L919.9 459.5L919.8 460.1L919.6 461.4L919.8 462.3L920.6 462.9L920.9 463.5L921.7 464.6L922.2 465.9L922.5 467.1L923.1 468.6L924.2 469.3L925.2 469.3L924.7 467.7L925.5 467.5L925.1 466.6L926.4 467.0L926.4 466.1L925.7 465.5L924.9 464.6L925.4 464.2L924.7 463.3L924.4 462.2L924.7 461.8L925.4 462.8L926.2 462.8L927.0 462.5L925.9 461.4L927.7 461.0L928.4 461.1L929.3 461.2L929.8 462.4L929.5 463.7L930.4 464.6L929.7 466.1L930.7 467.1L931.5 468.8L933.1 468.8L934.5 469.8L935.5 469.5L935.8 468.8L937.4 468.9L938.6 469.8L940.7 469.7L941.7 468.6L942.9 468.9L943.9 468.9L943.8 470.4L943.4 471.1L943.5 472.5L942.9 473.7L942.3 475.1L942.1 475.6L941.8 476.8L941.4 477.6L941.1 478.3L942.0 481.1L942.1 481.3L941.9 482.0L941.6 483.4L942.3 483.4L943.0 484.5L943.9 485.8L944.4 487.1L944.9 487.4L945.3 488.5L945.7 489.4L946.4 489.8L947.2 490.4L947.9 492.1L948.0 494.1L949.0 495.6L950.6 496.9L951.0 498.1L951.8 499.4L952.6 500.5L953.1 500.9L953.3 502.3L953.2 502.6L953.3 503.2L953.0 503.3L953.5 503.9L953.7 505.0L954.0 505.4L953.9 506.3L954.3 507.2L955.3 507.2L955.7 507.0L956.6 506.6L957.3 506.1L958.9 506.0L959.9 505.7L961.0 505.2L963.1 504.1L965.3 503.3L966.8 502.7L968.1 501.2L969.6 500.6L971.2 500.3L971.2 499.7L972.7 499.3L972.9 499.0L973.1 498.2L973.9 497.8L974.7 497.8L974.8 497.5L974.7 495.8L975.1 495.3L975.8 495.5L976.4 494.4L976.9 494.0L977.7 492.6L977.7 492.3L976.8 491.5L976.1 490.5L975.2 490.4L974.2 490.1L973.4 489.6L972.8 488.5L972.6 487.2L972.8 486.1L972.3 486.7L971.4 487.7L970.4 488.7L969.4 489.8L967.4 489.6L966.2 489.9L965.9 489.6L965.9 489.0L965.9 488.0L965.9 487.1L965.5 486.6L964.6 487.6L964.8 488.7L964.5 487.9L963.9 487.4L963.8 485.6L962.9 485.0L961.9 484.0L961.3 482.6L960.9 481.4L960.7 480.3L961.6 480.4L963.1 480.3L963.8 480.0L964.8 482.2L965.8 483.7L967.2 484.2L968.6 485.5L970.4 486.0L971.8 485.2L972.9 485.0L973.6 485.2L974.2 487.2L975.8 487.4L977.4 487.7L980.1 488.2L982.1 488.0L984.4 488.0L987.1 487.7L988.1 488.8L988.6 490.1L989.7 490.4L991.3 491.8L991.7 492.3L991.1 492.9L993.0 494.7L994.0 494.9L996.0 494.0L996.3 495.5L996.3 497.3L996.7 499.3L997.3 502.1L998.6 504.2L998.9 505.1L999.3 507.0L1000.4 509.1L1001.0 510.5L1001.7 512.6L1003.0 513.9L1003.6 513.5L1004.2 512.6L1005.5 512.1L1005.0 511.6L1005.6 510.5L1006.5 510.4L1006.4 507.9L1007.0 506.6L1006.6 503.5L1007.0 502.3L1009.0 501.7L1009.8 501.2L1009.8 500.6L1011.2 499.6L1012.2 498.7L1013.9 496.9L1015.9 495.9L1016.6 493.8L1018.4 493.5L1019.4 493.5L1019.5 492.9L1020.1 493.1L1020.5 493.2L1021.4 493.3L1021.8 492.4L1022.9 491.8L1023.5 492.7L1023.8 493.5L1023.9 494.3L1024.4 495.0L1025.4 496.3L1026.2 496.6L1025.9 497.0L1027.1 498.8L1027.4 500.2L1026.9 502.1L1027.4 502.4L1027.8 502.4L1028.7 502.6L1030.2 501.5L1031.2 500.8L1031.8 502.0L1032.1 503.9L1032.5 505.7L1033.1 506.4L1033.0 508.0L1033.5 508.9L1033.3 511.1L1032.7 512.4L1032.8 513.3L1032.8 514.1L1033.8 514.0L1034.5 514.9L1035.4 516.0L1035.7 516.7L1035.5 517.8L1036.1 518.5L1036.3 519.8L1037.1 520.6L1037.3 521.3L1039.0 522.5L1040.3 523.6L1041.3 523.5L1041.3 523.1L1040.8 521.8L1040.1 520.5L1040.1 519.3L1040.0 518.3L1039.5 517.5L1038.7 516.6L1038.3 516.5L1037.5 515.7L1036.7 515.5L1036.0 514.7L1035.7 513.4L1035.1 512.1L1034.1 512.1L1034.1 511.0L1034.5 509.7L1034.7 508.2L1035.3 507.6L1035.4 506.0L1036.7 506.0L1036.4 507.2L1037.7 507.2L1039.0 507.7L1039.7 509.3L1040.3 510.1L1041.4 510.2L1042.6 511.1L1042.1 512.1L1042.5 513.0L1044.4 511.7L1045.6 510.4L1047.3 509.5L1048.4 508.5L1048.6 506.0L1048.0 503.2L1047.1 502.0L1045.9 501.1L1044.4 499.1L1043.4 497.5L1043.7 496.5L1044.9 495.0L1046.8 493.7L1047.4 493.5L1049.4 494.0L1049.0 494.6L1049.4 495.6L1050.2 495.6L1050.7 494.0L1052.2 493.7L1054.2 493.0L1055.0 492.2L1055.5 492.7L1056.4 492.0L1058.0 491.8L1060.0 490.5L1062.0 489.1L1063.3 487.2L1063.3 486.4L1064.5 485.1L1065.5 483.4L1066.3 483.2L1066.6 481.9L1065.8 479.1L1066.6 478.7L1066.6 477.4L1065.6 476.1L1064.8 474.5L1064.2 472.9L1062.7 471.9L1063.4 470.7L1064.8 469.8L1065.5 468.9L1067.5 468.4L1067.3 467.4L1066.3 467.3L1065.1 466.7L1063.5 467.9L1062.3 467.4L1062.3 466.6L1061.1 466.3L1060.3 465.1L1061.1 464.2L1062.5 464.1L1063.3 462.9L1065.0 461.6L1066.2 461.0L1067.0 462.0L1065.9 463.2L1066.2 463.8L1065.4 464.8L1066.9 464.3L1068.0 463.4L1070.0 462.9L1070.6 463.3L1071.5 463.6L1071.2 464.9L1071.1 465.4L1070.6 466.2L1071.4 466.7L1072.8 466.9L1073.7 468.4L1072.6 468.8L1073.2 470.5L1073.0 471.9L1073.2 472.8L1074.5 472.6L1075.7 471.9L1076.9 471.6L1077.5 470.7L1077.5 468.6L1077.1 467.5L1075.9 465.3L1075.1 464.5L1074.5 464.2L1074.7 463.2L1075.3 462.7L1076.2 462.4L1077.1 461.5L1077.8 461.0L1077.8 459.7L1078.2 459.1L1078.8 458.4L1079.4 458.5L1079.5 457.9L1081.5 456.4L1083.2 457.4L1086.1 455.0L1090.0 450.3L1092.6 445.8L1093.3 442.3L1093.4 439.7L1094.6 437.4L1094.5 435.3L1092.4 432.6L1090.8 432.5L1089.9 433.7L1088.5 433.1L1087.8 431.6L1085.5 431.3L1091.1 425.2L1093.3 423.4L1095.7 420.0L1100.4 419.1L1104.7 419.6L1106.6 418.2L1108.7 420.7L1108.7 418.7L1110.9 420.4L1112.9 417.9L1114.1 419.7L1116.5 413.2L1120.2 412.0L1121.4 415.7L1125.0 412.4L1125.9 409.9L1127.7 409.6L1126.5 413.9L1123.9 416.3L1121.4 419.2L1118.9 422.7L1116.6 423.3L1116.6 424.5L1115.4 426.1L1114.6 429.6L1115.3 435.0L1116.1 438.5L1116.6 440.1L1118.6 435.6L1121.2 435.0L1121.8 432.3L1124.2 431.0L1123.6 429.9L1124.2 427.8L1125.6 427.7L1125.8 423.9L1124.1 423.3L1124.1 422.2L1125.8 419.5L1126.2 417.6L1128.2 418.1L1130.2 417.9L1136.0 417.6L1136.5 416.4L1138.6 414.5L1140.8 412.4L1142.1 412.0L1146.1 409.8L1148.7 410.4L1149.1 409.6L1148.3 407.4L1147.4 404.8L1146.1 403.0L1148.0 403.4L1149.9 401.8L1149.9 387.2L1147.9 385.4L1143.7 383.4L1140.7 383.7L1136.3 382.5L1135.5 384.4L1136.7 387.0L1135.0 388.2L1132.4 384.6L1129.7 385.1L1127.0 384.3L1124.5 384.4L1122.6 385.2L1120.8 384.1L1120.9 381.0L1118.3 379.2L1115.5 378.6L1111.1 379.3L1107.4 375.9L1106.2 373.2L1093.2 370.1L1091.3 372.2L1092.4 376.4L1089.0 377.1L1086.2 375.7L1083.8 376.9L1081.5 374.8L1080.1 379.5L1077.8 377.8L1076.0 374.2L1076.9 372.2L1073.9 366.5L1071.6 366.5L1068.6 365.6L1068.5 369.5L1062.5 368.7L1062.2 366.4L1057.6 365.6L1055.3 366.4L1054.6 367.7L1053.9 364.4L1052.6 365.4L1049.8 361.8L1048.7 363.3L1050.5 364.1L1053.6 358.8L1055.2 357.1L1055.1 354.1L1051.0 349.0L1046.7 349.0L1043.9 344.5L1041.6 342.5L1036.4 350.8L1033.7 350.8L1029.4 352.6L1025.5 352.9L1019.8 355.5L1015.2 361.6L1016.9 364.3L1016.3 364.8L1014.9 365.3L1007.3 366.1L1007.5 371.3L1009.8 378.2L1003.9 377.3L1001.4 378.0L1000.7 374.7L1003.2 372.8L999.7 370.1L999.0 370.2L999.3 373.6L996.7 376.8L998.6 380.4L997.4 384.6L997.8 386.7L999.4 391.3L998.7 396.1L996.0 397.5L994.1 397.2L995.7 395.0L996.3 392.8L997.6 389.4L996.0 387.0L995.9 378.2L994.9 376.8L996.3 373.2L992.1 369.1L990.1 374.4L987.6 378.5L990.1 390.5L985.0 386.2L978.8 383.5L978.0 389.8L974.1 389.0L968.9 387.6L970.1 390.5L968.6 392.8L963.9 390.9L959.0 392.0L958.3 389.9L954.2 388.7L955.3 391.1L954.6 393.4L955.7 395.5L955.0 398.0L953.6 396.8L949.3 397.2L949.7 400.3L947.0 405.0L944.3 402.4L942.0 403.7L941.9 398.6L939.6 396.1L940.6 395.5L947.0 398.2L949.3 397.3L950.9 393.0L949.7 391.2L944.3 386.8L940.4 385.8L938.0 383.3L936.3 384.6Z" fill="#85b4c1"/>
<path d="M883.5 470.4L884.5 470.4L885.4 471.2L886.8 471.1L888.3 471.4L888.8 471.4L890.3 470.5L891.9 470.2L892.7 469.5L894.1 468.9L896.6 468.6L898.9 468.4L899.6 468.8L901.0 468.0L902.5 468.0L903.0 468.4L904.0 468.4L905.6 467.7L906.6 467.9L906.6 468.8L907.8 468.0L907.9 468.4L907.2 469.3L907.2 470.2L907.6 470.5L907.5 472.1L906.5 473.0L906.8 473.9L907.6 473.9L907.9 474.7L908.5 475.1L910.2 475.6L910.8 475.4L911.9 475.7L913.8 476.4L914.5 477.9L915.8 478.3L917.8 478.9L919.4 479.8L920.1 479.4L920.8 478.6L920.4 477.3L920.8 476.6L921.9 475.7L922.8 475.6L924.8 475.9L925.2 476.6L925.8 476.6L926.2 476.9L927.7 477.1L928.1 477.6L930.0 477.6L931.4 478.1L932.8 478.6L933.4 478.8L934.5 478.3L935.1 477.8L936.4 477.6L937.4 477.9L937.8 478.8L938.1 478.1L939.3 478.6L940.4 478.7L941.1 478.3L942.0 481.1L941.6 481.7L941.3 483.1L941.0 483.9L940.6 484.2L940.1 483.5L939.4 482.9L938.4 480.4L938.3 480.6L938.8 482.4L939.7 484.0L940.8 486.6L941.4 487.4L941.9 488.3L943.1 490.1L942.9 490.2L942.9 491.3L944.6 492.7L944.9 493.0L945.3 494.6L945.0 494.9L945.1 496.4L945.7 498.2L947.0 499.1L947.9 500.9L948.3 502.3L949.3 503.6L951.0 504.4L952.6 506.1L953.0 506.6L953.7 507.0L954.0 507.4L954.0 508.1L953.2 508.5L953.7 508.8L954.3 509.1L955.2 510.4L955.9 510.4L957.3 509.9L958.8 509.8L960.0 509.4L960.8 509.2L961.3 508.9L962.1 508.9L962.6 508.9L964.1 508.5L964.6 508.0L965.2 508.0L965.2 508.5L965.1 510.1L964.8 510.5L964.5 512.1L963.8 513.7L962.9 515.6L961.6 517.8L960.3 519.3L958.8 521.2L957.3 522.5L955.2 523.8L953.7 524.9L952.2 526.6L951.9 527.4L951.6 527.8L950.6 528.4L950.2 528.9L949.7 529.1L949.4 530.1L949.0 530.7L948.7 531.5L948.2 532.1L947.4 533.8L947.6 534.7L948.4 535.1L948.6 535.6L948.2 536.4L948.3 536.9L948.2 537.6L948.6 538.4L949.2 539.9L949.7 540.2L950.0 540.9L949.9 542.4L950.2 543.6L950.2 545.9L950.4 546.6L950.0 547.7L949.4 548.7L948.6 549.6L947.2 550.2L945.6 551.0L944.0 552.6L943.4 552.8L942.4 554.0L941.9 554.3L941.7 555.4L942.4 556.6L942.7 557.4L942.7 557.8L943.0 557.8L942.9 559.4L942.7 560.0L943.0 560.3L942.9 560.9L942.1 561.6L941.0 562.0L939.3 563.0L938.7 563.5L938.8 564.1L939.1 564.3L939.0 565.1L938.7 566.4L938.6 567.7L938.1 568.5L937.1 569.3L936.8 569.5L936.3 570.3L935.8 571.1L935.1 572.3L933.4 574.1L932.4 575.1L931.4 575.8L929.8 576.5L929.1 576.7L929.0 577.0L928.1 576.9L927.4 577.2L925.8 576.9L924.9 577.0L924.4 577.0L922.8 577.7L921.7 577.9L920.8 578.6L920.1 578.6L919.5 578.1L919.1 577.9L918.4 577.2L918.4 577.4L918.1 577.0L918.2 576.0L917.6 574.8L918.1 574.5L918.1 573.3L917.2 571.6L916.5 570.3L916.5 569.3L915.3 568.1L914.3 566.8L913.8 565.7L913.5 564.1L913.1 563.0L912.6 560.6L912.6 558.8L912.5 557.8L911.9 557.2L911.2 556.0L910.3 554.1L909.5 552.9L908.8 550.5L908.6 549.6L908.9 548.3L909.3 546.9L909.5 546.2L909.9 544.9L910.2 544.3L911.1 543.4L911.5 542.7L911.6 541.6L911.6 540.8L911.2 540.3L910.8 539.5L910.5 538.6L910.5 538.2L910.9 537.7L910.5 536.3L910.2 535.3L909.5 534.4L909.6 534.1L909.5 533.7L909.0 532.5L907.9 531.1L906.5 529.6L905.5 528.4L904.6 526.9L904.6 526.5L904.9 526.1L905.3 524.9L905.6 523.9L905.3 523.6L905.7 522.1L906.0 520.9L905.5 520.0L904.7 519.8L904.5 519.0L904.2 518.9L904.2 518.5L902.7 519.0L902.2 518.9L901.6 519.3L900.4 519.2L899.7 518.3L899.2 517.3L898.2 516.3L897.2 516.3L895.9 516.3L894.7 516.6L893.5 516.9L891.3 517.8L890.4 518.2L889.2 518.6L887.8 518.2L887.3 518.2L886.3 517.9L885.4 517.9L883.7 518.2L881.3 519.2L881.0 519.0L880.6 519.0L879.1 518.5L877.8 517.3L876.5 516.6L875.7 515.6L875.2 515.4L874.2 514.9L873.5 514.1L873.2 513.6L873.1 512.6L872.4 511.7L871.8 511.1L871.5 511.0L871.1 510.7L870.9 509.9L870.8 509.6L870.4 509.5L869.5 508.8L868.9 508.8L868.6 508.3L868.6 508.1L868.2 507.7L868.1 507.4L867.9 506.3L868.1 505.7L867.5 504.5L866.8 504.1L867.4 503.8L868.1 502.7L868.4 502.0L868.4 501.1L868.6 500.3L868.9 499.0L868.6 497.5L868.5 496.7L868.6 495.9L868.4 495.2L867.5 494.6L867.6 494.0L867.6 493.2L868.2 492.7L868.6 491.9L868.6 491.5L869.1 490.4L869.9 489.3L870.4 489.1L870.8 488.2L870.8 487.4L871.4 486.3L872.2 485.8L873.2 484.2L873.9 483.5L875.2 483.4L876.4 482.2L877.1 481.7L878.2 480.4L878.0 478.3L878.5 476.9L878.7 475.9L879.5 474.9L881.0 474.0L882.1 473.3L883.1 471.6L883.5 470.4ZM962.9 543.4L963.3 544.0L963.7 545.0L963.9 546.8L964.3 547.4L964.2 548.1L963.9 548.6L963.5 547.7L963.2 548.1L963.5 549.3L963.3 549.9L962.9 550.2L962.8 551.6L962.2 553.2L961.5 555.4L960.6 558.3L960.0 560.5L959.5 562.2L958.3 562.7L957.0 563.3L956.2 562.8L955.0 562.4L954.7 561.6L954.6 560.2L954.0 558.9L954.0 557.8L954.2 556.6L954.9 556.4L954.9 555.8L955.6 554.8L955.7 553.7L955.3 553.1L955.0 552.0L955.0 550.7L955.5 549.9L955.6 548.9L956.3 548.9L957.2 548.5L957.8 548.3L958.3 548.3L959.2 547.4L960.3 546.5L960.8 545.8L960.6 545.2L961.2 545.3L961.9 544.3L962.1 543.4L962.5 542.7L962.9 543.4Z" fill="#85b4c1"/>
<path d="M867.5 494.6L867.6 494.0L867.6 493.2L868.2 492.7L868.6 491.9L868.6 491.5L869.1 490.4L869.9 489.3L870.4 489.1L870.8 488.2L870.8 487.4L871.4 486.3L872.2 485.8L873.2 484.2L873.9 483.5L875.2 483.4L876.4 482.2L877.1 481.7L878.2 480.4L878.0 478.3L878.5 476.9L878.7 475.9L879.5 474.9L881.0 474.0L882.1 473.3L883.1 471.6L883.5 470.4L884.5 470.4L885.4 471.2L886.8 471.1L888.3 471.4L888.8 471.4L889.4 472.6L889.6 473.7L890.0 475.4L890.4 475.7L890.1 476.4L888.3 476.8L887.6 477.4L886.8 477.6L886.7 478.8L885.0 479.4L884.5 480.3L883.3 480.8L881.8 480.9L879.5 482.2L879.5 484.0L879.5 484.5L879.5 486.9L874.8 486.9L874.9 490.9L873.5 491.0L873.2 491.8L873.5 494.1L867.7 494.1L867.5 494.6Z" fill="#dbe0ad"/>
<path d="M888.8 471.4L890.3 470.5L891.9 470.2L892.7 469.5L894.1 468.9L896.6 468.6L898.9 468.4L899.6 468.8L901.0 468.0L902.5 468.0L903.0 468.4L904.0 468.4L903.7 469.3L904.0 470.9L903.6 472.3L902.7 473.3L902.9 474.7L904.0 475.7L904.0 476.1L905.0 476.8L905.6 479.8L906.0 481.3L906.2 482.0L905.9 483.4L906.0 484.0L905.7 485.0L905.9 486.0L905.3 486.6L906.2 487.7L906.3 488.5L906.8 489.3L907.5 489.0L908.6 489.8L909.2 490.7L904.3 493.7L900.1 496.7L898.1 497.4L896.5 497.5L896.5 496.6L895.8 496.3L894.9 495.9L894.6 495.2L889.8 491.8L884.9 488.4L879.6 484.5L879.5 484.5L879.5 484.0L879.5 482.2L881.8 480.9L883.3 480.8L884.5 480.3L885.0 479.4L886.7 478.8L886.8 477.6L887.6 477.4L888.3 476.8L890.1 476.4L890.4 475.7L890.0 475.4L889.6 473.7L889.4 472.6L888.8 471.4Z" fill="#d4dfb4"/>
<path d="M928.1 477.6L930.0 477.6L931.4 478.1L932.8 478.6L933.4 478.8L934.5 478.3L935.1 477.8L936.4 477.6L937.4 477.9L937.8 478.8L938.1 478.1L939.3 478.6L940.4 478.7L941.1 478.3L942.0 481.1L941.6 481.7L941.3 483.1L941.0 483.9L940.6 484.2L940.1 483.5L939.4 482.9L938.4 480.4L938.3 480.6L938.8 482.4L939.7 484.0L940.8 486.6L941.4 487.4L941.9 488.3L943.1 490.1L942.9 490.2L942.9 491.3L944.6 492.7L944.9 493.0L939.1 493.0L933.5 493.0L927.8 493.0L927.8 487.2L927.8 481.6L927.4 480.3L927.8 479.1L928.1 477.6Z" fill="#efe7a2"/>
<path d="M944.2 504.5L945.9 504.8L946.3 503.6L947.2 504.4L948.0 504.1L948.3 504.4L949.3 504.4L950.6 504.9L951.0 505.4L951.6 505.8L952.2 506.7L952.7 507.3L952.2 507.9L951.7 508.6L951.8 509.0L951.8 509.4L952.6 509.5L953.0 509.4L953.3 509.6L953.0 510.1L953.5 510.9L954.0 511.6L954.6 512.1L959.3 513.9L960.5 513.9L956.4 518.2L954.5 518.2L953.3 519.3L952.4 519.3L952.0 519.7L951.0 519.7L950.4 519.2L949.1 519.8L948.7 520.5L947.7 520.3L947.4 520.2L947.1 520.2L946.6 520.2L944.8 519.0L943.8 519.0L943.3 518.5L943.3 517.7L942.6 517.5L941.7 515.9L941.1 515.5L940.8 515.0L940.1 514.3L939.2 514.2L939.7 513.3L940.5 513.3L940.7 512.9L940.6 511.6L941.1 510.0L941.8 509.6L941.9 509.0L942.5 507.9L943.4 507.2L944.0 505.7L944.2 504.5Z" fill="#d4dfb4"/>
<path d="M951.6 527.8L950.6 528.4L950.2 528.9L949.7 529.1L949.4 530.1L949.0 530.7L948.7 531.5L948.2 532.1L946.1 530.6L946.0 529.8L940.8 526.9L940.6 526.7L940.5 525.2L941.0 524.6L941.7 523.7L942.2 522.6L941.6 521.0L941.4 520.3L940.7 519.3L941.6 518.4L942.6 517.5L943.3 517.7L943.3 518.5L943.8 519.0L944.8 519.0L946.6 520.2L947.1 520.2L947.4 520.2L947.7 520.3L948.7 520.5L949.1 519.8L950.4 519.2L951.0 519.7L952.0 519.7L950.7 521.4L950.7 526.6L951.6 527.8Z" fill="#efe7a2"/>
<path d="M949.7 540.2L950.0 540.9L949.9 542.4L950.2 543.6L950.2 545.9L950.4 546.6L950.0 547.7L949.4 548.7L948.6 549.6L947.2 550.2L945.6 551.0L944.0 552.6L943.4 552.8L942.4 554.0L941.9 554.3L941.7 555.4L942.4 556.6L942.7 557.4L942.7 557.8L943.0 557.8L942.9 559.4L942.7 560.0L943.0 560.3L942.9 560.9L942.1 561.6L941.0 562.0L939.3 563.0L938.7 563.5L938.8 564.1L939.1 564.3L939.0 565.1L937.9 565.1L937.7 563.7L937.5 563.1L937.7 561.4L937.4 560.3L936.7 558.1L938.2 556.3L938.6 555.2L938.8 555.1L938.9 554.2L938.7 553.7L938.8 552.6L939.1 551.5L939.1 549.6L938.3 549.2L937.6 549.1L937.3 548.7L936.7 548.4L935.5 548.4L935.4 547.8L935.2 546.8L939.6 545.6L940.4 546.3L940.8 546.1L941.4 546.5L941.4 547.1L941.1 547.8L941.2 548.8L942.2 549.8L942.6 548.7L943.2 548.4L943.1 546.5L942.5 545.5L942.0 545.0L941.5 545.0L941.1 543.1L941.5 542.0L942.6 541.9L944.3 542.3L944.7 542.1L945.7 542.0L946.2 541.6L947.1 541.6L948.6 541.1Z" fill="#b5d3c6"/>
<path d="M879.6 484.1L879.6 484.5L879.5 486.9L874.8 486.9L874.9 490.9L873.6 491.0L873.2 491.8L873.5 494.1L867.9 494.1L867.6 494.6L867.6 493.9L870.9 493.8L871.0 493.2L871.6 492.6L872.1 490.4L874.1 488.7L874.8 486.7L875.2 486.6L875.7 485.3L876.9 485.2L877.4 485.4L878.0 485.4L878.5 485.0L879.4 485.0L879.4 484.1Z" fill="#85b4c1"/>
<path d="M936.3 384.6L935.0 385.4L933.0 386.8L932.8 389.5L934.9 392.0L933.6 394.9L935.3 398.9L934.3 401.9L935.6 404.4L935.0 406.5L937.1 408.6L936.6 410.2L935.3 412.0L932.3 415.8L933.7 417.3L935.0 417.5L932.1 418.7L931.3 420.9L931.7 423.4L931.9 424.2L931.1 424.2L931.8 424.9L931.9 426.1L932.4 427.6L933.9 428.3L934.1 428.9L934.8 428.6L936.2 429.2L936.4 430.4L936.1 431.1L937.0 432.7L937.5 433.2L937.5 433.6L938.4 434.0L938.8 434.7L938.3 435.2L937.1 435.1L936.8 435.3L937.2 436.1L937.5 437.6L938.1 437.7L938.4 437.2L938.9 437.3L940.3 437.0L941.3 438.4L940.9 438.8L941.0 439.5L942.2 439.7L942.7 440.7L942.7 441.1L944.5 441.9L945.6 441.5L946.4 442.6L947.3 442.6L949.4 443.3L949.4 443.9L948.8 445.1L949.2 446.3L948.9 447.0L947.5 447.1L946.8 447.7L946.8 448.7L948.1 448.8L946.0 449.6L946.8 450.5L945.6 452.2L944.5 452.5L945.8 453.7L947.4 454.5L949.2 456.1L949.4 455.9L950.6 456.2L952.7 456.6L954.7 457.5L954.9 457.9L955.8 457.6L957.1 458.0L957.6 458.8L958.5 459.2L958.9 459.3L959.9 460.4L960.5 460.6L960.7 460.1L961.6 459.3L960.0 457.0L960.2 455.7L958.9 453.8L960.3 451.7L961.7 451.4L962.3 450.1L961.6 449.8L961.7 448.7L960.8 447.3L959.8 447.4L958.6 445.9L959.4 444.3L959.0 443.8L960.1 441.4L961.6 442.7L961.8 441.0L964.7 438.6L967.0 438.5L970.1 440.1L971.8 441.0L973.3 440.1L975.6 440.0L977.4 441.2L977.9 440.5L979.9 440.6L980.2 439.5L977.9 437.9L979.3 436.8L979.0 436.2L980.4 435.5L979.4 433.9L980.0 433.1L985.4 432.2L986.1 431.6L989.7 430.7L990.9 429.6L993.5 430.2L994.0 432.8L995.5 432.1L997.3 433.0L997.2 434.3L998.6 434.2L1002.1 431.9L1001.6 432.6L1003.5 434.5L1006.7 440.5L1007.4 439.3L1009.4 440.6L1011.4 440.0L1012.2 440.4L1012.9 441.7L1013.9 442.1L1014.5 443.1L1016.4 442.8L1017.1 444.1L1017.7 443.9L1019.2 443.6L1021.9 441.7L1024.1 440.6L1025.4 441.3L1026.9 441.3L1027.8 442.4L1029.3 442.4L1031.3 443.0L1032.7 441.5L1032.1 440.1L1033.6 437.7L1035.2 438.7L1036.5 439.0L1038.2 439.5L1038.5 441.3L1040.5 442.2L1041.9 441.8L1043.7 441.5L1045.1 441.8L1046.5 442.9L1047.4 444.0L1048.7 444.0L1050.5 444.3L1051.8 443.8L1053.7 443.4L1055.8 441.8L1056.7 442.1L1057.4 442.8L1059.2 442.6L1060.9 443.5L1062.9 442.1L1062.9 441.1L1064.2 438.7L1065.0 437.9L1065.0 436.6L1064.2 436.1L1065.3 434.9L1067.1 434.5L1069.0 434.4L1071.2 435.1L1072.4 436.0L1073.3 438.4L1073.9 439.3L1074.4 440.7L1074.9 442.9L1077.4 443.6L1079.1 445.2L1079.7 447.2L1081.8 447.2L1083.1 446.4L1085.4 445.7L1084.7 447.7L1084.1 448.4L1083.6 450.7L1082.7 452.7L1080.9 452.4L1079.7 453.1L1080.1 454.8L1079.9 457.1L1079.1 457.2L1079.2 458.2L1079.4 458.5L1079.5 457.9L1081.5 456.4L1083.2 457.4L1086.1 455.0L1090.0 450.3L1092.6 445.8L1093.3 442.3L1093.4 439.7L1094.6 437.4L1094.5 435.3L1092.4 432.6L1090.8 432.5L1089.9 433.7L1088.5 433.1L1087.8 431.6L1085.5 431.3L1091.1 425.2L1093.3 423.4L1095.7 420.0L1100.4 419.1L1104.7 419.6L1106.6 418.2L1108.7 420.7L1108.7 418.7L1110.9 420.4L1112.9 417.9L1114.1 419.7L1116.5 413.2L1120.2 412.0L1121.4 415.7L1125.0 412.4L1125.9 409.9L1127.7 409.6L1126.5 413.9L1123.9 416.3L1121.4 419.2L1118.9 422.7L1116.6 423.3L1116.6 424.5L1115.4 426.1L1114.6 429.6L1115.3 435.0L1116.1 438.5L1116.6 440.1L1118.6 435.6L1121.2 435.0L1121.8 432.3L1124.2 431.0L1123.6 429.9L1124.2 427.8L1125.6 427.7L1125.8 423.9L1124.1 423.3L1124.1 422.2L1125.8 419.5L1126.2 417.6L1128.2 418.1L1130.2 417.9L1136.0 417.6L1136.5 416.4L1138.6 414.5L1140.8 412.4L1142.1 412.0L1146.1 409.8L1148.7 410.4L1149.1 409.6L1148.3 407.4L1147.4 404.8L1146.1 403.0L1148.0 403.4L1149.9 401.8L1149.9 387.2L1147.9 385.4L1143.7 383.4L1140.7 383.7L1136.3 382.5L1135.5 384.4L1136.7 387.0L1135.0 388.2L1132.4 384.6L1129.7 385.1L1127.0 384.3L1124.5 384.4L1122.6 385.2L1120.8 384.1L1120.9 381.0L1118.3 379.2L1115.5 378.6L1111.1 379.3L1107.4 375.9L1106.2 373.2L1093.2 370.1L1091.3 372.2L1092.4 376.4L1089.0 377.1L1086.2 375.7L1083.8 376.9L1081.5 374.8L1080.1 379.5L1077.8 377.8L1076.0 374.2L1076.9 372.2L1073.9 366.5L1071.6 366.5L1068.6 365.6L1068.5 369.5L1062.5 368.7L1062.2 366.4L1057.6 365.6L1055.3 366.4L1054.6 367.7L1053.9 364.4L1052.6 365.4L1049.8 361.8L1048.7 363.3L1050.5 364.1L1053.6 358.8L1055.2 357.1L1055.1 354.1L1051.0 349.0L1046.7 349.0L1043.9 344.5L1041.6 342.5L1036.4 350.8L1033.7 350.8L1029.4 352.6L1025.5 352.9L1019.8 355.5L1015.2 361.6L1016.9 364.3L1016.3 364.8L1014.9 365.3L1007.3 366.1L1007.5 371.3L1009.8 378.2L1003.9 377.3L1001.4 378.0L1000.7 374.7L1003.2 372.8L999.7 370.1L999.0 370.2L999.3 373.6L996.7 376.8L998.6 380.4L997.4 384.6L997.8 386.7L999.4 391.3L998.7 396.1L996.0 397.5L994.1 397.2L995.7 395.0L996.3 392.8L997.6 389.4L996.0 387.0L995.9 378.2L994.9 376.8L996.3 373.2L992.1 369.1L990.1 374.4L987.6 378.5L990.1 390.5L985.0 386.2L978.8 383.5L978.0 389.8L974.1 389.0L968.9 387.6L970.1 390.5L968.6 392.8L963.9 390.9L959.0 392.0L958.3 389.9L954.2 388.7L955.3 391.1L954.6 393.4L955.7 395.5L955.0 398.0L953.6 396.8L949.3 397.2L949.7 400.3L947.0 405.0L944.3 402.4L942.0 403.7L941.9 398.6L939.6 396.1L940.6 395.5L947.0 398.2L949.3 397.3L950.9 393.0L949.7 391.2L944.3 386.8L940.4 385.8L938.0 383.3L936.3 384.6ZM922.5 430.1L920.5 430.9L920.2 432.1L921.9 432.3L924.6 432.3L924.4 431.7L924.6 431.0L924.0 430.6ZM1097.8 440.7L1099.2 444.6L1097.1 443.9L1096.2 447.1L1097.6 449.2L1097.6 450.7L1096.5 449.4L1095.6 451.0L1095.3 449.3L1095.5 447.2L1095.3 444.9L1095.6 443.2L1095.7 440.3L1094.8 438.0L1095.0 434.8L1096.3 433.7L1095.7 432.5L1096.4 432.2L1096.7 433.8L1097.2 436.1L1097.2 438.4L1097.8 440.7ZM965.7 374.1L967.2 373.0L967.1 370.5L970.0 366.2L968.7 365.6L972.1 360.9L971.7 358.5L974.9 355.5L979.6 351.7L984.4 350.6L986.8 348.3L989.6 347.4L990.6 349.9L989.7 351.8L984.6 354.7L980.2 357.5L975.8 362.7L973.6 367.7L971.4 372.4L971.7 376.2L974.4 379.8L973.6 380.2L968.9 379.7L968.5 377.7L965.9 376.5L965.7 374.1ZM1035.2 334.1L1032.0 335.0L1028.1 332.9L1025.7 330.0L1024.6 324.2L1022.6 322.5L1026.3 316.5L1029.4 314.4L1032.2 319.0L1035.5 327.2L1035.2 334.1ZM1042.5 338.3L1034.5 341.0L1037.1 331.5L1038.3 330.6L1039.3 331.1L1042.9 335.4L1042.5 338.3ZM1090.9 352.4L1094.7 352.7L1099.9 355.8L1098.7 359.9L1093.4 359.8L1091.1 361.1L1088.2 357.5L1089.0 353.5L1090.9 352.4ZM1101.7 356.1L1104.3 357.0L1107.9 358.5L1106.3 360.6L1104.0 360.1L1101.3 358.0L1101.7 356.1ZM1095.5 365.0L1097.5 366.9L1097.7 368.3L1095.6 368.3L1092.6 367.8L1092.4 367.5L1093.7 365.5L1095.5 365.0ZM1149.9 379.4L1148.3 379.6L1148.0 378.2L1149.9 376.3ZM634.1 376.3L637.6 377.4L637.5 378.0L636.0 379.1L634.1 379.4ZM634.1 387.2L637.6 390.1L641.4 393.9L641.3 396.2L642.2 397.0L641.9 394.4L645.8 395.0L648.6 398.3L647.2 399.9L644.8 400.2L644.8 403.5L644.2 404.2L642.9 404.1L641.8 402.9L639.9 402.0L639.6 400.5L638.1 399.9L636.5 400.4L635.7 399.2L636.0 397.9L634.3 398.7L634.9 400.3L634.1 401.8ZM958.6 323.3L959.4 320.6L956.2 320.4L959.0 318.8L961.2 318.7L961.5 321.1L962.3 319.0L963.7 317.4L965.8 319.4L965.3 320.7L963.3 321.8L962.0 322.5L961.8 323.9L960.2 325.3L958.6 323.3ZM961.2 386.2L962.6 387.8L963.9 386.2L962.5 385.0Z" fill="#e0e1ab"/>
<path d="M1046.8 493.7L1047.4 493.5L1049.4 494.0L1049.0 494.6L1049.4 495.6L1050.2 495.6L1050.7 494.0L1052.2 493.7L1054.2 493.0L1055.0 492.2L1055.5 492.7L1056.4 492.0L1058.0 491.8L1060.0 490.5L1062.0 489.1L1063.3 487.2L1063.3 486.4L1064.5 485.1L1065.5 483.4L1066.3 483.2L1066.6 481.9L1065.8 479.1L1066.6 478.7L1066.6 477.4L1065.6 476.1L1064.8 474.5L1064.2 472.9L1062.7 471.9L1063.4 470.7L1064.8 469.8L1065.5 468.9L1067.5 468.4L1067.3 467.4L1066.3 467.3L1065.1 466.7L1063.5 467.9L1062.3 467.4L1062.3 466.6L1061.1 466.3L1060.3 465.1L1061.1 464.2L1062.5 464.1L1063.3 462.9L1065.0 461.6L1066.2 461.0L1067.0 462.0L1065.9 463.2L1066.2 463.8L1065.4 464.8L1066.9 464.3L1068.0 463.4L1070.0 462.9L1071.2 461.7L1072.8 460.6L1073.8 459.3L1074.4 459.9L1075.7 460.0L1075.4 459.0L1077.7 458.1L1078.2 457.0L1079.2 458.2L1079.1 457.2L1079.9 457.1L1080.1 454.8L1079.7 453.1L1080.9 452.4L1082.7 452.7L1083.6 450.7L1084.1 448.4L1084.7 447.7L1085.4 445.7L1083.1 446.4L1081.8 447.2L1079.7 447.2L1079.1 445.2L1077.4 443.6L1074.9 442.9L1074.4 440.7L1073.9 439.3L1073.3 438.4L1072.4 436.0L1071.2 435.1L1069.0 434.4L1067.1 434.5L1065.3 434.9L1064.2 436.1L1065.0 436.6L1065.0 437.9L1064.2 438.7L1062.9 441.1L1062.9 442.1L1060.9 443.5L1059.2 442.6L1057.4 446.5L1057.8 447.3L1058.6 447.1L1060.0 447.4L1061.1 446.6L1062.3 447.3L1063.6 448.8L1063.4 449.5L1062.3 449.3L1060.2 449.6L1059.2 450.2L1058.2 451.5L1056.0 452.3L1054.5 453.4L1053.1 453.0L1052.3 452.8L1051.5 454.1L1052.0 454.9L1052.2 455.5L1051.2 456.2L1050.2 457.2L1048.5 457.9L1046.3 458.0L1044.0 458.7L1042.4 459.7L1041.7 459.1L1040.0 459.1L1037.9 457.9L1036.5 457.7L1034.6 457.9L1031.6 457.5L1030.0 457.5L1029.2 456.4L1028.5 454.5L1027.6 454.3L1025.9 453.0L1024.0 452.8L1022.3 452.4L1021.8 451.5L1022.3 449.1L1021.3 447.4L1019.3 446.6L1018.1 445.5L1017.7 443.9L1017.1 444.1L1016.1 445.6L1014.9 445.8L1014.8 447.9L1014.0 448.9L1011.2 448.2L1010.1 451.9L1009.4 452.4L1006.6 453.2L1007.9 456.6L1006.9 457.1L1007.0 458.3L1006.8 458.7L1004.5 459.7L1004.0 460.5L1002.2 460.7L1001.6 461.9L1000.1 461.7L999.1 462.0L997.8 462.9L998.0 463.4L997.6 463.8L997.9 465.5L998.4 465.3L999.2 465.7L999.2 466.4L999.4 467.5L999.7 468.0L1000.7 468.8L1001.1 470.2L1003.5 470.9L1005.0 473.0L1004.9 474.4L1005.5 475.2L1005.4 476.1L1004.4 475.9L1004.8 477.7L1006.2 478.8L1008.2 480.0L1008.8 479.6L1009.9 480.1L1011.4 481.2L1012.2 481.4L1012.7 482.2L1013.8 482.5L1014.9 483.2L1016.6 483.6L1018.2 483.7L1019.1 483.4L1019.2 484.7L1020.2 483.5L1021.0 483.1L1022.0 483.4L1022.7 483.5L1023.4 483.9L1024.5 483.7L1025.8 482.5L1027.5 481.5L1028.7 481.9L1029.7 481.2L1030.4 482.2L1029.9 482.9L1031.4 483.1L1032.3 483.0L1032.7 483.9L1033.4 484.3L1033.4 485.6L1033.4 486.9L1032.0 488.2L1031.8 490.1L1033.3 489.8L1033.7 491.3L1034.6 491.6L1034.2 492.8L1035.2 493.4L1035.9 493.7L1036.9 493.3L1036.9 493.9L1037.1 494.3L1037.8 494.3L1037.6 492.5L1038.4 492.3L1039.1 491.9L1040.3 491.9L1041.7 491.8L1042.9 490.9L1043.6 491.5L1044.9 491.8L1044.7 492.7L1045.3 493.3L1046.8 493.7ZM1050.1 498.1L1048.8 498.8L1047.7 498.4L1047.6 497.1L1048.3 496.4L1049.9 495.9L1050.7 496.0L1051.0 496.6L1050.4 497.2L1050.1 498.1Z" fill="#efe7a2"/>
<path d="M989.7 490.4L991.3 491.8L991.7 492.3L991.1 492.9L993.0 494.7L994.0 494.9L996.0 494.0L996.3 495.5L996.3 497.3L996.7 499.3L997.3 502.1L998.6 504.2L998.9 505.1L999.3 507.0L1000.4 509.1L1001.0 510.5L1001.7 512.6L1003.0 513.9L1003.6 513.5L1004.2 512.6L1005.5 512.1L1005.0 511.6L1005.6 510.5L1006.5 510.4L1006.4 507.9L1007.0 506.6L1006.6 503.5L1007.0 502.3L1009.0 501.7L1009.8 501.2L1009.8 500.6L1011.2 499.6L1012.2 498.7L1013.9 496.9L1015.9 495.9L1016.6 493.8L1018.4 493.5L1019.4 493.5L1019.5 492.9L1019.3 491.7L1018.8 490.5L1019.1 489.6L1018.2 489.1L1018.5 488.6L1019.4 488.0L1018.4 487.1L1018.9 486.0L1020.0 486.7L1020.7 486.8L1020.8 487.9L1022.2 488.1L1023.5 488.1L1024.3 488.4L1023.7 489.7L1023.0 489.8L1022.6 490.7L1023.4 491.5L1023.6 490.5L1024.0 490.5L1024.8 493.0L1025.5 492.6L1025.3 491.9L1025.6 491.4L1025.7 489.8L1026.8 490.2L1027.4 488.9L1027.5 488.1L1028.3 486.8L1028.3 485.8L1030.1 484.7L1031.1 485.0L1031.0 484.0L1031.5 483.7L1031.4 483.1L1029.9 482.9L1030.4 482.2L1029.7 481.2L1028.7 481.9L1027.5 481.5L1025.8 482.5L1024.5 483.7L1023.4 483.9L1023.9 484.4L1023.8 485.4L1022.7 485.5L1021.5 485.3L1020.6 485.6L1019.3 485.0L1019.2 484.7L1019.1 483.4L1018.2 483.7L1018.1 484.4L1018.3 485.5L1018.2 486.1L1017.0 486.1L1015.2 485.8L1014.1 485.6L1013.3 484.8L1011.3 484.6L1009.5 483.7L1008.1 482.9L1006.7 482.3L1007.3 480.7L1008.2 480.0L1006.2 478.8L1004.8 477.7L1004.4 475.9L1005.4 476.1L1005.5 475.2L1004.9 474.4L1005.0 473.0L1003.5 470.9L1002.1 472.4L1000.5 472.6L998.4 472.2L997.7 473.0L998.2 474.5L998.7 475.6L999.8 476.5L998.6 477.4L998.6 478.6L997.2 480.3L996.3 482.0L994.8 483.7L993.2 483.6L991.6 485.3L992.5 486.0L992.7 487.2L993.5 488.0L993.8 489.4L990.6 489.4L989.7 490.4Z" fill="#e0e1ab"/>
<path d="M961.6 480.4L963.1 480.3L963.8 480.0L964.8 482.2L965.8 483.7L967.2 484.2L968.6 485.5L970.4 486.0L971.8 485.2L972.9 485.0L973.6 485.2L974.2 487.2L975.8 487.4L977.4 487.7L980.1 488.2L980.6 486.4L982.7 485.5L982.6 484.8L981.9 484.5L981.9 483.1L980.5 482.4L979.9 481.4L979.2 480.5L980.5 479.0L980.4 478.0L979.3 477.7L979.2 476.6L978.7 475.3L979.3 474.3L978.7 474.1L979.1 472.8L979.7 470.6L979.6 469.1L978.5 469.1L976.8 467.5L975.7 467.3L974.1 466.4L973.1 466.2L972.5 466.5L971.5 466.5L970.5 467.5L969.2 467.9L969.1 468.3L966.9 468.8L964.8 468.5L963.8 467.6L962.5 467.2L962.0 465.8L960.8 465.0L961.3 464.1L960.8 463.5L960.3 463.6L958.6 465.0L958.1 465.1L957.1 464.8L956.4 464.0L956.2 463.3L955.2 463.8L955.6 465.9L955.4 466.5L956.1 467.9L957.1 470.0L958.0 470.6L958.1 471.6L957.4 472.2L957.1 473.6L958.1 475.2L959.8 476.1L960.5 477.4L960.3 478.6L960.8 478.6L960.8 479.5L961.6 480.4Z" fill="#efe7a2"/>
<path d="M961.6 480.4L960.8 479.5L960.8 478.6L960.3 478.6L960.5 477.4L959.8 476.1L958.1 475.2L957.1 473.6L957.4 472.2L958.1 471.6L958.0 470.6L957.1 470.0L956.1 467.9L955.4 468.2L954.9 467.8L953.3 467.5L952.7 467.8L951.9 468.9L951.1 469.4L951.3 470.7L950.7 472.8L947.6 474.6L948.2 476.7L949.9 477.1L952.0 478.3L956.0 481.6L958.7 481.7L960.0 481.9L960.3 480.1L960.7 480.3L961.6 480.4Z" fill="#efe7a2"/>
<path d="M942.1 481.3L941.9 482.0L941.6 483.4L942.3 483.4L943.0 484.5L943.9 485.8L944.4 487.1L944.9 487.4L945.3 488.5L945.7 489.4L946.4 489.8L947.2 490.4L947.9 492.1L948.0 494.1L949.0 495.6L950.6 496.9L951.0 498.1L951.8 499.4L952.6 500.5L953.1 500.9L953.3 501.6L953.9 501.1L953.8 500.5L954.1 499.8L954.7 500.2L955.1 500.0L956.8 500.0L957.0 500.1L958.4 500.3L959.0 500.2L959.3 500.7L960.0 500.5L961.0 498.9L962.4 498.2L966.5 497.6L970.8 496.1L971.7 493.0L971.1 491.9L970.8 492.3L966.5 491.5L965.9 489.9L965.9 489.6L965.6 488.9L964.8 488.7L964.5 487.9L963.9 487.4L963.8 485.6L962.9 485.0L961.9 484.0L961.3 482.6L960.3 482.7L960.0 481.9L958.7 481.7L956.0 481.6L952.0 478.3L949.9 477.1L948.2 476.7L947.9 476.9L945.0 477.7L946.4 479.4L946.0 479.7L945.7 480.3L944.6 480.5L944.3 481.1L943.7 481.6L942.1 481.3Z" fill="#93c5d9"/>
<path d="M942.0 481.1L942.7 478.4L942.7 477.8L942.9 477.3L942.9 476.3L943.2 475.7L944.8 476.4L947.6 474.6L948.2 476.7L947.9 476.9L945.0 477.7L946.4 479.4L946.0 479.7L945.7 480.3L944.6 480.5L944.3 481.1L943.7 481.6L942.1 481.3Z" fill="#efe7a2"/>
<path d="M895.6 439.9L894.3 440.4L893.9 442.2L890.6 443.9L889.3 442.8L889.7 445.5L887.3 444.8L885.4 445.3L885.5 446.9L887.8 447.6L888.8 448.7L890.3 451.0L890.0 455.0L889.3 456.2L889.8 456.9L892.5 457.8L893.0 457.4L894.6 458.3L896.3 458.0L896.4 456.8L898.6 456.2L901.3 456.8L902.6 455.6L902.8 454.8L902.0 454.5L901.7 452.9L902.2 452.3L901.7 451.6L901.8 451.0L901.3 450.1L900.6 450.4L900.6 449.4L901.7 448.3L901.7 447.7L902.3 447.9L902.7 447.6L902.9 446.1L903.6 444.6L901.5 444.2L900.9 443.6L900.4 443.6L900.1 443.4L898.9 442.4L898.1 442.6L897.1 441.5L896.5 440.6L895.8 440.6L895.6 439.9ZM904.5 457.7L905.4 457.0L905.7 458.6L905.2 460.1L904.6 459.7L904.2 458.4Z" fill="#e0e1ab"/>
<path d="M912.2 433.6L911.5 432.8L909.9 431.9L909.1 432.6L907.6 433.1L907.6 432.1L906.2 430.7L905.3 431.0L904.2 430.7L904.3 432.1L904.6 433.1L903.6 434.3L902.2 433.8L901.9 434.3L902.2 435.2L901.8 437.3L901.4 438.2L900.6 438.2L900.8 440.6L900.6 442.1L900.9 442.6L900.9 443.6L901.5 444.2L903.6 444.6L902.9 446.1L902.7 447.6L903.9 447.6L904.2 447.1L905.7 447.8L906.2 447.7L906.9 448.3L907.1 447.7L908.4 447.8L909.4 447.4L910.1 447.5L910.5 447.9L910.7 447.5L910.4 446.1L911.0 445.9L911.5 444.9L910.7 443.9L909.9 443.4L909.8 442.5L909.5 441.8L910.6 441.3L911.1 440.8L912.1 440.3L912.5 439.9L912.9 440.1L913.2 440.4L913.5 439.9L912.9 438.4L913.0 437.6L912.7 436.4L912.2 435.5L912.6 434.9L912.2 433.6Z" fill="#d4dfb4"/>
<path d="M924.5 447.0L925.1 446.5L926.0 446.8L927.0 446.8L927.6 447.3L928.1 447.0L929.2 446.8L929.5 446.3L930.1 446.3L930.6 446.5L931.0 447.1L931.5 448.0L932.3 449.3L932.3 450.2L932.2 451.1L932.4 452.0L933.1 452.4L933.8 452.1L934.4 452.4L934.4 452.9L933.7 453.4L933.3 453.2L932.9 455.6L932.1 455.4L931.0 454.7L929.3 455.1L928.6 455.6L926.5 455.5L925.4 455.2L924.9 455.4L924.5 454.6L924.2 454.2L924.5 453.9L924.2 453.6L923.7 454.1L922.9 453.5L922.8 452.6L921.9 452.2L921.7 451.5L921.0 450.7L922.1 450.3L923.0 448.9L923.7 447.5L924.5 447.0Z" fill="#d4dfb4"/>
<path d="M1041.4 510.2L1042.6 511.1L1042.1 512.1L1042.5 513.0L1044.4 511.7L1045.6 510.4L1047.3 509.5L1048.4 508.5L1048.6 506.0L1048.0 503.2L1047.1 502.0L1045.9 501.1L1044.4 499.1L1043.4 497.5L1043.7 496.5L1044.9 495.0L1046.8 493.7L1045.3 493.3L1044.7 492.7L1044.9 491.8L1043.6 491.5L1042.9 490.9L1041.7 491.8L1040.3 491.9L1039.1 491.9L1038.4 492.3L1039.2 493.5L1039.8 494.9L1041.6 494.9L1042.2 496.3L1041.2 496.7L1040.8 497.2L1042.5 498.1L1043.8 499.9L1044.7 501.2L1045.7 502.3L1046.1 503.3L1045.8 504.8L1046.2 505.8L1046.0 507.5L1043.6 508.7L1044.2 509.6L1042.7 509.7L1041.4 510.2Z" fill="#d4dfb4"/>
<path d="M887.7 421.1L886.2 424.0L887.6 423.7L889.2 423.7L888.8 425.8L887.5 428.2L889.0 428.3L890.4 431.6L891.4 432.0L892.3 434.7L892.7 435.7L894.4 436.1L894.2 437.6L893.5 438.3L894.1 439.5L892.8 440.7L890.9 440.7L888.4 441.3L887.8 440.8L886.8 441.9L885.5 441.6L884.5 442.5L883.7 442.0L885.8 439.7L887.1 439.2L884.9 438.8L884.4 437.9L886.0 437.1L885.2 435.9L885.4 434.3L887.6 434.5L887.8 433.1L886.8 431.6L885.1 431.1L884.7 430.5L885.2 429.3L884.8 428.6L884.0 429.8L883.9 427.4L883.2 426.0L883.7 423.3L884.8 421.1L886.0 421.3L887.7 421.1ZM883.9 431.7L883.1 433.4L882.0 432.9L881.2 432.9L881.4 431.6L881.2 430.3L882.4 430.2L883.9 431.7Z" fill="#7db9df"/>
<path d="M883.1 433.4L883.4 435.1L882.3 437.2L879.7 438.6L877.7 438.3L878.9 435.8L878.1 433.4L880.1 431.5L881.2 430.3L881.4 431.6L881.2 432.9L882.0 432.9L883.1 433.4ZM914.2 466.0L913.7 467.4L913.9 468.0L913.6 468.9L912.5 468.2L911.8 468.0L909.8 467.1L910.0 466.2L911.7 466.4L913.1 466.2L914.2 466.0ZM905.2 460.4L906.1 461.8L905.8 464.3L905.2 464.1L904.6 464.8L904.1 464.3L904.0 462.0L903.7 460.9L904.5 461.0L905.2 460.4ZM925.9 470.5L926.7 471.1L927.9 471.0L928.9 471.2L928.9 471.5L929.7 471.2L929.5 471.8L927.4 471.9L927.4 471.6L925.7 471.3L925.9 470.5ZM938.9 471.5L939.2 471.1L940.2 471.1L941.5 470.6L940.6 471.3L940.7 471.7L940.7 471.8L939.2 472.5L938.5 472.3L938.2 471.6L938.9 471.5ZM910.2 429.1L909.3 431.1L907.8 429.7L907.6 428.6L909.7 427.8L910.2 429.1ZM1009.2 514.5L1009.0 516.1L1008.4 516.5L1007.1 516.8L1006.4 515.6L1006.2 513.6L1006.8 511.2L1007.8 512.0L1008.5 513.0L1009.2 514.5ZM1066.5 489.3L1065.6 491.8L1065.0 493.1L1064.2 491.8L1064.1 490.6L1064.9 489.1L1066.1 487.9L1066.7 488.3L1066.5 489.3ZM913.7 328.1L914.2 325.2L916.3 325.0L918.1 327.8L922.9 333.5L919.3 336.5L918.5 341.6L917.2 342.9L916.5 348.3L914.8 348.5L911.7 344.6L913.0 342.2L910.9 340.3L908.1 334.2L907.0 328.2L910.9 325.3L911.7 328.1L913.7 328.1ZM931.3 324.9L929.1 329.3L925.0 330.2L920.8 328.9L920.5 326.7L918.4 326.5L916.9 322.7L921.3 320.3L923.4 322.4L924.8 319.8L928.5 321.9L931.3 324.9ZM927.4 341.5L924.2 344.2L921.7 342.6L922.7 340.9L921.8 338.7L924.8 337.3L925.3 339.9L927.4 341.5Z" fill="#85b4c1"/>
<path d="M1093.0 460.5L1094.6 460.1L1095.3 462.7L1095.3 464.2L1093.9 466.1L1094.0 468.0L1093.4 469.4L1093.7 470.3L1092.9 471.5L1091.1 472.3L1088.6 472.4L1088.1 473.0L1086.5 474.4L1085.6 473.8L1085.5 472.5L1083.0 472.8L1081.3 473.7L1079.7 473.7L1079.5 473.1L1080.9 472.2L1082.0 471.0L1084.8 470.5L1086.4 470.8L1087.9 467.7L1088.8 468.5L1090.9 466.7L1091.7 466.0L1092.6 463.8L1092.4 461.7L1093.0 460.5ZM1079.7 473.7L1081.0 474.7L1081.1 475.0L1080.1 477.8L1079.2 478.6L1078.5 477.9L1078.9 476.4L1078.0 475.9L1077.4 474.7L1078.7 474.2L1079.7 473.7ZM1083.8 472.9L1084.9 473.2L1085.1 473.8L1084.3 474.9L1083.7 474.3L1082.9 474.7L1082.5 475.7L1081.6 475.2L1081.6 474.4L1082.4 473.4L1083.2 473.6L1083.8 472.9ZM1098.2 454.7L1099.2 455.1L1100.2 454.3L1100.5 456.5L1098.4 457.0L1097.1 458.9L1094.9 457.6L1094.1 459.7L1092.5 459.8L1092.3 457.9L1093.0 456.3L1094.5 456.2L1095.0 453.5L1095.4 451.9L1097.1 454.0L1098.2 454.7Z" fill="#efe7a2"/>
<path d="M933.5 460.5L936.6 460.7L938.3 459.4L940.0 458.9L942.4 458.9L944.9 460.2L946.9 460.9L948.6 460.7L949.8 460.8L951.5 459.8L951.7 459.0L951.4 457.7L950.6 457.0L949.8 456.7L949.2 456.1L947.4 454.5L945.8 453.7L944.5 452.5L945.6 452.2L946.8 450.5L946.0 449.6L948.1 448.8L948.0 448.3L946.8 448.7L945.6 448.8L944.7 449.5L943.3 449.6L942.1 450.4L942.2 451.7L942.9 452.2L944.3 452.1L944.0 452.8L942.5 453.1L940.5 454.3L939.7 453.9L940.1 452.9L938.5 452.3L938.7 452.0L940.1 451.3L939.7 450.8L937.5 450.3L937.4 449.5L936.0 449.8L935.5 450.9L934.4 452.4L934.4 452.9L933.7 453.4L933.3 453.2L932.9 455.6L932.2 456.4L931.6 457.8L932.1 458.9L932.3 459.7L933.5 460.3L933.5 460.5ZM961.6 459.3L960.0 457.0L960.2 455.7L958.9 453.8L960.3 451.7L961.7 451.4L962.3 450.1L963.7 449.7L965.3 448.8L966.5 449.3L968.0 449.2L968.2 450.5L968.0 452.5L966.7 452.2L965.5 452.5L965.5 454.0L964.1 453.8L964.1 454.5L964.9 455.0L965.5 456.7L967.2 457.4L967.5 458.1L967.1 458.9L967.2 459.4L967.7 460.6L967.8 461.1L969.2 461.5L970.4 460.9L969.4 459.8L969.0 458.7L967.8 459.2L967.7 460.6L967.5 462.7L968.4 462.8L968.1 464.1L969.2 464.7L969.0 466.6L969.2 467.9L969.1 468.3L966.9 468.8L964.8 468.5L963.8 467.6L962.5 467.2L962.0 465.8L962.0 464.9L962.5 464.5L962.8 463.8L963.0 462.4L964.2 462.2L963.7 461.7L963.1 461.7L962.4 460.3L961.6 459.3ZM930.7 461.9L931.5 460.9L933.4 460.8L934.0 461.3L933.4 462.0L931.8 461.9Z" fill="#ffffff"/>
<path d="M1097.7 545.3L1098.2 546.4L1099.1 545.9L1100.3 547.1L1100.1 547.7L1100.4 549.0L1101.4 551.2L1101.2 552.0L1103.3 553.8L1105.2 555.2L1105.1 555.6L1105.9 556.5L1106.4 558.2L1107.0 557.9L1107.6 558.5L1107.9 558.3L1108.2 559.9L1109.9 561.5L1111.0 562.8L1111.4 564.1L1111.4 565.0L1111.3 566.0L1112.0 567.3L1111.9 568.8L1111.3 571.0L1111.3 572.0L1111.0 573.2L1110.4 574.7L1109.3 575.6L1108.8 576.9L1108.3 577.7L1107.9 579.2L1107.4 580.1L1107.0 581.4L1106.8 582.7L1106.9 583.3L1106.1 583.9L1104.5 583.9L1103.1 584.7L1102.5 585.4L1101.6 586.2L1100.4 585.4L1099.6 585.1L1099.8 584.1L1099.0 584.5L1097.7 585.8L1096.5 585.3L1095.7 585.0L1094.9 584.9L1093.5 584.3L1092.5 583.2L1092.3 581.8L1091.9 580.2L1091.2 580.2L1089.9 580.0L1090.3 579.2L1090.0 577.9L1089.3 579.1L1088.0 579.4L1088.8 578.4L1089.0 577.4L1089.5 576.6L1089.4 575.3L1088.3 576.8L1087.4 577.4L1086.8 578.7L1085.7 578.0L1085.7 577.1L1084.8 575.9L1084.1 575.2L1084.4 574.8L1082.5 573.8L1081.5 573.8L1080.1 572.9L1077.6 573.1L1075.7 574.2L1074.1 574.3L1072.7 574.2L1071.2 575.0L1070.0 575.4L1069.7 576.3L1069.2 577.0L1067.9 577.0L1067.0 577.2L1065.8 576.9L1064.7 577.1L1063.8 577.2L1062.9 578.1L1062.5 578.0L1061.8 578.5L1061.1 579.0L1060.0 579.0L1059.1 579.0L1057.5 577.9L1056.8 577.5L1056.8 576.5L1057.5 576.3L1057.8 575.9L1057.7 575.3L1057.9 574.1L1057.7 573.1L1057.0 571.4L1056.7 570.5L1056.8 569.6L1056.2 568.5L1056.2 568.0L1055.6 567.4L1055.4 566.1L1054.6 564.8L1054.4 564.1L1055.0 564.8L1054.5 563.3L1055.2 563.8L1055.6 564.4L1055.6 563.6L1054.9 562.4L1054.8 561.9L1054.4 561.4L1054.6 560.5L1054.9 560.1L1055.1 559.3L1054.9 558.4L1055.5 557.3L1055.6 558.5L1056.2 557.4L1057.4 556.9L1058.1 556.2L1059.2 555.7L1059.9 555.6L1060.2 555.8L1061.4 555.2L1062.2 555.0L1062.5 554.7L1062.8 554.5L1063.6 554.6L1065.1 554.1L1065.9 553.5L1066.3 552.6L1067.1 551.9L1067.2 551.3L1067.2 550.4L1068.2 549.2L1068.8 550.5L1069.4 550.2L1068.9 549.5L1069.4 548.7L1070.0 549.1L1070.2 547.9L1071.0 547.2L1071.3 546.6L1072.0 546.4L1072.1 546.0L1072.7 546.1L1072.7 545.8L1073.3 545.5L1074.0 545.3L1075.1 546.0L1075.9 546.9L1076.8 546.9L1077.7 547.0L1077.4 546.2L1078.1 545.1L1078.7 544.7L1078.5 544.3L1079.1 543.5L1080.0 542.9L1080.7 543.1L1081.9 542.8L1081.9 542.1L1080.8 541.6L1081.6 541.4L1082.6 541.8L1083.3 542.4L1084.5 542.7L1084.9 542.6L1085.8 543.0L1086.7 542.6L1087.2 542.7L1087.5 542.5L1088.2 543.2L1087.8 544.0L1087.3 544.6L1086.8 544.6L1086.9 545.2L1086.5 545.9L1086.0 546.7L1086.1 547.1L1087.3 547.9L1088.4 548.4L1089.1 548.9L1090.1 549.8L1090.5 549.8L1091.3 550.2L1091.5 550.6L1092.9 551.1L1093.8 550.6L1094.1 549.8L1094.4 549.2L1094.6 548.3L1095.0 547.2L1094.8 546.4L1094.9 546.0L1094.7 545.2L1094.9 544.1L1095.2 543.8L1095.0 543.3L1095.3 542.5L1095.6 541.7L1095.6 541.3L1096.2 540.7L1096.6 541.4L1096.7 542.4L1097.0 542.5L1097.1 543.2L1097.6 543.9L1097.7 544.7L1097.7 545.3ZM1100.3 589.5L1101.7 590.1L1102.5 589.9L1103.6 589.5L1104.4 589.6L1104.5 591.9L1104.1 592.6L1103.9 594.1L1103.4 593.6L1102.4 595.0L1102.1 594.9L1101.2 594.8L1100.3 593.1L1100.2 591.8L1099.3 590.2L1099.4 589.3L1100.3 589.5Z" fill="#85b4c1"/>
<path d="M1145.4 588.1L1144.9 589.1L1144.1 590.4L1143.0 591.2L1142.8 590.7L1142.2 590.4L1143.0 588.8L1142.6 587.8L1141.0 587.1L1141.1 586.4L1142.1 585.8L1142.3 584.3L1142.3 583.2L1141.7 582.0L1141.7 581.6L1141.0 580.9L1139.9 579.4L1139.3 578.1L1139.9 578.0L1140.6 579.0L1141.7 579.4L1142.1 581.0L1143.2 582.9L1143.2 581.6L1143.9 582.1L1144.1 583.5L1145.2 584.1L1146.2 584.2L1147.0 583.5L1147.7 583.7L1147.4 585.3L1147.0 586.4L1145.9 586.4L1145.5 587.0L1145.6 587.8L1145.4 588.1ZM1135.1 594.8L1136.3 593.8L1137.2 592.8L1137.8 591.3L1138.3 590.8L1138.5 589.8L1139.5 588.9L1139.9 589.7L1140.2 590.5L1141.2 589.7L1141.6 590.5L1141.6 591.3L1141.1 592.2L1140.2 593.7L1139.4 594.4L1140.0 595.4L1138.8 595.4L1137.6 596.2L1137.2 597.5L1136.4 599.6L1135.3 600.5L1134.6 601.1L1133.3 601.0L1132.3 600.3L1130.8 600.2L1130.5 599.4L1131.3 597.9L1133.1 595.9L1134.0 595.6L1135.1 594.8Z" fill="#85b4c1"/>
<path d="M1094.0 529.1L1096.5 530.1L1099.1 530.9L1100.1 531.6L1100.9 532.4L1101.1 533.2L1103.5 534.1L1103.9 534.8L1102.5 535.0L1102.9 536.0L1104.1 536.9L1105.1 538.4L1105.9 538.4L1105.8 539.0L1106.9 539.3L1106.5 539.6L1108.0 540.2L1107.9 540.6L1106.9 540.7L1106.6 540.3L1105.3 540.2L1103.9 539.9L1102.8 539.0L1102.0 538.2L1101.2 537.0L1099.4 536.3L1098.1 536.7L1097.3 537.2L1097.4 538.3L1096.3 538.8L1095.5 538.5L1094.0 538.5L1094.0 533.8L1094.0 529.1ZM1109.7 533.2L1109.0 533.3L1108.7 533.7L1108.0 534.1L1107.2 534.4L1106.5 534.4L1105.3 534.0L1104.5 533.6L1104.6 533.2L1105.9 533.4L1106.7 533.3L1106.9 532.6L1107.1 532.5L1107.2 533.3L1108.0 533.2L1108.4 532.7L1109.3 532.2L1109.1 531.3L1110.0 531.3L1110.2 531.5L1110.2 532.3L1109.7 533.2ZM1111.4 531.8L1110.9 532.2L1110.7 531.3L1110.3 530.8L1109.7 530.3L1108.9 529.7L1107.8 529.3L1108.2 528.9L1109.0 529.3L1109.5 529.7L1110.1 530.0L1110.7 530.6L1111.2 531.1L1111.4 531.8ZM1115.3 535.1L1114.9 535.3L1114.3 534.7L1113.7 533.8L1113.3 532.7L1113.5 532.6L1113.7 533.0L1114.1 533.3L1114.8 534.3L1115.5 534.7L1115.3 535.1ZM1102.6 528.1L1103.2 528.3L1102.4 528.5ZM1124.2 540.5L1124.7 541.0L1123.6 540.9L1123.1 540.0L1124.0 540.4ZM1122.4 539.6L1121.9 539.6L1121.0 539.4L1120.7 539.2L1120.8 538.6L1121.7 538.9L1122.2 539.2ZM1123.6 539.2L1123.4 539.4L1122.3 538.2L1122.0 537.3L1122.5 537.3L1123.0 538.5ZM1121.0 537.3L1121.1 537.6L1120.0 537.0L1119.2 536.5L1118.6 536.0L1118.9 535.9L1119.5 536.2L1120.7 536.9ZM1117.7 535.9L1117.4 536.0L1116.8 535.7L1116.2 535.1L1116.3 534.8L1117.1 535.4ZM1132.4 549.3L1132.0 549.5L1131.5 548.8L1131.6 548.4ZM1131.4 547.0L1131.6 548.2L1131.2 548.0L1130.9 548.1L1130.7 547.7L1130.7 546.5ZM1147.5 550.6L1148.0 551.0L1147.8 551.8L1146.9 552.0L1146.1 551.8L1146.0 551.2L1146.5 550.6L1147.2 550.8ZM1148.0 549.6L1149.3 549.0L1149.7 549.3L1148.6 549.9Z" fill="#85b4c1"/>
<path d="M1129.5 556.3L1130.7 557.2L1131.4 557.9L1130.9 558.3L1130.1 557.9L1129.0 557.2L1128.1 556.4L1127.2 555.3L1127.0 554.8L1127.6 554.8L1128.4 555.3L1129.0 555.8L1129.5 556.3Z" fill="#85b4c1"/>
<path d="M1094.0 529.1L1094.0 533.8L1094.0 538.5L1092.8 537.3L1091.3 537.0L1091.0 537.4L1089.1 537.4L1089.8 536.3L1090.7 535.9L1090.3 534.3L1089.6 533.1L1086.8 531.9L1085.6 531.7L1083.5 530.4L1083.1 531.1L1082.5 531.2L1082.2 530.7L1082.2 530.1L1081.1 529.4L1082.6 528.9L1083.6 528.9L1083.5 528.5L1081.4 528.5L1080.9 527.7L1079.6 527.4L1079.0 526.7L1080.9 526.4L1081.6 525.9L1084.0 526.5L1084.2 527.0L1084.6 529.3L1086.1 530.2L1087.2 528.7L1088.9 527.8L1090.2 527.8L1091.4 528.3L1092.5 528.8L1094.0 529.1ZM1028.5 517.5L1031.6 517.8L1032.9 519.2L1034.0 520.2L1034.8 520.8L1036.2 522.3L1037.6 522.4L1038.8 523.3L1039.7 524.6L1040.8 525.2L1040.2 526.4L1041.0 526.9L1041.5 526.9L1041.8 527.9L1042.3 528.7L1043.3 528.8L1044.0 529.7L1043.7 531.5L1043.6 533.7L1042.0 533.8L1040.8 532.6L1039.0 531.4L1038.4 530.5L1037.3 529.4L1036.5 528.3L1035.5 526.3L1034.2 525.1L1033.8 523.9L1033.3 522.7L1032.0 521.8L1031.2 520.6L1030.1 519.8L1028.6 518.2L1028.5 517.5ZM1043.9 533.8L1045.7 533.9L1046.8 534.5L1047.4 534.6L1047.6 535.1L1050.4 535.2L1050.7 534.6L1053.3 535.3L1053.9 536.3L1056.0 536.5L1057.8 537.4L1056.1 537.9L1054.5 537.4L1053.3 537.4L1051.8 537.3L1050.4 537.0L1048.8 536.5L1047.7 536.3L1047.1 536.5L1044.5 535.9L1044.3 535.3L1042.9 535.2L1043.9 533.8ZM1060.9 519.4L1060.1 520.7L1061.1 522.1L1060.9 522.7L1062.5 524.1L1060.8 524.2L1060.3 525.2L1060.4 526.5L1059.0 527.5L1058.9 528.9L1058.4 531.1L1058.2 530.6L1056.5 531.2L1056.0 530.4L1055.0 530.3L1054.3 529.8L1052.5 530.3L1052.0 529.6L1051.1 529.7L1049.9 529.6L1049.7 527.6L1049.0 527.2L1048.3 526.0L1048.1 524.8L1048.3 523.4L1049.1 522.5L1049.3 523.4L1050.3 524.3L1051.2 523.9L1052.2 524.1L1053.0 523.3L1053.7 523.2L1055.0 523.6L1056.2 523.3L1056.9 521.3L1057.5 520.8L1058.0 519.2L1059.6 519.2L1060.9 519.4ZM1071.4 523.3L1070.3 524.7L1069.2 525.0L1067.8 524.7L1065.4 524.8L1064.2 525.0L1064.0 526.1L1065.3 527.4L1066.0 526.7L1068.7 526.2L1068.6 526.9L1067.9 526.7L1067.3 527.5L1066.1 528.1L1067.4 529.9L1067.2 530.4L1068.4 532.1L1068.4 533.0L1067.7 533.4L1067.1 532.9L1067.8 531.7L1066.4 532.3L1066.0 531.9L1066.2 531.4L1065.2 530.5L1065.3 529.1L1064.4 529.6L1064.5 531.2L1064.5 533.3L1063.6 533.5L1063.0 533.1L1063.4 531.7L1063.2 530.4L1062.6 530.4L1062.1 529.4L1062.7 528.4L1062.9 527.3L1063.7 525.1L1064.0 524.5L1065.2 523.5L1066.3 523.9L1068.1 524.1L1069.8 524.0L1071.2 523.0L1071.4 523.3ZM1076.4 523.7L1076.3 525.0L1075.5 524.8L1075.3 525.7L1075.9 526.5L1075.5 526.6L1074.9 525.7L1075.4 523.0L1076.2 523.1L1076.4 523.7ZM1078.9 529.8L1079.4 530.9L1078.2 530.3L1077.0 530.2L1076.2 530.3L1075.2 530.2L1075.6 529.4L1077.3 529.4L1078.9 529.8ZM1074.3 530.3L1073.8 530.8L1072.8 530.5L1072.5 529.9L1073.9 529.8L1074.3 530.3ZM1071.0 538.1L1071.2 538.4L1071.2 538.9L1070.3 540.0L1069.0 540.3L1068.9 540.1L1069.0 539.6L1069.6 538.7L1071.0 538.1ZM1065.8 537.6L1066.8 537.5L1068.1 537.0L1067.9 537.8L1065.7 538.2L1063.8 538.0L1063.8 537.5L1064.9 537.2L1065.8 537.6ZM1061.4 537.4L1062.3 537.3L1062.7 537.9L1061.0 538.2L1060.0 538.4L1059.2 538.3L1059.7 537.5L1060.5 537.5L1060.9 537.0L1061.4 537.4ZM1064.9 540.1L1064.3 540.1L1062.4 539.1L1063.8 538.8L1064.5 539.3L1065.0 539.7L1064.9 540.1ZM1058.2 537.3L1059.0 537.4L1058.9 538.2L1058.0 538.0ZM1043.7 527.5L1044.7 528.9L1044.9 529.7L1043.9 529.5L1043.0 528.1ZM1080.0 536.1L1080.7 535.7L1080.5 536.7L1079.8 536.9ZM1084.4 533.4L1085.0 533.5L1084.8 534.7L1084.3 534.5ZM1031.2 523.3L1032.1 524.4L1031.8 524.5L1031.1 523.6ZM1033.3 526.8L1034.1 527.8L1033.7 527.8ZM1046.1 529.1L1047.0 529.4L1046.7 529.9L1046.1 529.8ZM1070.1 527.8L1071.5 527.9L1072.5 528.1L1071.1 528.1ZM1072.5 536.9L1073.5 536.3L1073.4 536.7ZM1077.7 536.6L1078.2 536.6L1077.9 537.0Z" fill="#b5d3c6"/>
<path d="M1049.1 522.5L1050.2 523.0L1051.3 522.7L1051.5 521.5L1052.2 521.2L1053.9 520.9L1054.9 519.8L1055.6 518.9L1056.2 518.3L1057.4 517.5L1058.5 516.5L1059.2 515.4L1059.8 515.4L1060.5 516.1L1060.6 516.8L1061.5 517.2L1062.7 517.6L1062.6 518.2L1061.7 518.2L1061.9 518.9L1060.9 519.4L1059.6 519.2L1058.0 519.2L1057.5 520.8L1056.9 521.3L1056.2 523.3L1055.0 523.6L1053.7 523.2L1053.0 523.3L1052.2 524.1L1051.2 523.9L1050.3 524.3L1049.3 523.4L1049.1 522.5ZM1071.0 538.1L1072.4 537.5L1073.4 537.4L1073.9 537.2L1074.4 537.4L1073.9 537.8L1072.4 538.5L1071.2 538.9L1071.2 538.4L1071.0 538.1ZM1065.8 498.4L1066.7 498.8L1067.1 498.4L1067.3 498.8L1067.0 499.4L1067.5 500.5L1067.1 501.7L1066.3 502.2L1066.1 503.4L1066.4 504.6L1067.1 504.8L1067.8 504.6L1069.6 505.4L1069.4 506.2L1069.9 506.6L1069.8 507.2L1068.6 506.5L1068.1 505.8L1067.7 506.3L1066.8 505.4L1065.5 505.6L1064.8 505.3L1064.9 504.7L1065.3 504.3L1064.9 504.0L1064.7 504.5L1064.0 503.7L1063.8 503.0L1063.7 501.6L1064.3 502.1L1064.5 499.7L1064.9 498.4L1065.8 498.4ZM1073.0 513.3L1073.2 514.2L1073.3 515.0L1072.8 516.4L1072.3 514.9L1071.6 515.6L1072.0 516.7L1071.6 517.3L1070.0 516.5L1069.6 515.5L1070.0 514.8L1069.1 514.1L1068.6 514.7L1068.0 514.6L1066.9 515.4L1066.7 515.0L1067.2 513.8L1068.1 513.4L1068.9 512.9L1069.4 513.5L1070.5 513.1L1070.7 512.5L1071.7 512.4L1071.7 511.3L1072.8 512.0L1072.9 512.7L1073.0 513.3ZM1063.2 509.0L1063.5 510.2L1062.5 511.0L1061.8 511.9L1059.9 513.3L1060.6 512.3L1061.6 511.4L1062.5 510.4L1063.2 509.0ZM1071.8 507.8L1072.2 509.4L1071.1 509.0L1071.1 509.5L1071.5 510.4L1070.8 510.8L1070.7 509.7L1070.3 509.7L1070.1 508.8L1070.9 508.9L1070.9 508.3L1070.0 507.2L1071.4 507.2L1071.8 507.8ZM1066.6 508.2L1067.5 508.7L1068.4 508.7L1068.3 509.2L1067.7 509.9L1066.8 510.3L1066.7 509.6L1066.8 508.9L1066.6 508.2ZM1069.6 510.5L1069.1 511.0L1068.7 511.9L1068.2 512.4L1067.3 511.4L1067.6 511.0L1068.0 510.6L1068.1 509.7L1068.9 509.6L1068.7 510.6L1069.8 509.2L1069.6 510.5ZM1066.1 506.5L1065.7 507.7L1065.1 507.0L1064.4 505.9L1065.6 505.9L1066.1 506.5Z" fill="#85b4c1"/>
<path d="M907.8 420.4L908.5 419.0L909.6 417.0L910.0 413.5L909.2 412.0L909.0 407.9L910.0 404.7L911.5 402.4L911.9 403.7L913.6 397.5L915.1 393.5L916.1 390.9L917.4 390.9L917.8 388.6L920.5 389.4L920.6 386.6L921.5 386.6" fill="none" stroke="#ffffff" stroke-opacity=".5" stroke-width=".55"/>
<path d="M921.5 386.6L922.4 385.5L924.0 387.6L925.9 387.4L927.4 388.4L928.8 386.6L929.5 383.6L931.7 382.2L933.6 383.9L933.0 386.8" fill="none" stroke="#ffffff" stroke-opacity=".5" stroke-width=".55"/>
<path d="M921.5 386.6L923.5 388.5L925.7 391.1L925.8 396.8L926.2 398.2" fill="none" stroke="#ffffff" stroke-opacity=".5" stroke-width=".55"/>
<path d="M896.7 439.5L897.8 439.5L899.1 439.0L900.0 440.1L900.8 440.6" fill="none" stroke="#ffffff" stroke-opacity=".5" stroke-width=".55"/>
<path d="M900.6 442.1L900.3 442.2L900.1 443.4" fill="none" stroke="#ffffff" stroke-opacity=".5" stroke-width=".55"/>
<path d="M879.4 459.1L880.5 459.3L881.4 459.3L881.6 459.1L882.4 459.2L882.8 460.1L882.2 460.6L882.2 462.1L881.9 462.4L881.9 463.3L881.3 463.4L881.8 464.5L881.4 465.7L881.9 466.3L881.7 466.8L881.2 467.5L881.3 468.0" fill="none" stroke="#ffffff" stroke-opacity=".5" stroke-width=".55"/>
<path d="M901.8 451.0L902.4 451.4L903.9 450.6L904.2 451.0L904.8 450.9L905.1 450.1L906.2 450.3L906.8 450.0L907.0 449.1L907.8 449.4L908.0 449.0L909.4 448.6L909.7 449.4L911.8 449.9L911.6 450.9L912.0 451.8" fill="none" stroke="#ffffff" stroke-opacity=".5" stroke-width=".55"/>
<path d="M905.7 447.8L905.8 448.1L905.6 448.7L906.2 449.1L907.0 449.1" fill="none" stroke="#ffffff" stroke-opacity=".5" stroke-width=".55"/>
<path d="M911.5 444.9L912.5 445.6L913.3 444.7L913.8 444.5L915.0 445.2L915.6 445.1L916.3 445.5L916.2 445.8L916.3 446.5L916.2 447.4L915.4 447.4L915.7 447.8L915.2 449.2L914.9 449.6L913.7 449.6L913.0 450.1L911.8 449.9" fill="none" stroke="#ffffff" stroke-opacity=".5" stroke-width=".55"/>
<path d="M913.2 440.4L914.2 440.6L915.3 440.8L915.2 441.5L915.9 441.9L916.2 441.3L917.1 441.6L917.3 442.3L918.3 442.4L919.0 443.5L918.6 443.5L918.4 443.9L918.0 444.0L917.9 444.5L917.7 444.6L917.1 445.0L916.5 445.0L916.3 445.5" fill="none" stroke="#ffffff" stroke-opacity=".5" stroke-width=".55"/>
<path d="M919.0 443.5L919.7 443.3L920.4 444.1L921.3 443.7L921.9 443.9L923.0 443.6L924.3 444.4L924.6 444.5L924.3 443.5L925.6 441.7L926.3 441.5L926.4 440.8L925.7 438.8L925.7 437.8L925.2 436.7L926.1 436.2L926.1 435.3L925.7 434.4L925.6 433.3L925.3 432.5L924.6 432.3" fill="none" stroke="#ffffff" stroke-opacity=".5" stroke-width=".55"/>
<path d="M925.6 433.3L927.0 433.3L928.6 432.4L928.9 431.0L930.1 430.2L929.9 429.1L928.6 427.8L927.6 427.1L926.2 427.4L923.8 427.2L922.2 428.0" fill="none" stroke="#ffffff" stroke-opacity=".5" stroke-width=".55"/>
<path d="M929.9 429.1L930.8 428.6L932.4 427.6" fill="none" stroke="#ffffff" stroke-opacity=".5" stroke-width=".55"/>
<path d="M926.8 423.4L928.0 422.9L928.7 423.2L929.9 424.2L931.1 424.2" fill="none" stroke="#ffffff" stroke-opacity=".5" stroke-width=".55"/>
<path d="M925.7 438.8L926.4 438.7L927.2 438.1L928.3 438.1L929.7 438.2L931.3 438.8L932.5 438.8L933.0 439.2L933.5 438.8L933.9 439.3L935.2 439.2L935.8 439.4L935.9 438.3L936.3 437.7L937.5 437.6" fill="none" stroke="#ffffff" stroke-opacity=".5" stroke-width=".55"/>
<path d="M924.3 444.4L923.9 445.0L923.6 445.9L924.4 446.4L924.5 447.0" fill="none" stroke="#ffffff" stroke-opacity=".5" stroke-width=".55"/>
<path d="M930.1 446.3L930.5 446.0L931.4 445.8L932.5 446.4L933.1 446.5L933.7 447.1L933.6 447.8L934.1 448.1L934.3 449.0L934.8 449.6L934.7 449.9L935.0 450.1L934.6 450.2L933.8 450.2L933.6 449.9L933.3 450.1L933.4 450.4L933.1 451.1L932.8 451.8L932.4 452.0" fill="none" stroke="#ffffff" stroke-opacity=".5" stroke-width=".55"/>
<path d="M916.3 446.5L917.1 447.0L917.6 447.3L918.8 447.0L918.9 446.6L919.5 446.5L920.2 446.2L920.3 446.3L921.0 446.1L921.3 445.6L921.8 445.4L923.3 446.1L923.6 445.9" fill="none" stroke="#ffffff" stroke-opacity=".5" stroke-width=".55"/>
<path d="M915.2 449.2L915.4 449.2L915.7 449.9L916.2 450.2L917.3 451.1L918.4 451.5L919.0 451.2L920.1 450.6L921.0 450.7" fill="none" stroke="#ffffff" stroke-opacity=".5" stroke-width=".55"/>
<path d="M915.7 449.9L914.6 450.5L914.4 451.3L913.9 451.5L914.0 452.1L913.4 452.1L912.9 451.7L912.6 452.1L911.7 452.0" fill="none" stroke="#ffffff" stroke-opacity=".5" stroke-width=".55"/>
<path d="M919.0 451.2L919.3 452.0L919.8 452.5L919.2 453.3L918.6 452.8L917.6 452.9L916.4 452.5L915.7 452.6L915.4 453.0L914.9 452.5L914.6 453.4L915.3 454.3L915.6 454.9L916.2 455.7L916.8 456.1L917.3 456.9L918.6 457.7L918.4 458.0" fill="none" stroke="#ffffff" stroke-opacity=".5" stroke-width=".55"/>
<path d="M919.2 453.3L919.7 453.3L919.4 454.2L920.1 454.9L919.9 455.9L919.5 456.0L918.8 456.6L918.6 457.7" fill="none" stroke="#ffffff" stroke-opacity=".5" stroke-width=".55"/>
<path d="M919.5 456.0L919.9 456.3L920.6 456.8L921.1 457.2L920.7 457.8L921.0 458.3L921.4 458.5L921.5 459.2L921.3 459.9L921.5 460.7L922.1 461.2" fill="none" stroke="#ffffff" stroke-opacity=".5" stroke-width=".55"/>
<path d="M919.7 459.2L919.6 458.5L920.3 457.6L920.7 457.8" fill="none" stroke="#ffffff" stroke-opacity=".5" stroke-width=".55"/>
<path d="M920.9 463.4L921.5 462.5L921.6 461.9L922.1 461.6L922.1 461.2L923.0 461.0L923.6 460.6L924.4 460.6L924.6 460.3L924.9 460.2L925.9 460.3L927.1 459.7L928.1 460.4L929.4 460.2L930.1 459.8L929.7 461.0L929.3 461.2" fill="none" stroke="#ffffff" stroke-opacity=".5" stroke-width=".55"/>
<path d="M929.4 460.2L929.4 459.3L930.9 458.7L932.1 458.9" fill="none" stroke="#ffffff" stroke-opacity=".5" stroke-width=".55"/>
<path d="M924.5 454.6L924.1 455.0L924.2 455.7L924.9 456.6L924.4 457.2L924.1 457.8L924.1 458.3L924.8 458.9L924.9 460.2" fill="none" stroke="#ffffff" stroke-opacity=".5" stroke-width=".55"/>
<path d="M921.4 458.5L922.6 458.5L922.9 458.5L924.1 458.3" fill="none" stroke="#ffffff" stroke-opacity=".5" stroke-width=".55"/>
<path d="M921.1 457.2L921.4 457.2L921.6 456.6L921.8 456.5L922.3 456.9L922.9 458.5" fill="none" stroke="#ffffff" stroke-opacity=".5" stroke-width=".55"/>
<path d="M943.8 470.3L944.2 469.9L944.6 469.5L944.6 468.5L945.1 468.9L946.7 468.4L947.4 468.7L948.6 468.7L950.3 468.1L951.0 468.1L952.7 467.8" fill="none" stroke="#ffffff" stroke-opacity=".5" stroke-width=".55"/>
<path d="M951.5 459.8L953.1 459.7L954.4 460.7L954.7 461.3L954.5 462.3L955.6 462.7L956.2 463.3" fill="none" stroke="#ffffff" stroke-opacity=".5" stroke-width=".55"/>
<path d="M954.4 460.7L956.4 460.4L956.8 460.1L957.8 460.6L958.6 460.7L958.8 460.5L958.1 459.5L958.5 459.2" fill="none" stroke="#ffffff" stroke-opacity=".5" stroke-width=".55"/>
<path d="M956.4 460.4L956.7 460.9L957.3 461.2L957.0 461.7L957.7 462.3L957.3 462.9L957.9 463.4L958.6 463.7L958.6 465.0" fill="none" stroke="#ffffff" stroke-opacity=".5" stroke-width=".55"/>
<path d="M943.2 475.7L944.8 476.4L947.6 474.6" fill="none" stroke="#ffffff" stroke-opacity=".5" stroke-width=".55"/>
<path d="M943.5 472.4L944.2 472.5L944.4 473.2L943.7 473.8L943.3 474.7" fill="none" stroke="#ffffff" stroke-opacity=".5" stroke-width=".55"/>
<path d="M942.3 475.1L942.8 475.1L942.9 474.8L943.3 474.7L943.3 475.4L943.2 475.7L942.9 476.3L942.9 477.3L942.7 477.8L942.7 478.4L942.0 481.1" fill="none" stroke="#ffffff" stroke-opacity=".5" stroke-width=".55"/>
<path d="M966.5 497.6L967.6 500.1L968.1 501.2" fill="none" stroke="#ffffff" stroke-opacity=".5" stroke-width=".55"/>
<path d="M972.8 488.5L972.1 488.5L971.9 489.5L972.2 489.7L971.5 490.0L971.5 490.7L971.1 491.3L971.1 491.9" fill="none" stroke="#ffffff" stroke-opacity=".5" stroke-width=".55"/>
<path d="M967.2 459.4L967.9 458.7L969.5 458.3L970.4 458.9L971.4 460.4L972.2 460.3L972.1 453.0L975.8 451.8L976.1 452.0L978.3 453.5L979.5 454.2L980.8 456.0L982.5 455.7L985.0 455.6L986.7 457.0L986.6 459.0L987.3 459.0L987.6 460.5L989.4 460.6L989.8 461.5L990.3 461.5L990.9 460.1L992.8 458.8L993.7 458.4L994.0 457.6L994.9 457.3L997.3 458.0L997.5 456.8L998.3 456.4L1000.4 457.2L1000.9 457.0L1003.3 457.1L1005.4 457.3L1006.1 458.0L1007.0 458.3" fill="none" stroke="#ffffff" stroke-opacity=".5" stroke-width=".55"/>
<path d="M972.2 460.3L973.8 460.2L973.6 459.3L974.8 458.6L976.0 457.5L977.9 458.5L978.1 460.0L978.6 460.4L980.2 460.3L980.6 460.7L981.3 462.6L983.0 463.9L983.9 464.8L985.4 465.7L987.3 466.5L987.3 467.6" fill="none" stroke="#ffffff" stroke-opacity=".5" stroke-width=".55"/>
<path d="M987.3 467.6L986.9 467.5L986.2 467.0L986.0 467.7L984.8 468.0L984.5 469.5L983.7 470.0L982.5 470.3L982.2 471.1L981.1 471.3L979.7 470.6" fill="none" stroke="#ffffff" stroke-opacity=".5" stroke-width=".55"/>
<path d="M987.3 467.6L988.1 467.6L989.2 468.0L990.0 466.1L989.7 464.8L988.6 464.3L989.0 463.5L990.2 463.6L990.9 462.6L991.3 461.4L993.2 460.9L992.9 461.8L993.1 462.3L993.7 462.3L994.8 462.5L996.7 461.1L995.0 460.1L993.9 460.6L992.9 459.9L994.1 458.6L993.7 458.4" fill="none" stroke="#ffffff" stroke-opacity=".5" stroke-width=".55"/>
<path d="M993.7 462.3L993.2 462.8L991.6 462.5L991.5 463.6L993.1 463.5L994.8 464.1L997.6 463.8" fill="none" stroke="#ffffff" stroke-opacity=".5" stroke-width=".55"/>
<path d="M989.2 468.0L989.6 468.2L990.6 467.6L991.1 468.0L991.6 467.1L992.5 467.2L992.7 466.9L992.8 466.2L993.4 465.5L994.2 465.9L994.1 466.5L994.5 466.6L994.4 468.1L994.9 468.7L995.4 468.3L996.1 468.1L996.9 467.3L997.9 467.5L999.4 467.5" fill="none" stroke="#ffffff" stroke-opacity=".5" stroke-width=".55"/>
<path d="M979.2 480.5L981.6 481.4L983.0 481.1L983.9 481.4L984.2 481.0L985.2 481.1L987.0 480.4L987.1 479.0L987.9 478.1L989.0 478.1L989.1 477.6L990.2 477.4L990.7 477.6L991.3 477.1L991.2 476.1L991.8 475.0L992.7 474.6L992.2 473.5L993.5 473.5L993.9 472.9L993.9 472.2L994.6 471.5L994.4 470.6L994.1 469.9L994.9 469.1L996.5 468.7L998.1 468.5L998.8 468.2L999.7 468.0" fill="none" stroke="#ffffff" stroke-opacity=".5" stroke-width=".55"/>
<path d="M1033.3 511.1L1033.9 509.6L1034.7 508.2L1034.1 506.9L1034.1 506.2L1034.0 505.3L1033.0 504.2L1032.7 503.4L1033.2 503.2L1033.7 501.9L1033.1 500.9L1032.2 499.8L1031.5 498.5L1032.1 498.2L1032.7 496.5L1033.8 496.5L1034.6 495.8L1035.4 495.5L1035.7 494.9L1036.9 493.9" fill="none" stroke="#ffffff" stroke-opacity=".5" stroke-width=".55"/>
<path d="M1035.4 495.5L1036.0 495.9L1036.1 496.8L1037.1 496.9L1036.7 498.5L1036.8 499.9L1038.3 499.0L1038.7 499.2L1039.6 499.2L1039.8 498.7L1040.9 498.8L1042.0 500.0L1042.1 501.5L1043.3 502.8L1043.2 504.0L1042.7 504.7L1041.4 504.5L1039.5 504.8L1038.6 506.0L1039.0 507.8" fill="none" stroke="#ffffff" stroke-opacity=".5" stroke-width=".55"/>
<path d="M1042.7 504.7L1043.9 505.3L1044.6 504.3L1045.8 504.8" fill="none" stroke="#ffffff" stroke-opacity=".5" stroke-width=".55"/>
<path d="M1035.4 516.1L1035.6 515.8L1036.8 516.5L1036.9 517.2L1037.8 517.0L1038.3 516.4" fill="none" stroke="#ffffff" stroke-opacity=".5" stroke-width=".55"/>
<path d="M1072.8 466.9L1073.5 466.8L1074.0 465.9L1075.1 465.9L1075.7 465.7L1075.9 465.3" fill="none" stroke="#ffffff" stroke-opacity=".5" stroke-width=".55"/>
<path d="M1055.6 518.9L1056.2 519.6L1056.6 519.1L1057.2 519.2L1057.3 518.2L1057.4 517.5" fill="none" stroke="#ffffff" stroke-opacity=".5" stroke-width=".55"/>
<path d="M1024.3 495.1L1023.9 494.3L1024.8 494.1L1024.7 493.1L1024.8 493.0" fill="none" stroke="#ffffff" stroke-opacity=".5" stroke-width=".55"/>
<path d="M884.9 488.4L882.8 488.4L883.4 495.1L884.1 501.6L884.4 501.8L884.1 502.9L878.3 502.9L878.1 503.2L877.5 503.1L876.7 503.4L875.7 503.0L875.3 503.0L875.0 503.9L874.6 504.2" fill="none" stroke="#ffffff" stroke-opacity=".5" stroke-width=".55"/>
<path d="M874.6 504.2L873.6 503.2L872.7 502.1L871.8 501.7L871.1 501.2L870.3 501.2L869.6 501.6L868.9 501.4L868.4 501.9" fill="none" stroke="#ffffff" stroke-opacity=".5" stroke-width=".55"/>
<path d="M874.6 504.2L874.6 505.1L874.9 506.0L875.5 506.4L875.6 506.9L875.5 507.4L875.3 507.5L874.5 507.3L874.1 507.6L873.1 507.2L872.4 507.2L869.7 507.1L869.3 507.3L868.9 507.2L868.1 507.5" fill="none" stroke="#ffffff" stroke-opacity=".5" stroke-width=".55"/>
<path d="M868.1 505.7L869.6 505.7L869.9 505.3L870.4 505.3L871.0 505.6L871.4 505.6L871.9 505.4L872.2 505.8L871.5 506.2L870.9 506.1L870.3 505.8L869.8 506.2L869.5 506.2L869.2 506.4L867.9 506.3" fill="none" stroke="#ffffff" stroke-opacity=".5" stroke-width=".55"/>
<path d="M872.4 507.2L872.3 507.7L872.2 507.8L872.3 508.3L872.1 508.5L871.8 508.5L871.4 508.8L871.0 508.7L870.3 509.4" fill="none" stroke="#ffffff" stroke-opacity=".5" stroke-width=".55"/>
<path d="M875.5 507.4L875.8 507.9L876.2 507.7L876.4 507.8L876.8 508.2L877.4 508.3L877.8 507.9L878.3 507.8L878.6 507.6L878.9 507.6L879.2 507.9L879.4 508.3L880.0 508.9L879.7 509.3L879.6 509.8L879.9 509.6L880.1 509.8L880.0 510.2L880.5 510.6L880.2 510.8L880.1 511.3L880.4 511.9L880.8 513.0L880.2 513.2L880.1 513.4L880.2 513.7L880.1 514.3L879.9 514.3" fill="none" stroke="#ffffff" stroke-opacity=".5" stroke-width=".55"/>
<path d="M873.0 512.6L873.8 511.9L873.9 511.5L874.2 511.2L874.6 511.2L874.9 510.9L876.1 510.9L876.5 511.4L876.8 512.0L876.7 512.4L877.0 512.8L876.9 513.3L877.3 513.3L877.6 513.2L878.0 513.1L878.6 514.0L878.5 514.5L878.8 514.9L879.2 514.9L879.5 514.3L879.9 514.3" fill="none" stroke="#ffffff" stroke-opacity=".5" stroke-width=".55"/>
<path d="M877.3 513.3L876.7 513.9L876.0 514.7L876.0 515.1L875.6 515.6" fill="none" stroke="#ffffff" stroke-opacity=".5" stroke-width=".55"/>
<path d="M879.9 514.3L879.8 514.7L880.0 515.4L879.7 516.1L880.1 516.5L880.6 516.6L881.2 517.2L881.2 517.7L881.1 517.9L881.0 519.1" fill="none" stroke="#ffffff" stroke-opacity=".5" stroke-width=".55"/>
<path d="M880.5 510.6L880.7 510.5L881.1 510.7L882.2 510.8L882.4 510.3L882.7 510.4L883.1 510.2L883.3 510.8L883.7 510.6L884.3 510.4L884.2 509.6L884.5 508.9L884.5 508.5L885.7 507.2L885.9 506.2L886.3 505.9L887.0 506.1L887.6 505.8L887.7 505.4L888.9 504.7L889.1 504.3L890.5 503.7L891.3 503.4L891.6 503.7L892.5 503.7" fill="none" stroke="#ffffff" stroke-opacity=".5" stroke-width=".55"/>
<path d="M892.5 503.7L893.5 503.7L894.0 503.1L895.9 503.0L897.2 502.8L897.3 501.9L898.1 500.9L898.1 497.4" fill="none" stroke="#ffffff" stroke-opacity=".5" stroke-width=".55"/>
<path d="M884.3 510.4L884.9 510.7L885.1 511.2L885.8 511.5L886.3 511.2L887.0 511.1L887.9 511.5L888.3 513.5L887.7 514.8L887.4 516.4L888.0 517.6L887.9 518.2" fill="none" stroke="#ffffff" stroke-opacity=".5" stroke-width=".55"/>
<path d="M887.9 511.5L887.8 510.4L887.8 509.6L890.3 509.5L890.9 509.6L891.4 509.4L892.0 509.5L891.9 509.9L892.5 510.7L892.5 511.7L892.7 512.9L893.0 513.4L892.7 514.7L892.8 515.4L893.2 516.3L893.5 516.8" fill="none" stroke="#ffffff" stroke-opacity=".5" stroke-width=".55"/>
<path d="M892.0 509.5L893.3 509.5L893.1 510.3L894.0 511.2L894.1 511.9L894.4 512.2L894.3 515.5L894.7 516.5" fill="none" stroke="#ffffff" stroke-opacity=".5" stroke-width=".55"/>
<path d="M893.3 509.5L893.8 509.3L894.1 508.7L894.8 508.6L895.1 508.1L895.1 507.1L893.5 506.8L893.4 506.1L892.6 505.1L892.4 504.4L892.5 503.7" fill="none" stroke="#ffffff" stroke-opacity=".5" stroke-width=".55"/>
<path d="M895.1 508.1L895.6 507.7L896.1 507.7L897.2 508.5L897.1 509.0L897.4 509.9L897.2 510.5L897.3 510.9L896.6 511.8L896.2 512.2L895.9 513.1L895.9 514.0L895.9 516.4" fill="none" stroke="#ffffff" stroke-opacity=".5" stroke-width=".55"/>
<path d="M897.2 508.5L897.3 507.2L897.7 506.6L897.9 505.8L898.3 505.5L899.8 505.3L901.2 505.8L901.8 506.4L902.5 506.4L903.2 506.1L904.9 506.8L905.6 506.8L906.5 506.2L907.3 506.2L907.7 506.0L908.5 506.1L909.6 506.5L910.7 505.7L911.1 505.7L911.4 504.5" fill="none" stroke="#ffffff" stroke-opacity=".5" stroke-width=".55"/>
<path d="M911.4 504.5L912.0 502.6L913.8 501.2L913.9 499.2L914.5 496.2L914.8 495.5L914.2 495.0L914.2 494.5L913.6 494.1L913.3 491.7L912.3 492.3L911.5 491.4L909.2 490.7" fill="none" stroke="#ffffff" stroke-opacity=".5" stroke-width=".55"/>
<path d="M913.3 491.7L914.7 490.8L920.4 493.8L926.1 496.7L926.2 496.1L927.8 496.1L927.8 493.0" fill="none" stroke="#ffffff" stroke-opacity=".5" stroke-width=".55"/>
<path d="M905.6 479.8L906.4 478.7L906.3 478.0L907.2 477.3L907.7 476.8L908.4 476.3L908.5 475.0" fill="none" stroke="#ffffff" stroke-opacity=".5" stroke-width=".55"/>
<path d="M926.1 496.7L926.2 502.7L925.0 502.6L924.3 503.7L923.9 504.6L924.2 505.0L923.8 505.4L923.9 506.0L923.6 506.6L923.4 507.2L923.9 507.1L924.2 507.7L924.2 508.5L924.8 508.9L924.7 509.3" fill="none" stroke="#ffffff" stroke-opacity=".5" stroke-width=".55"/>
<path d="M924.7 509.3L923.8 509.5L923.1 510.1L922.1 511.7L920.7 512.4L919.3 512.3L918.9 512.4L919.1 512.9L918.3 513.5L917.7 514.0L915.9 514.6L915.6 514.2L915.3 514.2L915.1 514.6L913.9 514.7L914.1 514.3L913.7 513.3L913.5 512.7L912.8 512.5L912.0 511.6L912.3 510.9L913.0 511.1L913.4 511.0L914.2 511.0L913.4 509.7L913.4 508.7L913.3 507.7L912.8 506.8L912.9 506.1L912.0 506.1L912.0 505.1L911.4 504.5" fill="none" stroke="#ffffff" stroke-opacity=".5" stroke-width=".55"/>
<path d="M912.3 507.3L912.9 507.9L912.7 508.2L912.7 508.7L911.4 509.8L911.1 510.7L910.9 511.5L910.6 511.8L910.3 512.8L909.5 513.4L909.3 514.1L909.0 514.7L908.8 515.3L907.8 515.8L907.0 515.2L906.5 515.2L905.6 516.1L905.2 516.1L904.5 517.5L904.2 518.5" fill="none" stroke="#ffffff" stroke-opacity=".5" stroke-width=".55"/>
<path d="M913.9 514.7L913.2 516.2L912.8 516.4L912.7 517.5L912.9 518.1L912.7 518.6L913.4 519.3L913.5 519.8L914.1 520.6L914.7 521.0L914.8 521.7L914.9 522.1L914.8 522.9L913.7 522.5L912.5 522.2L910.7 522.1L910.5 522.0L909.7 522.2L908.8 522.0L908.2 522.1L905.8 522.1" fill="none" stroke="#ffffff" stroke-opacity=".5" stroke-width=".55"/>
<path d="M908.2 522.1L908.2 523.8L906.1 523.8L905.6 523.9" fill="none" stroke="#ffffff" stroke-opacity=".5" stroke-width=".55"/>
<path d="M910.7 522.1L910.6 522.7L911.0 523.5L912.1 523.3L912.5 523.6L911.8 525.3L912.5 526.1L912.7 527.3L912.5 528.2L912.0 528.9L910.8 528.8L910.0 528.1L909.9 528.8L908.9 529.0L908.4 529.3L909.0 530.3L907.9 531.1" fill="none" stroke="#ffffff" stroke-opacity=".5" stroke-width=".55"/>
<path d="M914.9 522.1L915.7 520.8L916.5 520.0L917.5 520.3L918.4 520.3L918.3 521.2L917.9 522.0L917.6 522.9L917.5 524.1L917.5 524.9L917.3 525.4L917.3 526.0L917.1 526.4L916.2 527.1L915.5 527.8L914.9 529.2L914.9 530.4L914.6 530.9L913.7 531.6L912.9 532.5L912.4 532.2L912.3 531.8L911.5 531.8L911.0 532.4L910.6 532.2L910.1 531.7L909.6 532.0L909.1 532.6" fill="none" stroke="#ffffff" stroke-opacity=".5" stroke-width=".55"/>
<path d="M918.4 520.3L918.6 519.3L919.1 518.6L919.9 518.1L921.1 518.6L922.0 519.2L923.0 519.3L924.1 519.6L924.5 518.7L924.7 518.6L925.4 518.7L927.0 518.0L927.5 518.3L928.0 518.3L928.2 517.9L928.7 517.8L929.8 518.0L930.7 518.0L931.2 517.9L931.0 517.4L929.9 516.8L929.5 515.9L929.0 515.3L928.0 514.6L928.0 514.1L927.2 513.5L926.2 513.0L925.6 512.5L925.5 512.0L925.7 511.4L925.7 510.8L924.9 509.9L924.7 509.3" fill="none" stroke="#ffffff" stroke-opacity=".5" stroke-width=".55"/>
<path d="M926.2 513.0L926.7 512.8L927.2 512.5L927.5 511.2L927.9 510.6L928.9 510.4L929.2 510.8L929.9 511.6L930.3 511.7L930.8 511.5L931.9 511.5L932.1 511.8L933.5 511.8L933.5 511.5L934.3 511.3L934.4 510.8L935.0 510.5L936.2 511.4L936.9 511.2L937.6 510.2L938.4 509.4L938.3 508.5L937.9 508.1L938.8 508.0L938.9 507.7L939.6 507.8L939.4 508.9L939.6 509.9L940.3 510.5L940.5 511.0L940.4 511.7L940.7 512.9" fill="none" stroke="#ffffff" stroke-opacity=".5" stroke-width=".55"/>
<path d="M944.2 504.5L944.0 503.9L944.6 501.7L944.8 500.7L945.2 500.2L946.3 500.0L947.0 499.1" fill="none" stroke="#ffffff" stroke-opacity=".5" stroke-width=".55"/>
<path d="M952.7 507.2L953.3 507.4L953.7 507.0" fill="none" stroke="#ffffff" stroke-opacity=".5" stroke-width=".55"/>
<path d="M953.3 509.6L953.8 508.8" fill="none" stroke="#ffffff" stroke-opacity=".5" stroke-width=".55"/>
<path d="M940.7 519.3L939.8 519.9L938.8 519.9L937.7 520.3L936.8 519.9L936.2 520.3L934.9 519.4L934.6 518.8L933.8 519.1L933.1 519.0L932.7 519.2L932.1 519.0L931.2 517.9" fill="none" stroke="#ffffff" stroke-opacity=".5" stroke-width=".55"/>
<path d="M936.2 520.3L936.1 522.0L936.7 522.2L936.2 522.7L935.6 523.1L935.1 523.8L934.8 524.5L934.7 525.7L934.4 526.2L934.4 527.3L934.7 527.4L935.6 527.0L936.1 526.8L937.7 526.8L940.6 526.7" fill="none" stroke="#ffffff" stroke-opacity=".5" stroke-width=".55"/>
<path d="M934.4 527.3L934.0 527.7L933.9 528.5L933.7 528.6L933.6 529.4L933.9 530.1L934.0 531.8L934.3 533.1L934.1 533.9L934.4 534.7L935.3 535.5L936.0 537.3" fill="none" stroke="#ffffff" stroke-opacity=".5" stroke-width=".55"/>
<path d="M936.1 526.8L936.1 527.8L936.1 528.6L935.6 528.8L935.7 529.4L936.0 529.7L936.0 530.2L935.7 530.5L935.1 531.2L934.6 531.7L934.0 531.8" fill="none" stroke="#ffffff" stroke-opacity=".5" stroke-width=".55"/>
<path d="M933.6 529.4L934.4 529.5L934.9 528.7L935.6 528.8" fill="none" stroke="#ffffff" stroke-opacity=".5" stroke-width=".55"/>
<path d="M936.0 537.3L936.6 537.7L937.2 538.0L938.1 538.2L938.9 538.6L939.6 539.3L940.3 538.9L941.1 540.0L941.5 542.0" fill="none" stroke="#ffffff" stroke-opacity=".5" stroke-width=".55"/>
<path d="M938.9 538.6L940.0 540.5L939.7 540.9L939.4 542.1L939.7 543.3L939.3 543.8L938.8 545.2L939.6 545.6" fill="none" stroke="#ffffff" stroke-opacity=".5" stroke-width=".55"/>
<path d="M936.0 537.3L933.2 537.6L932.8 538.5L933.1 539.2L932.8 540.9L932.6 542.4L933.0 542.6L934.0 543.2L934.4 542.9L934.5 544.5L933.4 544.5L932.9 543.7L932.3 543.1L931.2 542.9L930.9 542.1L930.0 542.6L928.9 542.4L928.4 541.7L927.5 541.6L926.8 541.6L926.8 541.1L926.3 541.1" fill="none" stroke="#ffffff" stroke-opacity=".5" stroke-width=".55"/>
<path d="M926.3 541.1L925.6 541.0L924.7 541.2L924.1 541.2L923.7 541.3L923.8 539.6L923.3 539.1L923.2 538.2L923.4 537.3L923.2 536.7L923.1 535.8L921.4 535.8L921.5 535.3L920.8 535.3L920.7 535.6L919.8 535.6L919.5 536.5L919.2 536.8L918.4 536.6L918.0 536.8L917.0 537.0L916.5 536.2L916.2 535.7L915.7 534.9L915.4 533.8L911.2 533.8L910.6 533.9L910.2 533.9L909.6 534.1" fill="none" stroke="#ffffff" stroke-opacity=".5" stroke-width=".55"/>
<path d="M926.3 541.1L926.4 541.6L926.2 542.3L926.5 543.0L926.3 543.5L926.4 544.0L923.4 544.0L923.4 548.7L924.3 549.9L925.3 550.9L922.6 551.5L919.2 551.3L918.2 550.5L912.4 550.6L912.1 550.7L911.3 550.0L910.3 550.0L909.5 550.2L908.8 550.5" fill="none" stroke="#ffffff" stroke-opacity=".5" stroke-width=".55"/>
<path d="M925.3 550.9L926.4 550.5L927.4 550.6L927.9 550.9L927.9 551.1L928.2 551.2L929.8 551.3L930.3 551.5L930.7 551.5L931.5 550.5L932.8 549.3L933.3 549.2L933.5 548.6L934.3 548.0L935.4 547.8" fill="none" stroke="#ffffff" stroke-opacity=".5" stroke-width=".55"/>
<path d="M927.9 551.1L927.1 551.4L926.7 551.4L925.8 552.0L925.2 551.4L923.0 551.9L922.0 552.0L921.9 557.4L920.5 557.4L920.5 562.0L920.5 567.9L919.2 568.7L918.4 568.9L917.6 568.6L916.9 568.4L916.7 567.8L916.1 567.3L915.4 568.1" fill="none" stroke="#ffffff" stroke-opacity=".5" stroke-width=".55"/>
<path d="M920.5 562.0L920.9 562.2L921.7 563.7L921.6 564.7L921.9 565.3L923.0 565.1L923.7 564.4L924.3 563.9L924.7 563.2L925.4 562.8L926.0 563.0L926.7 563.4L927.9 563.5L928.8 563.1L928.9 562.6L929.2 561.9L929.9 561.8L930.4 561.2L930.8 560.1L932.1 559.0L934.2 557.8" fill="none" stroke="#ffffff" stroke-opacity=".5" stroke-width=".55"/>
<path d="M928.2 551.2L928.7 552.4L929.0 552.6L929.5 553.5L931.1 555.2L931.7 555.4L931.7 555.9L932.1 556.9L934.2 557.8L934.7 557.8L935.4 558.1L935.9 557.9L936.7 558.1" fill="none" stroke="#ffffff" stroke-opacity=".5" stroke-width=".55"/>
<path d="M933.5 568.7L934.0 569.2L933.6 570.0L933.3 570.6L932.5 570.8L932.3 571.4L931.8 571.5L930.7 570.2L931.4 569.2L932.2 568.6L932.9 568.2L933.5 568.7" fill="none" stroke="#ffffff" stroke-opacity=".5" stroke-width=".55"/>
<path d="M937.9 565.1L937.7 565.8L936.8 566.0L936.0 565.1L935.9 564.6L936.3 564.0L936.5 563.5L936.9 563.4L937.6 563.7" fill="none" stroke="#ffffff" stroke-opacity=".5" stroke-width=".55"/>
<path d="M764.3 499.4L764.3 500.6L764.2 502.3L764.6 502.3" fill="none" stroke="#ffffff" stroke-opacity=".5" stroke-width=".55"/>
<path d="M765.6 502.5L764.3 503.5L764.2 503.8L764.0 504.5L763.6 504.6L762.9 505.5" fill="none" stroke="#ffffff" stroke-opacity=".5" stroke-width=".55"/>
<path d="M764.0 504.5L764.7 504.9L765.2 505.1L765.2 505.3L765.8 505.2L766.1 505.3L766.3 505.4L766.2 506.0" fill="none" stroke="#ffffff" stroke-opacity=".5" stroke-width=".55"/>
<path d="M766.9 506.6L767.5 506.2L767.7 506.2L767.7 505.5L768.0 505.4L768.3 505.4L768.6 505.0L769.1 505.3L769.2 505.2L769.5 505.0L770.0 504.6L770.0 504.3L770.3 503.9L770.5 503.9L771.0 504.2L771.3 504.0L771.7 504.0L772.2 503.8L772.4 503.6L772.9 503.6" fill="none" stroke="#ffffff" stroke-opacity=".5" stroke-width=".55"/>
<path d="M769.2 509.4L769.4 509.2L770.4 509.6L770.7 509.4L771.1 509.5L771.4 509.8L771.8 509.9L772.1 509.6" fill="none" stroke="#ffffff" stroke-opacity=".5" stroke-width=".55"/>
<path d="M773.7 511.6L773.2 511.7L773.2 512.3L773.5 512.5L773.3 512.7L773.3 512.9L773.2 513.2L773.1 513.5" fill="none" stroke="#ffffff" stroke-opacity=".5" stroke-width=".55"/>
<path d="M789.3 496.5L789.4 497.4L789.3 497.9L788.9 498.2L789.3 498.6L789.3 499.1" fill="none" stroke="#ffffff" stroke-opacity=".5" stroke-width=".55"/>
<path d="M759.9 504.3L759.9 503.9L760.1 503.5L759.9 503.2L760.6 502.0L762.4 502.0L762.4 501.5L762.2 501.4L762.0 501.1L761.5 500.8L761.0 500.3L761.6 500.3L761.6 499.4L764.3 499.4" fill="none" stroke="#ffffff" stroke-opacity=".5" stroke-width=".55"/>
</g>
<g fill="#fff" stroke="#c4c4c4" stroke-width=".8"><rect x="496.5" y="279.1" width="18.1" height="33.5" rx="1.8"/><rect x="496.5" y="319.4" width="18.1" height="17.7" rx="1.8"/></g>
<path d="M496.9 295.7H514.2" stroke="#d0d0d0" stroke-width=".7"/>
<g stroke="#111" stroke-width="1.25" fill="none"><path d="M501.9 288.4H509.3M505.6 284.7V292.1M502.2 304.7H509"/></g>
<g stroke="#222" stroke-width="1.25" fill="none" stroke-linejoin="miter"><path d="M501.8 326.6V324.4H504M507.2 324.4H509.4V326.6M509.4 329.8V332H507.2M504 332H501.8V329.8"/></g>
<rect x="496.4" y="525.8" width="71" height="105" rx="2" fill="#fff" stroke="#dcdcdc" stroke-width=".7"/>
<rect x="501.9" y="530.90" width="6.5" height="6.5" rx=".8" fill="#7db9e1"/>
<rect x="501.9" y="540.74" width="6.5" height="6.5" rx=".8" fill="#84bbdd"/>
<rect x="501.9" y="550.58" width="6.5" height="6.5" rx=".8" fill="#8fbdd2"/>
<rect x="501.9" y="560.42" width="6.5" height="6.5" rx=".8" fill="#95bdc8"/>
<rect x="501.9" y="570.26" width="6.5" height="6.5" rx=".8" fill="#b4d5c0"/>
<rect x="501.9" y="580.10" width="6.5" height="6.5" rx=".8" fill="#bfd7b6"/>
<rect x="501.9" y="589.94" width="6.5" height="6.5" rx=".8" fill="#d2dfb3"/>
<rect x="501.9" y="599.78" width="6.5" height="6.5" rx=".8" fill="#e2e2ab"/>
<rect x="501.9" y="609.62" width="6.5" height="6.5" rx=".8" fill="#f1e6a0"/>
<rect x="501.9" y="619.46" width="6.5" height="6.5" rx=".8" fill="#fbe897"/>
</svg>
<div class="t" style="right:749.8px;top:524.20px;font-size:6.6px;letter-spacing:.21px;color:#777">247,620,765.31</div>
<div class="t" style="right:749.8px;top:534.04px;font-size:6.6px;letter-spacing:.21px;color:#777">227,726,083.11</div>
<div class="t" style="right:749.8px;top:543.88px;font-size:6.6px;letter-spacing:.21px;color:#777">207,831,400.92</div>
<div class="t" style="right:749.8px;top:553.72px;font-size:6.6px;letter-spacing:.21px;color:#777">187,936,718.73</div>
<div class="t" style="right:749.8px;top:563.56px;font-size:6.6px;letter-spacing:.21px;color:#777">168,042,036.54</div>
<div class="t" style="right:749.8px;top:573.40px;font-size:6.6px;letter-spacing:.21px;color:#777">148,147,354.34</div>
<div class="t" style="right:749.8px;top:583.24px;font-size:6.6px;letter-spacing:.21px;color:#777">128,252,672.15</div>
<div class="t" style="right:749.8px;top:593.08px;font-size:6.6px;letter-spacing:.21px;color:#777">108,357,989.96</div>
<div class="t" style="right:749.8px;top:602.92px;font-size:6.6px;letter-spacing:.21px;color:#777">88,463,307.77</div>
<div class="t" style="right:749.8px;top:612.76px;font-size:6.6px;letter-spacing:.21px;color:#777">68,568,625.58</div>
<div style="position:absolute;left:490.3px;top:645.1px;width:5.4px;height:5.4px"><svg class="ri" viewBox="0 0 10 10"><circle cx="5" cy="5" r="3.6" fill="none" stroke="#6a6a6a" stroke-width="1.9" stroke-dasharray="9.4 1.9" stroke-dashoffset="-1"/><path d="M3.2 0.1L5.9 1.5 3.6 3.1zM6.8 9.9L4.1 8.5 6.4 6.9z" fill="#6a6a6a"/></svg></div><div class="t" style="left:497.2px;top:638.20px;font-size:7.2px;color:#767676;font-weight:400;letter-spacing:0.05px;">3 minutes ago</div>
</div></body></html>
